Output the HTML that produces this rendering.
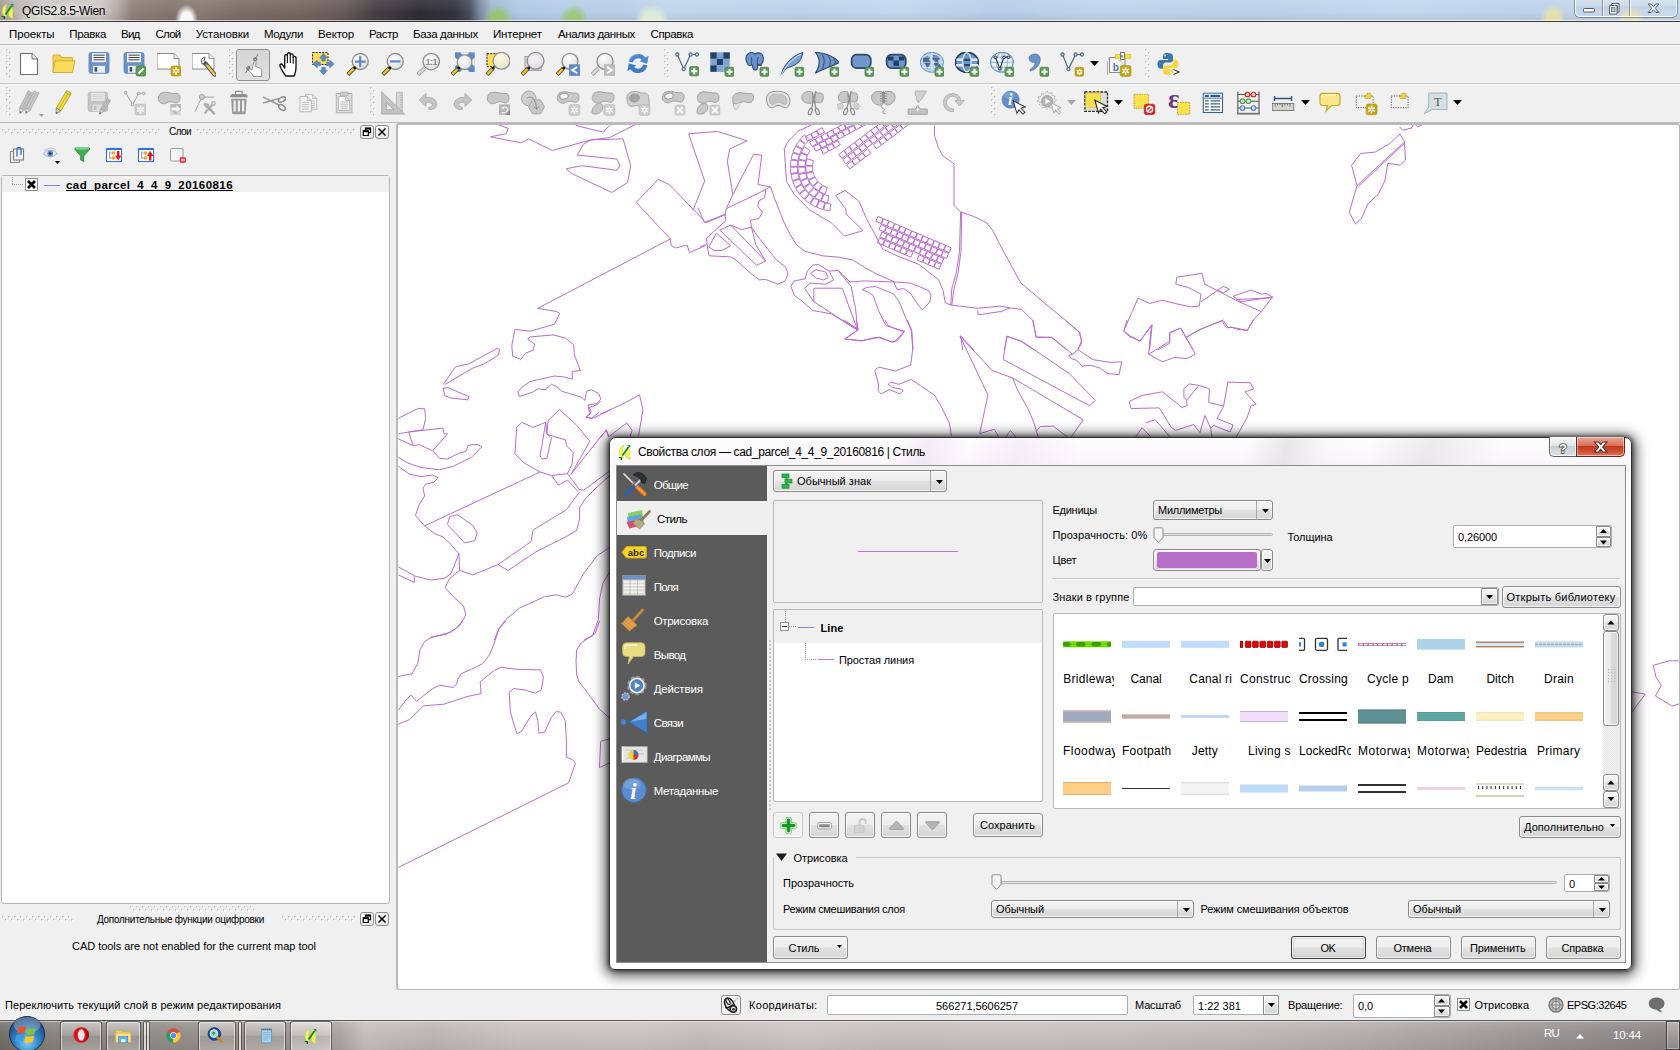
<!DOCTYPE html><html><head><meta charset="utf-8"><title>QGIS</title><style>
html,body{margin:0;padding:0;width:1680px;height:1050px;overflow:hidden;background:#f0f0f0;font-family:"Liberation Sans",sans-serif;}
body{position:relative}
div,span,svg.ic{position:absolute;box-sizing:border-box}
span{white-space:nowrap;line-height:16px;color:#000}
.t{font-size:11px}
.m{font-size:11.5px}
.l{font-size:12px}
.tt{font-size:12px}
.w{color:#fff}
.btn{border:1px solid #8a8a8a;border-radius:3px;background:linear-gradient(#f4f4f4 0%,#ededed 48%,#e1e1e1 52%,#d6d6d6 100%);box-shadow:inset 0 0 0 1px rgba(255,255,255,.75)}
.inp{border:1px solid #abadb3;border-radius:2px;background:#fff}
.frame{border:1px solid #b8b8b8;border-radius:2px}
.hdl{width:4px;background-image:radial-gradient(circle at 1px 1px,#c8c8c8 0.8px,transparent 1px),radial-gradient(circle at 3px 3px,#c8c8c8 0.8px,transparent 1px);background-size:4px 4px}
</style></head><body><svg width="0" height="0" style="position:absolute"><defs>
<radialGradient id="lg" cx=".4" cy=".35" r=".7"><stop offset="0" stop-color="#ffffff"/><stop offset="1" stop-color="#dcdcdc"/></radialGradient>
<radialGradient id="lgy" cx=".4" cy=".35" r=".7"><stop offset="0" stop-color="#fbf9e8"/><stop offset="1" stop-color="#e6e2c4"/></radialGradient>
<radialGradient id="lgp" cx=".4" cy=".35" r=".7"><stop offset="0" stop-color="#f6f3f6"/><stop offset="1" stop-color="#ddd8de"/></radialGradient>
</defs></svg><div style="left:0px;top:0px;width:1680px;height:22px;background:linear-gradient(90deg,#a29a9a 0px,#b9b2b1 14px,#cbc6c5 40px,#cdc8c6 100px,#b3a8a4 118px,#8f807a 132px,#85756f 170px,#8a7a74 200px,#7d6d68 240px,#76675f 300px,#66595a 345px,#443e42 378px,#2f2d34 420px,#33333d 455px,#4a4e5c 470px,#7d8aa3 480px,#a3b9d3 492px,#b1c9e4 520px,#b6cde8 560px,#b7cee6 584px,#b9cfe8 630px,#c2d5ea 664px,#bdd3ec 800px,#c3d7ee 900px,#b7cde8 1000px,#c0d5ec 1100px,#bbd1ea 1250px,#c3d7ee 1400px,#bdd2ea 1530px,#c2d5e8 1570px,#c5d8ec 1680px)"></div>
<div style="left:0px;top:0px;width:1680px;height:20px;background:linear-gradient(180deg,rgba(255,255,255,.10),rgba(255,255,255,0) 60%,rgba(0,0,0,.06))"></div>
<div style="left:175px;top:4px;width:23px;height:22px;background:radial-gradient(ellipse at 50% 75%,rgba(255,255,255,.95) 0%,rgba(255,255,255,.95) 35%,rgba(255,255,255,0) 70%)"></div>
<div style="left:14px;top:4px;width:52px;height:22px;background:radial-gradient(ellipse at 50% 75%,rgba(235,240,215,.5) 0%,rgba(235,240,215,.5) 35%,rgba(255,255,255,0) 70%)"></div>
<div style="left:483px;top:4px;width:30px;height:22px;background:radial-gradient(ellipse at 50% 75%,rgba(150,200,90,.75) 0%,rgba(150,200,90,.75) 35%,rgba(255,255,255,0) 70%)"></div>
<div style="left:559px;top:4px;width:30px;height:22px;background:radial-gradient(ellipse at 50% 75%,rgba(150,200,90,.7) 0%,rgba(150,200,90,.7) 35%,rgba(255,255,255,0) 70%)"></div>
<div style="left:634px;top:4px;width:36px;height:22px;background:radial-gradient(ellipse at 50% 75%,rgba(225,238,215,.9) 0%,rgba(225,238,215,.9) 35%,rgba(255,255,255,0) 70%)"></div>
<div style="left:1540px;top:4px;width:26px;height:22px;background:radial-gradient(ellipse at 50% 75%,rgba(242,228,160,.8) 0%,rgba(242,228,160,.8) 35%,rgba(255,255,255,0) 70%)"></div>
<div style="left:1618px;top:4px;width:26px;height:22px;background:radial-gradient(ellipse at 50% 75%,rgba(242,228,160,.7) 0%,rgba(242,228,160,.7) 35%,rgba(255,255,255,0) 70%)"></div>
<div style="left:0px;top:20px;width:1680px;height:1px;background:rgba(255,255,255,.6)"></div>
<div style="left:0px;top:21px;width:1680px;height:1px;background:#3a3a3c"></div>
<div style="left:14px;top:2px;width:100px;height:17px;background:radial-gradient(ellipse at center,rgba(255,255,255,.55),rgba(255,255,255,0) 70%)"></div>
<svg class="ic" style="left:0px;top:1px" width="15" height="19" viewBox="0 0 15 19"><path d="M6.800 3.200C3.500 4.500 1.800 8 2.300 11.500C2.700 14 4.500 15.800 6.500 15.500C5.300 12 5.500 7 6.800 3.200Z" fill="#eef55a" stroke="#c3cf3a" stroke-width=".5"/><path d="M11 5.500C13 7 13.600 10.500 12.600 13.500C12 15.200 13 16 13.200 17C11.500 17.600 10 16.800 9.200 15.500C8 13.500 8.600 9 11 5.500Z" fill="#eef55a" stroke="#c3cf3a" stroke-width=".5"/><path d="M5.500 13.500L11.500 5" stroke="#168a16" stroke-width="1.700"/><path d="M10.300 3.200L13.400 2.800L13.200 6Z" fill="#15a015"/><path d="M1.800 15l3.400.3-.3 2.800-1.300-.2.200-1.700-2-.2Z" fill="#0f5c0f"/></svg>
<span class="tt" style="left:22px;top:2.64px;;letter-spacing:-0.359px">QGIS2.8.5-Wien</span>
<div style="left:1575px;top:-4px;width:102px;height:21px;border:1px solid rgba(255,255,255,.85);border-radius:0 0 5px 5px;box-shadow:0 0 0 1px rgba(70,80,100,.55);background:linear-gradient(rgba(255,255,255,.35),rgba(255,255,255,.08) 45%,rgba(160,185,215,.15) 50%,rgba(255,255,255,.15))"></div>
<div style="left:1602px;top:0px;width:1px;height:16px;background:rgba(70,80,100,.55)"></div>
<div style="left:1603px;top:0px;width:1px;height:16px;background:rgba(255,255,255,.7)"></div>
<div style="left:1629px;top:0px;width:1px;height:16px;background:rgba(70,80,100,.55)"></div>
<div style="left:1630px;top:0px;width:1px;height:16px;background:rgba(255,255,255,.7)"></div>
<svg class="ic" style="left:1575px;top:0" width="102" height="17" viewBox="0 0 102 17"><rect x="8.500" y="8.500" width="11" height="3.500" rx=".8" fill="#fff" stroke="#535c6b" stroke-width="1"/><path d="M36.500 3.500h7.500v8.500h-7.500z" fill="#fff" stroke="#535c6b" stroke-width="1"/><rect x="38.300" y="5.500" width="4" height="4.500" fill="#b8cbe2" stroke="#535c6b" stroke-width=".8"/><path d="M34.500 5.500h7.500v8.500h-7.500z" fill="#fff" stroke="#535c6b" stroke-width="1"/><rect x="36.500" y="7.700" width="3.500" height="4" fill="#b8cbe2" stroke="#535c6b" stroke-width=".8"/><path d="M73 4h3.200l2.300 2.700L80.800 4H84l-3.800 4.300L84 12.500h-3.200l-2.300-2.700-2.300 2.700H73l3.800-4.200Z" fill="#fff" stroke="#535c6b" stroke-width="1"/></svg>
<div style="left:0px;top:22px;width:1680px;height:23px;background:#f0f0f0"></div>
<span class="m" style="left:9px;top:26.02px;;letter-spacing:-0.094px">Проекты</span>
<span class="m" style="left:69.3px;top:26.02px;;letter-spacing:-0.360px">Правка</span>
<span class="m" style="left:121px;top:26.02px;;letter-spacing:-0.771px">Вид</span>
<span class="m" style="left:155.5px;top:26.02px;;letter-spacing:-0.742px">Слой</span>
<span class="m" style="left:195.8px;top:26.02px;;letter-spacing:-0.105px">Установки</span>
<span class="m" style="left:264px;top:26.02px;;letter-spacing:-0.367px">Модули</span>
<span class="m" style="left:318px;top:26.02px;;letter-spacing:-0.193px">Вектор</span>
<span class="m" style="left:369px;top:26.02px;;letter-spacing:-0.422px">Растр</span>
<span class="m" style="left:413px;top:26.02px;;letter-spacing:-0.320px">База данных</span>
<span class="m" style="left:493px;top:26.02px;;letter-spacing:-0.173px">Интернет</span>
<span class="m" style="left:558px;top:26.02px;;letter-spacing:-0.373px">Анализ данных</span>
<span class="m" style="left:650.5px;top:26.02px;;letter-spacing:-0.375px">Справка</span>
<div style="left:0px;top:44px;width:1680px;height:1px;background:#b9b9b9"></div>
<div style="left:0px;top:45px;width:1680px;height:1px;background:#fbfbfb"></div>
<div style="left:0px;top:83px;width:1680px;height:1px;background:#c4c4c4"></div>
<div style="left:0px;top:84px;width:1680px;height:1px;background:#fafafa"></div>
<div style="left:0px;top:122px;width:1680px;height:1px;background:#bdbdbd"></div>
<svg class="ic" style="left:6px;top:49px" width="6" height="30" viewBox="0 0 6 30"><rect x="0" y="0" width="1.500" height="1.500" fill="#b9b9b9"/><rect x="1" y="1" width="1.500" height="1.500" fill="#fff"/><rect x="3" y="3" width="1.500" height="1.500" fill="#b9b9b9"/><rect x="4" y="4" width="1.500" height="1.500" fill="#fff"/><rect x="0" y="6" width="1.500" height="1.500" fill="#b9b9b9"/><rect x="1" y="7" width="1.500" height="1.500" fill="#fff"/><rect x="3" y="9" width="1.500" height="1.500" fill="#b9b9b9"/><rect x="4" y="10" width="1.500" height="1.500" fill="#fff"/><rect x="0" y="12" width="1.500" height="1.500" fill="#b9b9b9"/><rect x="1" y="13" width="1.500" height="1.500" fill="#fff"/><rect x="3" y="15" width="1.500" height="1.500" fill="#b9b9b9"/><rect x="4" y="16" width="1.500" height="1.500" fill="#fff"/><rect x="0" y="18" width="1.500" height="1.500" fill="#b9b9b9"/><rect x="1" y="19" width="1.500" height="1.500" fill="#fff"/><rect x="3" y="21" width="1.500" height="1.500" fill="#b9b9b9"/><rect x="4" y="22" width="1.500" height="1.500" fill="#fff"/><rect x="0" y="24" width="1.500" height="1.500" fill="#b9b9b9"/><rect x="1" y="25" width="1.500" height="1.500" fill="#fff"/><rect x="3" y="27" width="1.500" height="1.500" fill="#b9b9b9"/><rect x="4" y="28" width="1.500" height="1.500" fill="#fff"/></svg>
<svg class="ic" style="left:229px;top:49px" width="6" height="30" viewBox="0 0 6 30"><rect x="0" y="0" width="1.500" height="1.500" fill="#b9b9b9"/><rect x="1" y="1" width="1.500" height="1.500" fill="#fff"/><rect x="3" y="3" width="1.500" height="1.500" fill="#b9b9b9"/><rect x="4" y="4" width="1.500" height="1.500" fill="#fff"/><rect x="0" y="6" width="1.500" height="1.500" fill="#b9b9b9"/><rect x="1" y="7" width="1.500" height="1.500" fill="#fff"/><rect x="3" y="9" width="1.500" height="1.500" fill="#b9b9b9"/><rect x="4" y="10" width="1.500" height="1.500" fill="#fff"/><rect x="0" y="12" width="1.500" height="1.500" fill="#b9b9b9"/><rect x="1" y="13" width="1.500" height="1.500" fill="#fff"/><rect x="3" y="15" width="1.500" height="1.500" fill="#b9b9b9"/><rect x="4" y="16" width="1.500" height="1.500" fill="#fff"/><rect x="0" y="18" width="1.500" height="1.500" fill="#b9b9b9"/><rect x="1" y="19" width="1.500" height="1.500" fill="#fff"/><rect x="3" y="21" width="1.500" height="1.500" fill="#b9b9b9"/><rect x="4" y="22" width="1.500" height="1.500" fill="#fff"/><rect x="0" y="24" width="1.500" height="1.500" fill="#b9b9b9"/><rect x="1" y="25" width="1.500" height="1.500" fill="#fff"/><rect x="3" y="27" width="1.500" height="1.500" fill="#b9b9b9"/><rect x="4" y="28" width="1.500" height="1.500" fill="#fff"/></svg>
<svg class="ic" style="left:664px;top:49px" width="6" height="30" viewBox="0 0 6 30"><rect x="0" y="0" width="1.500" height="1.500" fill="#b9b9b9"/><rect x="1" y="1" width="1.500" height="1.500" fill="#fff"/><rect x="3" y="3" width="1.500" height="1.500" fill="#b9b9b9"/><rect x="4" y="4" width="1.500" height="1.500" fill="#fff"/><rect x="0" y="6" width="1.500" height="1.500" fill="#b9b9b9"/><rect x="1" y="7" width="1.500" height="1.500" fill="#fff"/><rect x="3" y="9" width="1.500" height="1.500" fill="#b9b9b9"/><rect x="4" y="10" width="1.500" height="1.500" fill="#fff"/><rect x="0" y="12" width="1.500" height="1.500" fill="#b9b9b9"/><rect x="1" y="13" width="1.500" height="1.500" fill="#fff"/><rect x="3" y="15" width="1.500" height="1.500" fill="#b9b9b9"/><rect x="4" y="16" width="1.500" height="1.500" fill="#fff"/><rect x="0" y="18" width="1.500" height="1.500" fill="#b9b9b9"/><rect x="1" y="19" width="1.500" height="1.500" fill="#fff"/><rect x="3" y="21" width="1.500" height="1.500" fill="#b9b9b9"/><rect x="4" y="22" width="1.500" height="1.500" fill="#fff"/><rect x="0" y="24" width="1.500" height="1.500" fill="#b9b9b9"/><rect x="1" y="25" width="1.500" height="1.500" fill="#fff"/><rect x="3" y="27" width="1.500" height="1.500" fill="#b9b9b9"/><rect x="4" y="28" width="1.500" height="1.500" fill="#fff"/></svg>
<svg class="ic" style="left:1145px;top:49px" width="6" height="30" viewBox="0 0 6 30"><rect x="0" y="0" width="1.500" height="1.500" fill="#b9b9b9"/><rect x="1" y="1" width="1.500" height="1.500" fill="#fff"/><rect x="3" y="3" width="1.500" height="1.500" fill="#b9b9b9"/><rect x="4" y="4" width="1.500" height="1.500" fill="#fff"/><rect x="0" y="6" width="1.500" height="1.500" fill="#b9b9b9"/><rect x="1" y="7" width="1.500" height="1.500" fill="#fff"/><rect x="3" y="9" width="1.500" height="1.500" fill="#b9b9b9"/><rect x="4" y="10" width="1.500" height="1.500" fill="#fff"/><rect x="0" y="12" width="1.500" height="1.500" fill="#b9b9b9"/><rect x="1" y="13" width="1.500" height="1.500" fill="#fff"/><rect x="3" y="15" width="1.500" height="1.500" fill="#b9b9b9"/><rect x="4" y="16" width="1.500" height="1.500" fill="#fff"/><rect x="0" y="18" width="1.500" height="1.500" fill="#b9b9b9"/><rect x="1" y="19" width="1.500" height="1.500" fill="#fff"/><rect x="3" y="21" width="1.500" height="1.500" fill="#b9b9b9"/><rect x="4" y="22" width="1.500" height="1.500" fill="#fff"/><rect x="0" y="24" width="1.500" height="1.500" fill="#b9b9b9"/><rect x="1" y="25" width="1.500" height="1.500" fill="#fff"/><rect x="3" y="27" width="1.500" height="1.500" fill="#b9b9b9"/><rect x="4" y="28" width="1.500" height="1.500" fill="#fff"/></svg>
<svg class="ic" style="left:6px;top:87px" width="6" height="30" viewBox="0 0 6 30"><rect x="0" y="0" width="1.500" height="1.500" fill="#b9b9b9"/><rect x="1" y="1" width="1.500" height="1.500" fill="#fff"/><rect x="3" y="3" width="1.500" height="1.500" fill="#b9b9b9"/><rect x="4" y="4" width="1.500" height="1.500" fill="#fff"/><rect x="0" y="6" width="1.500" height="1.500" fill="#b9b9b9"/><rect x="1" y="7" width="1.500" height="1.500" fill="#fff"/><rect x="3" y="9" width="1.500" height="1.500" fill="#b9b9b9"/><rect x="4" y="10" width="1.500" height="1.500" fill="#fff"/><rect x="0" y="12" width="1.500" height="1.500" fill="#b9b9b9"/><rect x="1" y="13" width="1.500" height="1.500" fill="#fff"/><rect x="3" y="15" width="1.500" height="1.500" fill="#b9b9b9"/><rect x="4" y="16" width="1.500" height="1.500" fill="#fff"/><rect x="0" y="18" width="1.500" height="1.500" fill="#b9b9b9"/><rect x="1" y="19" width="1.500" height="1.500" fill="#fff"/><rect x="3" y="21" width="1.500" height="1.500" fill="#b9b9b9"/><rect x="4" y="22" width="1.500" height="1.500" fill="#fff"/><rect x="0" y="24" width="1.500" height="1.500" fill="#b9b9b9"/><rect x="1" y="25" width="1.500" height="1.500" fill="#fff"/><rect x="3" y="27" width="1.500" height="1.500" fill="#b9b9b9"/><rect x="4" y="28" width="1.500" height="1.500" fill="#fff"/></svg>
<svg class="ic" style="left:370px;top:87px" width="6" height="30" viewBox="0 0 6 30"><rect x="0" y="0" width="1.500" height="1.500" fill="#b9b9b9"/><rect x="1" y="1" width="1.500" height="1.500" fill="#fff"/><rect x="3" y="3" width="1.500" height="1.500" fill="#b9b9b9"/><rect x="4" y="4" width="1.500" height="1.500" fill="#fff"/><rect x="0" y="6" width="1.500" height="1.500" fill="#b9b9b9"/><rect x="1" y="7" width="1.500" height="1.500" fill="#fff"/><rect x="3" y="9" width="1.500" height="1.500" fill="#b9b9b9"/><rect x="4" y="10" width="1.500" height="1.500" fill="#fff"/><rect x="0" y="12" width="1.500" height="1.500" fill="#b9b9b9"/><rect x="1" y="13" width="1.500" height="1.500" fill="#fff"/><rect x="3" y="15" width="1.500" height="1.500" fill="#b9b9b9"/><rect x="4" y="16" width="1.500" height="1.500" fill="#fff"/><rect x="0" y="18" width="1.500" height="1.500" fill="#b9b9b9"/><rect x="1" y="19" width="1.500" height="1.500" fill="#fff"/><rect x="3" y="21" width="1.500" height="1.500" fill="#b9b9b9"/><rect x="4" y="22" width="1.500" height="1.500" fill="#fff"/><rect x="0" y="24" width="1.500" height="1.500" fill="#b9b9b9"/><rect x="1" y="25" width="1.500" height="1.500" fill="#fff"/><rect x="3" y="27" width="1.500" height="1.500" fill="#b9b9b9"/><rect x="4" y="28" width="1.500" height="1.500" fill="#fff"/></svg>
<svg class="ic" style="left:991px;top:87px" width="6" height="30" viewBox="0 0 6 30"><rect x="0" y="0" width="1.500" height="1.500" fill="#b9b9b9"/><rect x="1" y="1" width="1.500" height="1.500" fill="#fff"/><rect x="3" y="3" width="1.500" height="1.500" fill="#b9b9b9"/><rect x="4" y="4" width="1.500" height="1.500" fill="#fff"/><rect x="0" y="6" width="1.500" height="1.500" fill="#b9b9b9"/><rect x="1" y="7" width="1.500" height="1.500" fill="#fff"/><rect x="3" y="9" width="1.500" height="1.500" fill="#b9b9b9"/><rect x="4" y="10" width="1.500" height="1.500" fill="#fff"/><rect x="0" y="12" width="1.500" height="1.500" fill="#b9b9b9"/><rect x="1" y="13" width="1.500" height="1.500" fill="#fff"/><rect x="3" y="15" width="1.500" height="1.500" fill="#b9b9b9"/><rect x="4" y="16" width="1.500" height="1.500" fill="#fff"/><rect x="0" y="18" width="1.500" height="1.500" fill="#b9b9b9"/><rect x="1" y="19" width="1.500" height="1.500" fill="#fff"/><rect x="3" y="21" width="1.500" height="1.500" fill="#b9b9b9"/><rect x="4" y="22" width="1.500" height="1.500" fill="#fff"/><rect x="0" y="24" width="1.500" height="1.500" fill="#b9b9b9"/><rect x="1" y="25" width="1.500" height="1.500" fill="#fff"/><rect x="3" y="27" width="1.500" height="1.500" fill="#b9b9b9"/><rect x="4" y="28" width="1.500" height="1.500" fill="#fff"/></svg>
<div style="left:236px;top:49px;width:34px;height:32px;border:1px solid #8e8e8e;border-radius:3px;background:linear-gradient(#d4d4d4,#e2e2e2)"></div>
<svg class="ic" style="left:17px;top:52px" width="24" height="26" viewBox="0 0 24 26"><path d="M3.5 1.5H15L20.5 7V22.5H3.5Z" fill="#fff" stroke="#6e6e6e" stroke-width="1.1"/><path d="M15 1.5V7H20.5" fill="#f2f2f2" stroke="#6e6e6e" stroke-width="1"/></svg>
<svg class="ic" style="left:52px;top:52px" width="24" height="26" viewBox="0 0 24 26"><path d="M1 20V4Q1 3 2 3H8L9.5 5.5H19.5Q20.5 5.5 20.5 6.5V9" fill="#f5d24e" stroke="#cfae3a" stroke-width="1"/><path d="M3.2 8.8H23L20.3 20.5H0.8Z" fill="#fbdc59" stroke="#cfae3a" stroke-width="1"/></svg>
<svg class="ic" style="left:87px;top:52px" width="24" height="26" viewBox="0 0 24 26"><rect x="2" y=".5" width="20" height="20.8" rx="2.2" fill="#6b93c7" stroke="#5a80b4" stroke-width=".8"/><rect x="5" y="1.2" width="14" height="9" fill="#f4f4f4"/><path d="M6.5 3.2h11M6.5 5.5h11M6.5 7.8h11" stroke="#444" stroke-width="1"/><rect x="6" y="13.8" width="12" height="7" fill="#ececec"/><rect x="7.6" y="15.2" width="2.6" height="4.4" fill="#2f4f7a"/></svg>
<svg class="ic" style="left:122px;top:52px" width="24" height="26" viewBox="0 0 24 26"><rect x="2" y=".5" width="20" height="20.8" rx="2.2" fill="#6b93c7" stroke="#5a80b4" stroke-width=".8"/><rect x="5" y="1.2" width="14" height="9" fill="#f4f4f4"/><path d="M6.5 3.2h11M6.5 5.5h11M6.5 7.8h11" stroke="#444" stroke-width="1"/><rect x="6" y="13.8" width="12" height="7" fill="#ececec"/><rect x="7.6" y="15.2" width="2.6" height="4.4" fill="#2f4f7a"/><rect x="14" y="14" width="10" height="10" rx="1.8" fill="#5b9a57" stroke="#4a8046" stroke-width=".7"/><path d="M16.5 21.5L21.5 16.5" stroke="#fff" stroke-width="2.2"/></svg>
<svg class="ic" style="left:157px;top:52px" width="24" height="26" viewBox="0 0 24 26"><path d="M0 1.5H17L22 6.5V17H0Z" fill="#fff" stroke="#8a8a8a" stroke-width="1"/><path d="M17 1.5V6.5H22" fill="#f0f0f0" stroke="#8a8a8a" stroke-width=".9"/><rect x="14" y="14" width="10" height="10" rx="1.8" fill="#c9a516" stroke="#b08f10" stroke-width=".6"/><path d="M19 15.6 v6.8 M16.042 17.3 l5.916 3.4 M16.042 20.7 l5.916 -3.4" stroke="#fff" stroke-width="1.5" fill="none"/><circle cx="19" cy="19" r="1" fill="#c9a516"/></svg>
<svg class="ic" style="left:192px;top:52px" width="24" height="26" viewBox="0 0 24 26"><path d="M0 1.5H17L22 6.5V17H0Z" fill="#fff" stroke="#8a8a8a" stroke-width="1"/><path d="M17 1.5V6.5H22" fill="#f0f0f0" stroke="#8a8a8a" stroke-width=".9"/><path d="M14 12L22.5 22.5" stroke="#3a3a3a" stroke-width="4.2" stroke-linecap="round"/><path d="M14 12L22.5 22.5" stroke="#e8c860" stroke-width="2.6" stroke-linecap="round"/><path d="M13 5.2A4 4 0 1 0 15.5 12.5L12.2 8.6Z" fill="#e6e6e6" stroke="#555" stroke-width="1"/><path d="M11.5 12.5L14.5 10" stroke="#555" stroke-width="2.4"/></svg>
<svg class="ic" style="left:241px;top:52px" width="24" height="26" viewBox="0 0 24 26"><path d="M12.5 24.5C11 21 8.5 19 6.5 17.5C5.5 16.5 6.5 15 8 16L11 18L13 9.5C13.5 8 15.5 8.5 15.2 10L14.5 14.5L19 16C20.5 16.5 21 18 20.8 20L20.5 24.5Z" fill="#fff" stroke="#888" stroke-width=".9"/><path d="M17 2L13 9M9 13.5L4.5 21" stroke="#666" stroke-width=".8"/><circle cx="14.2" cy="7.2" r="1.6" fill="none" stroke="#555" stroke-width=".8"/><circle cx="7.2" cy="16.3" r="1.5" fill="none" stroke="#555" stroke-width=".8"/></svg>
<svg class="ic" style="left:276px;top:52px" width="24" height="26" viewBox="0 0 24 26"><g transform="translate(0.3,-1.2) scale(1.12)"><path d="M8.5 22.5C6 19 4 15.5 3.3 13.5C2.8 12 4.5 11 5.6 12.5L7.5 15.5V4.8C7.5 3 9.9 3 9.9 4.8V3.2C9.9 1.3 12.5 1.3 12.5 3.2V4C12.5 2.3 15.1 2.3 15.1 4V6C15.1 4.5 17.6 4.5 17.6 6.3V15C17.6 18 16.8 20 16 22.5Z" fill="#fff" stroke="#111" stroke-width="1.2" stroke-linejoin="round"/><path d="M9.9 5v6M12.5 4.5v6.5M15.1 6v5.5" stroke="#111" stroke-width="1"/></g></svg>
<svg class="ic" style="left:311px;top:52px" width="24" height="26" viewBox="0 0 24 26"><rect x="1.5" y=".5" width="15.5" height="12" fill="#fbdc59" stroke="#222" stroke-width="1" stroke-dasharray="2 1.2"/><g fill="#5b8ac6" stroke="#476fa3" stroke-width=".5"><path d="M12.5 1.5l4 4.5h-2.2v3h-3.6v-3H8.5Z"/><path d="M12.5 22.8l4-4.5h-2.2v-3h-3.6v3H8.5Z"/><path d="M1.8 12l4.5-4v2.2h3v3.6h-3v2.2Z"/><path d="M23.2 12l-4.5-4v2.2h-3v3.6h3v2.2Z"/></g></svg>
<svg class="ic" style="left:346px;top:52px" width="24" height="26" viewBox="0 0 24 26"><path d="M8.4 16 L1.8 22.5" stroke="#4a4a30" stroke-width="4" stroke-linecap="butt"/><path d="M8.2 16.2 L2.3 22" stroke="#f4c430" stroke-width="2.4" stroke-linecap="butt"/><circle cx="14.25" cy="9.5" r="8" fill="url(#lg)" stroke="#8c8c8c" stroke-width="1.3"/><circle cx="8.8" cy="15.7" r="1.5" fill="#111"/><path d="M9 9.6h10.5M14.25 4.3v10.6" stroke="#5b8ac6" stroke-width="2.2"/></svg>
<svg class="ic" style="left:381px;top:52px" width="24" height="26" viewBox="0 0 24 26"><path d="M8.4 16 L1.8 22.5" stroke="#4a4a30" stroke-width="4" stroke-linecap="butt"/><path d="M8.2 16.2 L2.3 22" stroke="#f4c430" stroke-width="2.4" stroke-linecap="butt"/><circle cx="14.25" cy="9.5" r="8" fill="url(#lg)" stroke="#8c8c8c" stroke-width="1.3"/><circle cx="8.8" cy="15.7" r="1.5" fill="#111"/><path d="M9 9.4h10.5" stroke="#5b8ac6" stroke-width="2.2"/></svg>
<svg class="ic" style="left:416px;top:52px" width="24" height="26" viewBox="0 0 24 26"><path d="M8.6 16.2 L1.8 22.5" stroke="#9a9a9a" stroke-width="4" stroke-linecap="butt"/><path d="M8.4 16.4 L2.3 22" stroke="#d8d8d8" stroke-width="2.4" stroke-linecap="butt"/><circle cx="15.2" cy="9.6" r="8.2" fill="url(#lg)" stroke="#8c8c8c" stroke-width="1.3"/><text x="15.2" y="13" font-size="9" font-weight="bold" text-anchor="middle" fill="#8e8e8e" font-family="Liberation Sans" letter-spacing="-.6">1:1</text></svg>
<svg class="ic" style="left:451px;top:52px" width="24" height="26" viewBox="0 0 24 26"><rect x="4" y=".3" width="19.7" height="19.7" fill="#5b8ac6"/><path d="M9 .3h9.5l-4.7 5ZM23.7 5.5v9l-5-4.5ZM4 5.5v9l5-4.5ZM9 20h9.5l-4.7-5Z" fill="#f0f0f0"/><path d="M7.3 16.3 L1 22.6" stroke="#4a4a30" stroke-width="4" stroke-linecap="butt"/><path d="M7.1 16.5 L1.5 22.1" stroke="#f4c430" stroke-width="2.4" stroke-linecap="butt"/><circle cx="13.6" cy="10.2" r="7.3" fill="url(#lg)" stroke="#8c8c8c" stroke-width="1.3"/><circle cx="7.7" cy="16" r="1.5" fill="#111"/></svg>
<svg class="ic" style="left:486px;top:52px" width="24" height="26" viewBox="0 0 24 26"><rect x="1" y="1.6" width="12" height="13" fill="#fbdc59" stroke="#222" stroke-width="1" stroke-dasharray="2 1.2"/><path d="M6.8 16.3 L1 22.6" stroke="#4a4a30" stroke-width="4" stroke-linecap="butt"/><path d="M6.6 16.5 L1.5 22.1" stroke="#f4c430" stroke-width="2.4" stroke-linecap="butt"/><circle cx="15.5" cy="8.8" r="8.4" fill="url(#lgy)" stroke="#8c8c8c" stroke-width="1.3"/><circle cx="7.2" cy="16" r="1.5" fill="#111"/></svg>
<svg class="ic" style="left:521px;top:52px" width="24" height="26" viewBox="0 0 24 26"><rect x="4" y="4.6" width="16.2" height="13.8" fill="#d9d0da" stroke="#a394a6" stroke-width=".9"/><path d="M7.3 16.3 L1 22.6" stroke="#4a4a30" stroke-width="4" stroke-linecap="butt"/><path d="M7.1 16.5 L1.5 22.1" stroke="#f4c430" stroke-width="2.4" stroke-linecap="butt"/><circle cx="14.6" cy="8.8" r="8.4" fill="url(#lgp)" stroke="#8c8c8c" stroke-width="1.3"/><circle cx="7.7" cy="16" r="1.5" fill="#111"/></svg>
<svg class="ic" style="left:556px;top:52px" width="24" height="26" viewBox="0 0 24 26"><path d="M7.3 16.3 L1 22.6" stroke="#4a4a30" stroke-width="4" stroke-linecap="butt"/><path d="M7.1 16.5 L1.5 22.1" stroke="#f4c430" stroke-width="2.4" stroke-linecap="butt"/><circle cx="14" cy="9.3" r="8" fill="url(#lg)" stroke="#8c8c8c" stroke-width="1.3"/><circle cx="7.7" cy="16" r="1.5" fill="#111"/><rect x="13.4" y="12.8" width="10.4" height="10.6" fill="#5b8ac6" stroke="#4a74ab" stroke-width=".6"/><path d="M21.3 15l-5.2 3.1 5.2 3.1" stroke="#fff" stroke-width="1.9" fill="none"/></svg>
<svg class="ic" style="left:591px;top:52px" width="24" height="26" viewBox="0 0 24 26"><path d="M7.3 16.3 L1 22.6" stroke="#9a9a9a" stroke-width="4" stroke-linecap="butt"/><path d="M7.1 16.5 L1.5 22.1" stroke="#d8d8d8" stroke-width="2.4" stroke-linecap="butt"/><circle cx="14" cy="9.3" r="8" fill="url(#lg)" stroke="#8c8c8c" stroke-width="1.3"/><rect x="13.4" y="12.8" width="10.4" height="10.6" fill="#bdbdbd" stroke="#aaa" stroke-width=".6"/><path d="M15.9 15l5.2 3.1-5.2 3.1" stroke="#fff" stroke-width="1.9" fill="none"/></svg>
<svg class="ic" style="left:626px;top:52px" width="24" height="26" viewBox="0 0 24 26"><g id="rfa"><path d="M4.800 10.200A7.300 7.300 0 0 1 18 7.300" fill="none" stroke="#4a86d0" stroke-width="4.400"/><path d="M21.200 11.800L22.600 3.800L13.600 9.600Z" fill="#4a86d0"/><path d="M3.200 9.500A9 9 0 0 1 12 2.200" fill="none" stroke="#8fbcee" stroke-width="1" opacity=".8"/></g><g transform="rotate(180 12 11.500)"><path d="M4.800 10.200A7.300 7.300 0 0 1 18 7.300" fill="none" stroke="#3f7cc8" stroke-width="4.400"/><path d="M21.200 11.800L22.600 3.800L13.600 9.600Z" fill="#3f7cc8"/></g></svg>
<svg class="ic" style="left:675px;top:52px" width="24" height="26" viewBox="0 0 24 26"><path d="M2.3 2.5L8.8 17.1L15.6 2.5L21.9 2.5" fill="none" stroke="#3f5f80" stroke-width="1.1"/><circle cx="2.3" cy="2.5" r="1.6" fill="#f0f0f0" stroke="#3f5f80" stroke-width="1.1"/><circle cx="8.8" cy="17.1" r="1.6" fill="#f0f0f0" stroke="#3f5f80" stroke-width="1.1"/><circle cx="15.6" cy="2.5" r="1.6" fill="#f0f0f0" stroke="#3f5f80" stroke-width="1.1"/><circle cx="21.9" cy="2.5" r="1.6" fill="#f0f0f0" stroke="#3f5f80" stroke-width="1.1"/><rect x="14.6" y="14.6" width="9.2" height="9.2" rx="1.6" fill="#5b9a57" stroke="#4a8046" stroke-width=".8"/><path d="M16.1 19.2 h6.2 M19.2 16.1 v6.2" stroke="#fff" stroke-width="2" fill="none"/></svg>
<svg class="ic" style="left:710px;top:52px" width="24" height="26" viewBox="0 0 24 26"><rect x="0.3" y="0.3" width="6.55" height="6.55" fill="#243f66"/><rect x="6.8" y="0.3" width="6.55" height="6.55" fill="#7ba3d6"/><rect x="13.3" y="0.3" width="6.55" height="6.55" fill="#243f66"/><rect x="0.3" y="6.8" width="6.55" height="6.55" fill="#7ba3d6"/><rect x="6.8" y="6.8" width="6.55" height="6.55" fill="#243f66"/><rect x="13.3" y="6.8" width="6.55" height="6.55" fill="#7ba3d6"/><rect x="0.3" y="13.3" width="6.55" height="6.55" fill="#243f66"/><rect x="6.8" y="13.3" width="6.55" height="6.55" fill="#7ba3d6"/><rect x="13.3" y="13.3" width="6.55" height="6.55" fill="#7ba3d6"/><rect x="15" y="15.3" width="9" height="9" rx="1.6" fill="#5b9a57" stroke="#4a8046" stroke-width=".8"/><path d="M16.5 19.8 h6 M19.5 16.8 v6" stroke="#fff" stroke-width="2" fill="none"/></svg>
<svg class="ic" style="left:745px;top:52px" width="24" height="26" viewBox="0 0 24 26"><path d="M3 2C0 4 .5 9 3 12.5C4.5 14.5 6.5 14 6.5 11.5C7.5 14 8 16 8.5 17.5C9.5 18.5 12.5 18 12.5 16V12C14 13.5 16.5 13 17.5 10.5C19 7 18.5 3 16 1.5C13.5 .2 11.5 1 10 2C8 .2 5 .3 3 2Z" fill="#6b93c7" stroke="#2f4d78" stroke-width="1.1"/><path d="M6.5 5.5C6.5 8 7 10 6.5 11.5M12.5 12C12 9 12.5 6.5 13.5 5" stroke="#2f4d78" stroke-width=".9" fill="none"/><path d="M12.5 13.2h4.5" stroke="#2f4d78" stroke-width="1.2"/><rect x="15" y="15.3" width="9" height="9" rx="1.6" fill="#5b9a57" stroke="#4a8046" stroke-width=".8"/><path d="M16.5 19.8 h6 M19.5 16.8 v6" stroke="#fff" stroke-width="2" fill="none"/></svg>
<svg class="ic" style="left:780px;top:52px" width="24" height="26" viewBox="0 0 24 26"><path d="M1.2 23.2C3 15 9 5 22.8 .4C22 6 20 9.5 17 11.5C14 14 9.5 15 6 16.5Z" fill="#7ba3d6" stroke="#2f4d78" stroke-width="1"/><path d="M1.2 23.2C5 15 12 7 21 2" stroke="#dfe9f6" stroke-width="1" fill="none"/><rect x="15" y="15.3" width="9" height="9" rx="1.6" fill="#5b9a57" stroke="#4a8046" stroke-width=".8"/><path d="M16.5 19.8 h6 M19.5 16.8 v6" stroke="#fff" stroke-width="2" fill="none"/></svg>
<svg class="ic" style="left:815px;top:52px" width="24" height="26" viewBox="0 0 24 26"><path d="M.3 .3C10 1 19 4 24 10.5C17 14.5 8 16.5 .3 21.3C5 14 6 7 .3 .3Z" fill="#6e97cc" stroke="#2b4870" stroke-width="1.1"/><path d="M6.5 1.5C10 6 10 12 7 17M12.5 3C16 7 16 11.5 14 14.5M18 5.5C20.5 8 20.5 10.5 19.5 12" fill="none" stroke="#2b4870" stroke-width="1"/><rect x="15" y="15.3" width="9" height="9" rx="1.6" fill="#5b9a57" stroke="#4a8046" stroke-width=".8"/><path d="M16.5 19.8 h6 M19.5 16.8 v6" stroke="#fff" stroke-width="2" fill="none"/></svg>
<svg class="ic" style="left:850px;top:52px" width="24" height="26" viewBox="0 0 24 26"><rect x="1.6" y="2.6" width="19.2" height="13.6" rx="5" fill="#7096cc" stroke="#2b4870" stroke-width="1.7"/><rect x="15" y="15.3" width="9" height="9" rx="1.6" fill="#5b9a57" stroke="#4a8046" stroke-width=".8"/><path d="M16.5 19.8 h6 M19.5 16.8 v6" stroke="#fff" stroke-width="2" fill="none"/></svg>
<svg class="ic" style="left:885px;top:52px" width="24" height="26" viewBox="0 0 24 26"><rect x="1.6" y="2.6" width="19.2" height="13.6" rx="5" fill="#7096cc" stroke="#2b4870" stroke-width="1.7"/><path d="M3 4.5h5.5v4H3ZM14 4.5h5.5v4H14ZM8.5 8.5H14V14H8.5Z" fill="#243f66"/><rect x="15" y="15.3" width="9" height="9" rx="1.6" fill="#5b9a57" stroke="#4a8046" stroke-width=".8"/><path d="M16.5 19.8 h6 M19.5 16.8 v6" stroke="#fff" stroke-width="2" fill="none"/></svg>
<svg class="ic" style="left:920px;top:52px" width="24" height="26" viewBox="0 0 24 26"><ellipse cx="11.9" cy="10.3" rx="11.6" ry="10" fill="#b9d2ee" stroke="#5f8cc4" stroke-width="1"/><path d="M3 6l4-2 3 1-1 3 2 2-2 4-2 3-1-4-3-3ZM13 3l5 1 2 3-2 1 1 3-3 4-2-3 1-3-3-2ZM17 13l3-1 1 3-2 2Z" fill="#35557f" opacity=".85"/><path d="M.5 10.3h23M11.9 .5v20M2.5 5h19M2.5 15.5h19" stroke="#e8f0fa" stroke-width=".6" fill="none"/><rect x="15" y="15.3" width="9" height="9" rx="1.6" fill="#5b9a57" stroke="#4a8046" stroke-width=".8"/><path d="M16.5 19.8 h6 M19.5 16.8 v6" stroke="#fff" stroke-width="2" fill="none"/></svg>
<svg class="ic" style="left:955px;top:52px" width="24" height="26" viewBox="0 0 24 26"><ellipse cx="11.9" cy="10.3" rx="11.4" ry="10" fill="#6e97cc" stroke="#1f3557" stroke-width="1.6"/><path d="M1.5 6.5h21v2.6h-21ZM1 12h22v2.6H1.5Z" fill="#e4ecf7"/><path d="M8 6.5h8v2.6H8ZM8.5 12h7v2.6h-7Z" fill="#2b4870"/><ellipse cx="11.9" cy="10.3" rx="4.2" ry="9.6" fill="none" stroke="#e4ecf7" stroke-width="1.2"/><rect x="15" y="15.3" width="9" height="9" rx="1.6" fill="#5b9a57" stroke="#4a8046" stroke-width=".8"/><path d="M16.5 19.8 h6 M19.5 16.8 v6" stroke="#fff" stroke-width="2" fill="none"/></svg>
<svg class="ic" style="left:990px;top:52px" width="24" height="26" viewBox="0 0 24 26"><ellipse cx="11.9" cy="10.3" rx="11.4" ry="10" fill="#eef4fb" stroke="#5f8cc4" stroke-width="1.1"/><path d="M.8 10.3h22.4M2.5 5.3h19M2.5 15.3h19M11.9 .5v19.6" stroke="#7ba3d6" stroke-width=".8"/><ellipse cx="11.9" cy="10.3" rx="5.5" ry="9.8" fill="none" stroke="#7ba3d6" stroke-width=".8"/><path d="M5.5 5.3L9.8 16.8L14 5.3L18.5 5.3" fill="none" stroke="#222" stroke-width="1"/><circle cx="5.5" cy="5.3" r="1.3" fill="#fff" stroke="#222" stroke-width="1"/><circle cx="9.8" cy="16.8" r="1.3" fill="#fff" stroke="#222" stroke-width="1"/><circle cx="14" cy="5.3" r="1.3" fill="#fff" stroke="#222" stroke-width="1"/><circle cx="18.5" cy="5.3" r="1.3" fill="#fff" stroke="#222" stroke-width="1"/><rect x="15" y="15.3" width="9" height="9" rx="1.6" fill="#5b9a57" stroke="#4a8046" stroke-width=".8"/><path d="M16.5 19.8 h6 M19.5 16.8 v6" stroke="#fff" stroke-width="2" fill="none"/></svg>
<svg class="ic" style="left:1025px;top:52px" width="24" height="26" viewBox="0 0 24 26"><path d="M9 2.2C13.5 1.5 16 5 15 9.5C14 14 10 17.5 5.5 19L5 17.5C8.5 15.5 10 13 10.5 10.2C7 11 4 9 4 6C4 3.8 6 2.4 9 2.2Z" fill="#6b93c7" stroke="#3f679e" stroke-width=".7"/><rect x="15" y="15.3" width="9" height="9" rx="1.6" fill="#5b9a57" stroke="#4a8046" stroke-width=".8"/><path d="M16.5 19.8 h6 M19.5 16.8 v6" stroke="#fff" stroke-width="2" fill="none"/></svg>
<svg class="ic" style="left:1060px;top:52px" width="24" height="26" viewBox="0 0 24 26"><path d="M2.5 2.5L8.5 17.1L15.6 2.5L21.9 2.5" fill="none" stroke="#3f5f80" stroke-width="1.1"/><circle cx="2.5" cy="2.5" r="1.6" fill="#f0f0f0" stroke="#3f5f80" stroke-width="1.1"/><circle cx="8.5" cy="17.1" r="1.6" fill="#f0f0f0" stroke="#3f5f80" stroke-width="1.1"/><circle cx="15.6" cy="2.5" r="1.6" fill="#f0f0f0" stroke="#3f5f80" stroke-width="1.1"/><circle cx="21.9" cy="2.5" r="1.6" fill="#f0f0f0" stroke="#3f5f80" stroke-width="1.1"/><rect x="15" y="15.3" width="9" height="9" rx="1.8" fill="#c9a516" stroke="#b08f10" stroke-width=".6"/><path d="M19.5 16.9 v5.8 M16.977 18.35 l5.046 2.9 M16.977 21.25 l5.046 -2.9" stroke="#fff" stroke-width="1.5" fill="none"/><circle cx="19.5" cy="19.8" r="1" fill="#c9a516"/></svg>
<svg class="ic" style="left:1107px;top:52px" width="25" height="26" viewBox="0 0 25 26"><path d="M1 7h13v15" fill="none" stroke="#9a9a9a" stroke-width="1"/><path d="M.3 23V9" stroke="#9a9a9a" stroke-width="1" fill="none"/><path d="M2.5 5.5h15.5v15H2.5Z" fill="#f4f4f4" stroke="#8a8a8a" stroke-width="1"/><path d="M11 8c3 .5 5 2.500 5.500 5.500" stroke="#bbb" fill="none" stroke-width="1"/><text x="5.800" y="18.500" font-size="10" font-weight="bold" fill="#4a7aa8" font-family="Liberation Sans">b</text><rect x="8.600" y="2.500" width="15.400" height="4" fill="#f3e12b" stroke="#c9b81d" stroke-width=".5"/><rect x="13.500" y=".5" width="4" height="7" fill="#fff" stroke="#666" stroke-width=".9"/><path d="M15 3v2.500" stroke="#333" stroke-width="1"/><rect x="13.2" y="13.6" width="10.8" height="10.8" rx="1.8" fill="#c9a516" stroke="#b08f10" stroke-width=".6"/><path d="M18.6 15.2 v7.6 M15.294 17.1 l6.612 3.8 M15.294 20.9 l6.612 -3.8" stroke="#fff" stroke-width="1.5" fill="none"/><circle cx="18.6" cy="19" r="1" fill="#c9a516"/></svg>
<svg class="ic" style="left:1156px;top:52px" width="24" height="26" viewBox="0 0 24 26"><path d="M11.5 1C7 1 7 3 7 4.500V7h5v1H4.500C2 8 1.500 10.500 1.500 12.500S2.500 16.800 4.800 16.800H7V13.500C7 11.500 8.500 10.500 10.500 10.500H14.500C16 10.500 17 9.500 17 8V4.500C17 2 15 1 11.500 1Z" fill="#3a78b0"/><circle cx="9.200" cy="3.600" r="1" fill="#fff"/><path d="M12.500 23C17 23 17 21 17 19.500V17h-5v-1h7.500C22 16 22.500 13.500 22.500 11.500S21.500 7.200 19.200 7.200H17V10.500C17 12.500 15.500 13.500 13.500 13.500H9.500C8 13.500 7 14.500 7 16V19.500C7 22 9 23 12.500 23Z" fill="#fbd548"/><circle cx="14.800" cy="20.400" r="1" fill="#fff"/><path d="M17.500 17.500l5.500 2.500-5.500 2.500" stroke="#444" stroke-width="1.300" fill="none"/></svg>
<svg class="ic" style="left:1090px;top:61px" width="9" height="5" viewBox="0 0 9 5"><path d="M0 0H9L4.5 5Z" fill="#000"/></svg>
<svg class="ic" style="left:17px;top:90px" width="24" height="26" viewBox="0 0 24 26"><path d="M7.35541 20.1821L2.70006 17.8653L11.1723 0.841577L15.8277 3.15842Z" fill="#c4c4c4" stroke="#a8a8a8" stroke-width=".8"/><path d="M2.8 23.5L7.35541 20.1821L2.70006 17.8653Z" fill="#d9d9d9" stroke="#aaa" stroke-width=".8"/><path d="M2.8 23.5L4.4073 22.0659L2.97489 21.353Z" fill="#444"/><path d="M14.9366 4.94894L10.2812 2.63209" stroke="#a8a8a8" stroke-width=".8"/><path d="M5.02774 19.0237L12.6089 3.79052" stroke="#a8a8a8" stroke-width=".7" opacity=".8"/><path d="M13.3554 20.1821L8.70006 17.8653L17.1723 0.841577L21.8277 3.15842Z" fill="#c9c9c9" stroke="#a8a8a8" stroke-width=".8"/><path d="M8.8 23.5L13.3554 20.1821L8.70006 17.8653Z" fill="#d9d9d9" stroke="#aaa" stroke-width=".8"/><path d="M8.8 23.5L10.4073 22.0659L8.97489 21.353Z" fill="#444"/><path d="M20.9366 4.94894L16.2812 2.63209" stroke="#a8a8a8" stroke-width=".8"/><path d="M11.0277 19.0237L18.6089 3.79052" stroke="#a8a8a8" stroke-width=".7" opacity=".8"/></svg>
<svg class="ic" style="left:52px;top:90px" width="24" height="26" viewBox="0 0 24 26"><path d="M8.87986 20.8885L4.2419 18.1227L14.681 0.617124L19.319 3.38288Z" fill="#f0dc3c" stroke="#a8962a" stroke-width=".8"/><path d="M4 23.8L8.87986 20.8885L4.2419 18.1227Z" fill="#d9d9d9" stroke="#777" stroke-width=".8"/><path d="M4 23.8L5.71146 22.492L4.33725 21.6725Z" fill="#444"/><path d="M18.2946 5.10064L13.6567 2.33488" stroke="#a8962a" stroke-width=".8"/><path d="M6.56088 19.5056L15.9756 3.71776" stroke="#a8962a" stroke-width=".7" opacity=".8"/></svg>
<svg class="ic" style="left:87px;top:90px" width="24" height="26" viewBox="0 0 24 26"><rect x="1.200" y="2.200" width="19.500" height="19.300" rx="2" fill="#c4c4c4" stroke="#b4b4b4" stroke-width=".8"/><rect x="4.200" y="2.800" width="13.500" height="8" fill="#e9e9e9"/><path d="M5.500 4.800h11M5.500 6.800h11M5.500 8.800h11" stroke="#cdcdcd" stroke-width=".9"/><rect x="5.500" y="14.500" width="11" height="7" fill="#dedede"/><rect x="7" y="16" width="2.400" height="4" fill="#bcbcbc"/><path d="M16.8936 21.0862L13.5341 18.9151L20.3202 8.41445L23.6798 10.5856Z" fill="#c0c0c0" stroke="#a0a0a0" stroke-width=".8"/><path d="M12.5 24.2L16.8936 21.0862L13.5341 18.9151Z" fill="#d9d9d9" stroke="#a0a0a0" stroke-width=".8"/><path d="M12.5 24.2L14.2575 22.9545L12.9137 22.086Z" fill="#444"/><path d="M22.5942 12.2653L19.2347 10.0942" stroke="#a0a0a0" stroke-width=".8"/><path d="M15.2139 20.0006L20.9144 11.1798" stroke="#a0a0a0" stroke-width=".7" opacity=".8"/></svg>
<svg class="ic" style="left:122px;top:90px" width="24" height="26" viewBox="0 0 24 26"><path d="M3.6 2.5L10.5 14.6L16.8 3.4L21.8 3.4" fill="none" stroke="#9a9a9a" stroke-width="0.9"/><circle cx="3.6" cy="2.5" r="1.3" fill="#f0f0f0" stroke="#9a9a9a" stroke-width="0.9"/><circle cx="10.5" cy="14.6" r="1.3" fill="#f0f0f0" stroke="#9a9a9a" stroke-width="0.9"/><circle cx="16.8" cy="3.4" r="1.3" fill="#f0f0f0" stroke="#9a9a9a" stroke-width="0.9"/><circle cx="21.8" cy="3.4" r="1.3" fill="#f0f0f0" stroke="#9a9a9a" stroke-width="0.9"/><rect x="13" y="14" width="11" height="11" rx="1.8" fill="#cdcdcd" stroke="#b5b5b5" stroke-width=".6"/><path d="M18.5 15.6 v7.8 M15.107 17.55 l6.786 3.9 M15.107 21.45 l6.786 -3.9" stroke="#fff" stroke-width="1.5" fill="none"/><circle cx="18.5" cy="19.5" r="1" fill="#cdcdcd"/></svg>
<svg class="ic" style="left:157px;top:90px" width="24" height="26" viewBox="0 0 24 26"><path transform="translate(0,0)" d="M2 6C2.500 2.500 7 1.800 11 2.500C14 3 16 3.800 19 3.500C22.500 3.200 23.500 6 22.800 9.500C22.300 12.500 20 13.500 17.500 12.500C14.500 11.300 12 11.500 9.500 13C6.500 14.800 2.500 13 1.500 10C1 8.500 1.500 7.500 2 6Z" fill="#c8c8c8" stroke="#a2a2a2" stroke-width="1"/><rect x="13.300" y="14" width="10.700" height="10.600" fill="#b9b9b9"/><path d="M13.300 24.600V20l4.700 4.600Z" fill="#dcdcdc"/><path d="M24 24.600V20l-4.700 4.600Z" fill="#dcdcdc"/><path d="M14.500 17.500h5v-2.300l4 3.800-4 3.800v-2.300h-5Z" fill="#f4f4f4"/></svg>
<svg class="ic" style="left:192px;top:90px" width="24" height="26" viewBox="0 0 24 26"><path d="M3 21.500L9.900 7.100H22.400" fill="none" stroke="#9a9a9a" stroke-width=".9"/><circle cx="9.900" cy="7.100" r="2.500" fill="#d0d0d0" stroke="#9a9a9a" stroke-width=".9"/><path d="M13 23L20.500 14.500" stroke="#b0b0b0" stroke-width="2.200" stroke-linecap="round"/><path d="M14 15L22 23.500" stroke="#a4a4a4" stroke-width="2.400" stroke-linecap="round"/><path d="M12.500 12.500l4.500 1.500 1 3-3.500 1.500-3-3.500Z" fill="#b0b0b0"/><circle cx="21.500" cy="13.500" r="1.800" fill="none" stroke="#b0b0b0" stroke-width="1.200"/></svg>
<svg class="ic" style="left:227px;top:90px" width="24" height="26" viewBox="0 0 24 26"><path d="M8.500 3.800V2.200Q8.500 1.400 9.300 1.400H14.400Q15.200 1.400 15.200 2.200V3.800" fill="none" stroke="#8f8f8f" stroke-width="1.300"/><path d="M3.200 6.500Q3.200 4 5.700 4H18Q20.600 4 20.600 6.500V7.300H3.200Z" fill="#8f8f8f"/><path d="M4.200 8.800H19.600L18.700 23Q18.600 24.300 17.300 24.300H6.500Q5.200 24.300 5.100 23Z" fill="#9a9a9a"/><path d="M7.700 10.500v11M11.900 10.500v11M16.100 10.500v11" stroke="#eee" stroke-width="2.200"/></svg>
<svg class="ic" style="left:262px;top:90px" width="24" height="26" viewBox="0 0 24 26"><path d="M1 7L17 15M1 13L17 8.500" stroke="#9a9a9a" stroke-width="1.400" fill="none"/><ellipse cx="20" cy="9.500" rx="3.800" ry="2.200" transform="rotate(-28 20 9.500)" fill="none" stroke="#8a8a8a" stroke-width="1.500"/><ellipse cx="20" cy="17.500" rx="3.800" ry="2.200" transform="rotate(35 20 17.500)" fill="none" stroke="#8a8a8a" stroke-width="1.500"/><path d="M.8 6.500L9 9.500 5 10Z" fill="#b5b5b5"/></svg>
<svg class="ic" style="left:297px;top:90px" width="24" height="26" viewBox="0 0 24 26"><path d="M8.5 4.6h7.3l4 4v11h-11.3Z" fill="#f6f6f6" stroke="#b2b2b2" stroke-width=".9"/><path d="M15.8 4.6v4h4" fill="none" stroke="#b2b2b2" stroke-width=".9"/><path d="M14 11h4" stroke="#b5b5b5" stroke-width=".9"/><path d="M14 13.2h4" stroke="#b5b5b5" stroke-width=".9"/><path d="M14 15.4h4" stroke="#b5b5b5" stroke-width=".9"/><path d="M14 17.6h4" stroke="#b5b5b5" stroke-width=".9"/><path d="M3 6.5h7.3l4 4v11.3h-11.3Z" fill="#f6f6f6" stroke="#b2b2b2" stroke-width=".9"/><path d="M10.3 6.5v4h4" fill="none" stroke="#b2b2b2" stroke-width=".9"/><path d="M5 12.5h7.3" stroke="#b5b5b5" stroke-width=".9"/><path d="M5 14.7h7.3" stroke="#b5b5b5" stroke-width=".9"/><path d="M5 16.9h7.3" stroke="#b5b5b5" stroke-width=".9"/><path d="M5 19.1h7.3" stroke="#b5b5b5" stroke-width=".9"/></svg>
<svg class="ic" style="left:332px;top:90px" width="24" height="26" viewBox="0 0 24 26"><rect x="4.300" y="3.500" width="15.600" height="19.300" fill="#dedede" stroke="#b2b2b2" stroke-width="1"/><rect x="8.300" y="2.100" width="7.600" height="3.800" rx=".8" fill="#cfcfcf" stroke="#ababab" stroke-width=".9"/><path d="M6.5 6.5h7.2l4 4v10h-11.2Z" fill="#f6f6f6" stroke="#b2b2b2" stroke-width=".9"/><path d="M13.7 6.5v4h4" fill="none" stroke="#b2b2b2" stroke-width=".9"/><path d="M8.3 12h7.5" stroke="#b5b5b5" stroke-width=".9"/><path d="M8.3 14.2h7.5" stroke="#b5b5b5" stroke-width=".9"/><path d="M8.3 16.4h7.5" stroke="#b5b5b5" stroke-width=".9"/><path d="M8.3 18.6h7.5" stroke="#b5b5b5" stroke-width=".9"/></svg>
<svg class="ic" style="left:38.5px;top:113.5px" width="5" height="3" viewBox="0 0 5 3"><path d="M0 0H5L2.5 3Z" fill="#9a9a9a"/></svg>
<svg class="ic" style="left:381px;top:90px" width="25" height="26" viewBox="0 0 25 26"><path d="M15.500 2.300h5.800v21h-5.800Z" fill="#d6d6d6" stroke="#b4b4b4" stroke-width=".9"/><path d="M19 5h2.300M19.800 7.500h1.500M19 10h2.300M19.800 12.500h1.500M19 15h2.300M19.800 17.500h1.500" stroke="#aaa" stroke-width=".8"/><path d="M.8 1.800V24H23.500ZM5.300 12.500L13 19.800H5.300Z" fill="#c4c4c4" stroke="#a9a9a9" stroke-width="1" fill-rule="evenodd"/></svg>
<svg class="ic" style="left:416px;top:90px" width="25" height="26" viewBox="0 0 25 26"><path d="M3.200 10L10 3.500V7.500C16 7 20.500 9.500 20.800 14C21 17.500 17.500 19.800 13 19.500L12.500 17.500C15 17.300 16.500 16 16.200 14.200C15.800 12.500 13.500 12 10 12.300V16.300Z" fill="#c6c6c6" stroke="#aaa" stroke-width=".9"/></svg>
<svg class="ic" style="left:451px;top:90px" width="25" height="26" viewBox="0 0 25 26"><path d="M20.800 10L14 3.500V7.500C8 7 3.500 9.500 3.200 14C3 17.500 6.500 19.800 11 19.500L11.500 17.500C9 17.300 7.500 16 7.800 14.200C8.200 12.500 10.500 12 14 12.300V16.300Z" fill="#c6c6c6" stroke="#aaa" stroke-width=".9"/></svg>
<svg class="ic" style="left:486px;top:90px" width="25" height="26" viewBox="0 0 25 26"><path transform="translate(0,0)" d="M2 6C2.500 2.500 7 1.800 11 2.500C14 3 16 3.800 19 3.500C22.500 3.200 23.500 6 22.800 9.500C22.300 12.500 20 13.500 17.500 12.500C14.500 11.300 12 11.500 9.500 13C6.500 14.800 2.500 13 1.500 10C1 8.500 1.500 7.500 2 6Z" fill="#c8c8c8" stroke="#a2a2a2" stroke-width="1"/><rect x="13" y="14.300" width="11" height="10.600" fill="#b5b5b5"/><path d="M24 24.900V20l-5 4.900Z" fill="#8e8e8e"/><path d="M15.500 22.500c4 1 6.500-1 6-3.500-.5-2-3.500-2.500-5-.8" fill="none" stroke="#f2f2f2" stroke-width="1.300"/><path d="M15 17.500l2.800-.3-.6 2.600Z" fill="#f2f2f2"/></svg>
<svg class="ic" style="left:521px;top:90px" width="25" height="26" viewBox="0 0 25 26"><circle cx="7.800" cy="8.400" r="7.300" fill="#cfcfcf" stroke="#a8a8a8" stroke-width="1"/><path d="M11.500 9.800H19.500L23.500 16.800L19.500 23.800H11.500L7.500 16.800Z" fill="#c6c6c6" stroke="#a8a8a8" stroke-width="1"/><path d="M6 8C10 5.500 15 8 15.500 19M12.800 16.500l2.700 3 2.300-3.200" fill="none" stroke="#8f8f8f" stroke-width="1"/></svg>
<svg class="ic" style="left:556px;top:90px" width="25" height="26" viewBox="0 0 25 26"><path transform="translate(0,-0.5)" d="M2 6C2.500 2.500 7 1.800 11 2.500C14 3 16 3.800 19 3.500C22.500 3.200 23.500 6 22.800 9.500C22.300 12.500 20 13.500 17.500 12.500C14.500 11.300 12 11.500 9.500 13C6.500 14.800 2.500 13 1.500 10C1 8.500 1.500 7.500 2 6Z" fill="#c8c8c8" stroke="#a2a2a2" stroke-width="1"/><ellipse cx="8" cy="6.200" rx="4.300" ry="2.900" transform="rotate(-12 8 6.200)" fill="#f2f2f2" stroke="#9c9c9c" stroke-width="1"/><rect x="13" y="14.6" width="10.8" height="10.8" rx="1.8" fill="#cdcdcd" stroke="#b5b5b5" stroke-width=".6"/><path d="M18.4 16.2 v7.6 M15.094 18.1 l6.612 3.8 M15.094 21.9 l6.612 -3.8" stroke="#fff" stroke-width="1.5" fill="none"/><circle cx="18.4" cy="20" r="1" fill="#cdcdcd"/></svg>
<svg class="ic" style="left:591px;top:90px" width="25" height="26" viewBox="0 0 25 26"><path transform="translate(0,-0.5)" d="M2 6C2.500 2.500 7 1.800 11 2.500C14 3 16 3.800 19 3.500C22.500 3.200 23.500 6 22.800 9.500C22.300 12.500 20 13.500 17.500 12.500C14.500 11.300 12 11.500 9.500 13C6.500 14.800 2.500 13 1.500 10C1 8.500 1.500 7.500 2 6Z" fill="#c8c8c8" stroke="#a2a2a2" stroke-width="1"/><path transform="translate(0,0)" d="M1 22C1 18 4 14 8.500 13.500C11.500 13.500 12.500 16 11.500 19C10.500 22.500 7 24.500 3 24C1.500 23.800 1 23 1 22Z" fill="#c8c8c8" stroke="#a2a2a2" stroke-width="1"/><rect x="13" y="14.6" width="10.8" height="10.8" rx="1.8" fill="#cdcdcd" stroke="#b5b5b5" stroke-width=".6"/><path d="M18.4 16.2 v7.6 M15.094 18.1 l6.612 3.8 M15.094 21.9 l6.612 -3.8" stroke="#fff" stroke-width="1.5" fill="none"/><circle cx="18.4" cy="20" r="1" fill="#cdcdcd"/></svg>
<svg class="ic" style="left:626px;top:90px" width="25" height="26" viewBox="0 0 25 26"><path d="M1 8C.5 3.500 5 1 9.500 1.500C13 2 15 3.500 18 3C22.500 2.800 23.500 7 23 16.500H13C10 14 7 17.500 3.500 16C1 14.500 1.200 11 1 8Z" fill="#d0d0d0" stroke="#a6a6a6" stroke-width="1"/><ellipse cx="8.500" cy="8" rx="5" ry="4" transform="rotate(-10 8.500 8)" fill="#a4a4a4" stroke="#979797" stroke-width=".8"/><rect x="13" y="14.6" width="10.8" height="10.8" rx="1.8" fill="#cdcdcd" stroke="#b5b5b5" stroke-width=".6"/><path d="M18.4 16.2 v7.6 M15.094 18.1 l6.612 3.8 M15.094 21.9 l6.612 -3.8" stroke="#fff" stroke-width="1.5" fill="none"/><circle cx="18.4" cy="20" r="1" fill="#cdcdcd"/></svg>
<svg class="ic" style="left:661px;top:90px" width="25" height="26" viewBox="0 0 25 26"><path transform="translate(0,-0.8)" d="M2 6C2.500 2.500 7 1.800 11 2.500C14 3 16 3.800 19 3.500C22.500 3.200 23.500 6 22.800 9.500C22.300 12.500 20 13.500 17.500 12.500C14.500 11.300 12 11.500 9.500 13C6.500 14.800 2.500 13 1.500 10C1 8.500 1.500 7.500 2 6Z" fill="#c8c8c8" stroke="#a2a2a2" stroke-width="1"/><ellipse cx="8" cy="6" rx="4.300" ry="2.900" transform="rotate(-12 8 6)" fill="#f2f2f2" stroke="#9c9c9c" stroke-width="1"/><rect x="14" y="15.2" width="9.8" height="9.8" rx="1.2" fill="#cdcdcd" stroke="#b5b5b5" stroke-width=".6"/><path d="M16 17.2 l5.8 5.8 M21.8 17.2 l-5.8 5.8" stroke="#fff" stroke-width="1.8" fill="none"/></svg>
<svg class="ic" style="left:696px;top:90px" width="25" height="26" viewBox="0 0 25 26"><path transform="translate(0,-0.5)" d="M2 6C2.500 2.500 7 1.800 11 2.500C14 3 16 3.800 19 3.500C22.500 3.200 23.500 6 22.800 9.500C22.300 12.500 20 13.500 17.500 12.500C14.500 11.300 12 11.500 9.500 13C6.500 14.800 2.500 13 1.500 10C1 8.500 1.500 7.500 2 6Z" fill="#c8c8c8" stroke="#a2a2a2" stroke-width="1"/><path transform="translate(0,0)" d="M1 22C1 18 4 14 8.500 13.500C11.500 13.500 12.500 16 11.500 19C10.500 22.500 7 24.500 3 24C1.500 23.800 1 23 1 22Z" fill="#c8c8c8" stroke="#a2a2a2" stroke-width="1"/><rect x="14" y="15.2" width="9.8" height="9.8" rx="1.2" fill="#cdcdcd" stroke="#b5b5b5" stroke-width=".6"/><path d="M16 17.2 l5.8 5.8 M21.8 17.2 l-5.8 5.8" stroke="#fff" stroke-width="1.8" fill="none"/></svg>
<svg class="ic" style="left:731px;top:90px" width="25" height="26" viewBox="0 0 25 26"><path d="M2 6.500C4 3 8 2 12 3C15 3.800 18 3.500 20.500 3.500C23 4 23 8 21.500 11C20 13 17 13 14.500 12C11.500 11 9.500 12.500 8 15.500C7 18 5.500 20 4.200 19.500C2.500 17 1.200 10 2 6.500Z" fill="#c8c8c8" stroke="#a2a2a2" stroke-width="1"/><path d="M2.500 13.500C6 14.500 9 13 11 11.500" fill="none" stroke="#a2a2a2" stroke-width=".9"/><path d="M2.500 13.800C6 14.500 9 13.300 11 11.800L8 15.500C7 18 5.500 20 4.200 19.500C3.200 18 2.800 16 2.500 13.800Z" fill="#e2e2e2"/></svg>
<svg class="ic" style="left:766px;top:90px" width="25" height="26" viewBox="0 0 25 26"><path d="M.5 8.500C.5 3.500 5 1 11.500 1.200C17 1.500 23.500 3 23.800 9.500C24 14 22.500 18 19.500 17.800C16 17.500 14.500 15 12 15.200C9 15.500 7.500 18.500 4.500 17.500C1.500 16.500 .5 12.500 .5 8.500Z" fill="#e2e2e2" stroke="#8f8f8f" stroke-width="1"/><path d="M3.500 8.500C3.500 5.500 7 4 11.500 4.200C16 4.400 20.600 5.500 20.800 9.500C21 12.500 20 14.800 18.800 14.500C16.500 14 14.500 12 12 12.200C9 12.500 7.500 15.300 5.500 14.500C4 13.800 3.500 11 3.500 8.500Z" fill="#c4c4c4" stroke="#b0b0b0" stroke-width=".8"/></svg>
<svg class="ic" style="left:801px;top:90px" width="25" height="26" viewBox="0 0 25 26"><path d="M1 6C2 1.500 8 .8 11.500 2V12.500C8 14.500 3 13 1.500 10C.8 8.500 .8 7.500 1 6Z" fill="#c8c8c8" stroke="#a2a2a2" stroke-width="1"/><path d="M14 2.500C17 3 20 2.500 21.500 4C22.800 6 22.500 10 21 12C19 13.500 16.500 12.500 14 12Z" fill="#c8c8c8" stroke="#a2a2a2" stroke-width="1"/><path d="M15 1L10.5 18.5M11.5 3L15 18.5" stroke="#8f8f8f" stroke-width="1.300" fill="none"/><ellipse cx="9.3" cy="21.5" rx="1.700" ry="3.300" transform="rotate(20 9.3 21.5)" fill="#f0f0f0" stroke="#8a8a8a" stroke-width="1.200"/><ellipse cx="16.3" cy="21.5" rx="1.700" ry="3.300" transform="rotate(-20 16.3 21.5)" fill="#f0f0f0" stroke="#8a8a8a" stroke-width="1.200"/></svg>
<svg class="ic" style="left:836px;top:90px" width="25" height="26" viewBox="0 0 25 26"><path d="M2.500 6C3.500 1.500 9 .8 12 2V11.500C9 13.500 4.500 12.500 3 10C2.300 8.500 2.300 7.500 2.500 6Z" fill="#c8c8c8" stroke="#a2a2a2" stroke-width="1"/><path d="M14.500 2.500C17 3 19.500 2.500 21 4C22 6 22 9.500 20.500 11.500C19 12.500 16.500 12 14.500 11.500Z" fill="#c8c8c8" stroke="#a2a2a2" stroke-width="1"/><path d="M1 14.500l4-1.500 2.500 2-1 4-4 .5Z" fill="#d2d2d2" stroke="#aaa" stroke-width=".8" stroke-dasharray="1.500 1"/><path d="M17.500 14l4-1 2.500 3.500-2 3-3.500-.5Z" fill="#d2d2d2" stroke="#aaa" stroke-width=".8" stroke-dasharray="1.500 1"/><path d="M15.3 1L10.8 18.5M11.8 3L15.3 18.5" stroke="#8f8f8f" stroke-width="1.300" fill="none"/><ellipse cx="9.6" cy="21.5" rx="1.700" ry="3.300" transform="rotate(20 9.6 21.5)" fill="#f0f0f0" stroke="#8a8a8a" stroke-width="1.200"/><ellipse cx="16.6" cy="21.5" rx="1.700" ry="3.300" transform="rotate(-20 16.6 21.5)" fill="#f0f0f0" stroke="#8a8a8a" stroke-width="1.200"/></svg>
<svg class="ic" style="left:871px;top:90px" width="25" height="26" viewBox="0 0 25 26"><path d="M11.500 2C7 .5 2 1.500 .8 6C-.2 10 3 14 7 15C9 15.300 10.500 14.500 11.500 13Z" fill="#c8c8c8" stroke="#9c9c9c" stroke-width="1"/><path d="M13.500 2C18 .5 23 1.500 24 6C24.800 10 21.500 14 17.500 15C15.500 15.300 14.500 14.500 13.500 13Z" fill="#c8c8c8" stroke="#9c9c9c" stroke-width="1"/><path d="M9 3.500h7M9 6h7M9 8.500h7M9 11h7" stroke="#8f8f8f" stroke-width="1"/><path d="M12.500 1V13C11 15 9 16 11 17.500S15 19 13 20.500 11 22.500 14.500 24" fill="none" stroke="#8f8f8f" stroke-width="1"/></svg>
<svg class="ic" style="left:906px;top:90px" width="25" height="26" viewBox="0 0 25 26"><path d="M9.500 1L20.500 1L16.500 8L13.500 11.500L10 9.500L11 6.500L9 5Z" fill="#d2d2d2" stroke="#b0b0b0" stroke-width=".9"/><path d="M11.500 11l1.500 1.500" stroke="#999" stroke-width="1.200"/><path d="M2.200 19H9.500L11.800 15.500L14 19H21.200V24.300H2.200Z" fill="#c4c4c4" stroke="#a6a6a6" stroke-width="1"/><path d="M11.800 16.500l1.800 3-1.800 3-1.800-3Z" fill="#f4f4f4" stroke="#aaa" stroke-width=".6"/></svg>
<svg class="ic" style="left:941px;top:90px" width="25" height="26" viewBox="0 0 25 26"><path d="M12.500 21.500C6.500 22 2.500 18 2.500 12.500C2.500 7 7 3.200 12 3.500C16.500 3.800 19.500 7 20 10.500H23.200L18.500 16L14 10.500H17C16.500 8 14.500 6.300 12 6.300C8.500 6.300 5.500 9 5.500 12.500C5.500 16 8.500 19 12.500 19Z" fill="#c9c9c9" stroke="#a8a8a8" stroke-width=".8"/></svg>
<svg class="ic" style="left:1001px;top:90px" width="25" height="26" viewBox="0 0 25 26"><circle cx="9.600" cy="9.600" r="8.600" fill="#5e8dc9" stroke="#4a79b6" stroke-width=".6"/><ellipse cx="8.500" cy="5.500" rx="6" ry="3.500" fill="#fff" opacity=".15"/><text x="9.300" y="15.200" font-size="16" font-style="italic" font-weight="bold" text-anchor="middle" fill="#fff" font-family="Liberation Serif">i</text><path transform="translate(12.300,10.800) rotate(-16)" d="M0 0L0 13L3 10.300L5.600 15.500L8 14.400L5.500 9.400L9.700 9.200Z" fill="#fff" stroke="#333" stroke-width="1"/></svg>
<svg class="ic" style="left:1036px;top:90px" width="25" height="26" viewBox="0 0 25 26"><path d="M11.200 1l1.700 2.300 2.700-.9.600 2.800 2.800.6-.9 2.700 2.300 1.700-2.300 1.700.9 2.700-2.800.6-.6 2.800-2.700-.9-1.700 2.300-1.700-2.300-2.700.9-.6-2.800-2.800-.6.900-2.700L.9 11.200l2.300-1.700-.9-2.700 2.800-.6.600-2.800 2.700.9Z" fill="#ececec" stroke="#a4a4a4" stroke-width=".9" stroke-dasharray="1.800 1"/><circle cx="11.200" cy="11.200" r="5.600" fill="#b5b5b5" stroke="#999" stroke-width=".8"/><path d="M9.300 8.200l5 3-5 3Z" fill="#f6f6f6"/><path transform="translate(14.800,12.500) rotate(-16)" d="M0 0L0 11L2.600 8.700L4.800 13.200L6.800 12.200L4.700 8L8.200 7.800Z" fill="#fafafa" stroke="#b0b0b0" stroke-width="1"/></svg>
<svg class="ic" style="left:1084px;top:90px" width="25" height="26" viewBox="0 0 25 26"><rect x=".9" y="2" width="22.600" height="19.300" fill="#dedede" stroke="#222" stroke-width="1.300" stroke-dasharray="2.600 1.300"/><rect x="1.800" y="2.900" width="14.800" height="14.300" fill="#fbe04f" stroke="#d4b93c" stroke-width=".6"/><path transform="translate(10.800,10) rotate(-16)" d="M0 0L0 13.500L3.100 10.700L5.800 16L8.300 14.900L5.700 9.800L10 9.600Z" fill="#fff" stroke="#222" stroke-width="1.100"/></svg>
<svg class="ic" style="left:1132px;top:90px" width="25" height="26" viewBox="0 0 25 26"><rect x="2" y="4.300" width="14.600" height="14" fill="#fbe04f" stroke="#b79d2c" stroke-width=".9" stroke-dasharray="1.500 1"/><rect x="12.300" y="14.200" width="10.500" height="10.300" rx="1.800" fill="#dc1e24" stroke="#b9151b" stroke-width=".6"/><circle cx="17.550" cy="19.350" r="3.100" fill="none" stroke="#fff" stroke-width="1.300"/><path d="M15.500 21.500l4.100-4.300" stroke="#fff" stroke-width="1.300"/></svg>
<svg class="ic" style="left:1167px;top:90px" width="25" height="26" viewBox="0 0 25 26"><text x="1" y="17.500" font-size="27" font-weight="bold" fill="#6d3b7c" font-family="Liberation Serif">ε</text><rect x="10.500" y="12.300" width="12.300" height="12" fill="#fbe04f" stroke="#b79d2c" stroke-width=".9" stroke-dasharray="1.500 1"/></svg>
<svg class="ic" style="left:1202px;top:90px" width="25" height="26" viewBox="0 0 25 26"><rect x="1.300" y="3.300" width="19.200" height="19.200" fill="#fff" stroke="#3c6186" stroke-width="1.100"/><rect x="1.800" y="3.800" width="18.200" height="4.200" fill="#cfe3f5"/><path d="M3 6h3.800M8.500 6h9.500" stroke="#2f5a84" stroke-width="1.800"/><path d="M1.300 8.300h19.200" stroke="#3c6186" stroke-width=".8"/><path d="M3 10.800h3.800M8.500 10.800h9.500M3 13.800h3.800M8.500 13.800h9.500M3 16.800h3.800M8.500 16.800h9.500M3 19.800h3.800M8.500 19.800h9.500" stroke="#3c6186" stroke-width="1.200"/></svg>
<svg class="ic" style="left:1237px;top:90px" width="25" height="26" viewBox="0 0 25 26"><path d="M.8 1.500V23M22 1.500V23" stroke="#555" stroke-width="1.100"/><path d="M-.3 23.700h23.300" stroke="#777" stroke-width="1.800"/><path d="M.8 4.500H22M.8 11.200H22M.8 18H22" stroke="#555" stroke-width="1"/><g stroke-width="1.100"><circle cx="10.500" cy="4.500" r="2.300" fill="#f7d4d4" stroke="#cc2020"/><circle cx="16.500" cy="4.500" r="2.300" fill="#f7d4d4" stroke="#cc2020"/><circle cx="5.500" cy="11.200" r="2.300" fill="#d2ecd0" stroke="#4da24a"/><circle cx="11.500" cy="11.200" r="2.300" fill="#d2ecd0" stroke="#4da24a"/><circle cx="5.500" cy="18" r="2.300" fill="#cfe0f3" stroke="#4d82bd"/><circle cx="16.500" cy="18" r="2.300" fill="#cfe0f3" stroke="#4d82bd"/></g></svg>
<svg class="ic" style="left:1272px;top:90px" width="25" height="26" viewBox="0 0 25 26"><path d="M2.500 8.500H19.500M2.500 6v5M19.500 6v5" stroke="#2f5577" stroke-width="1.400" fill="none"/><rect x=".3" y="13.500" width="21.400" height="7" fill="#d4d8cc" stroke="#808080" stroke-width="1"/><path d="M3 13.500v3M5.500 13.500v2M8 13.500v2M10.500 13.500v3.800M13 13.500v2M15.500 13.500v2M18 13.500v3" stroke="#666" stroke-width=".9"/></svg>
<svg class="ic" style="left:1319px;top:90px" width="25" height="26" viewBox="0 0 25 26"><path d="M4 3.300H18Q21 3.300 21 6.300V12.500Q21 15.500 18 15.500H12.500L7 21L8.500 15.500H4Q1 15.500 1 12.500V6.300Q1 3.300 4 3.300Z" fill="#fbe68a" stroke="#c9a722" stroke-width="1.200"/><path d="M3 8V6.500Q3 5 4.500 5H17" stroke="#fff7cf" stroke-width="1.200" fill="none"/></svg>
<svg class="ic" style="left:1354px;top:90px" width="25" height="26" viewBox="0 0 25 26"><rect x="2.300" y="6" width="16.800" height="11.700" fill="none" stroke="#555" stroke-width="1" stroke-dasharray="1.200 1.300"/><path d="M11.200 8.500V5.300H13V3.200H16.800V8.500Z" fill="#f3d43a" stroke="#c4a51c" stroke-width=".7"/><rect x="12.2" y="14" width="10.8" height="10.8" rx="1.8" fill="#c9a516" stroke="#b08f10" stroke-width=".6"/><path d="M17.6 15.6 v7.6 M14.294 17.5 l6.612 3.8 M14.294 21.3 l6.612 -3.8" stroke="#fff" stroke-width="1.5" fill="none"/><circle cx="17.6" cy="19.4" r="1" fill="#c9a516"/></svg>
<svg class="ic" style="left:1389px;top:90px" width="25" height="26" viewBox="0 0 25 26"><rect x="2.300" y="6" width="16.800" height="11.700" fill="none" stroke="#555" stroke-width="1" stroke-dasharray="1.200 1.300"/><path d="M11.200 8.500V5.300H13V3.200H16.800V8.500Z" fill="#f3d43a" stroke="#c4a51c" stroke-width=".7"/></svg>
<svg class="ic" style="left:1424px;top:90px" width="25" height="26" viewBox="0 0 25 26"><path d="M4.800 3H23V19.500H8L0 23.800L4.800 17Z" fill="#d5dfe6" stroke="#a9b3ba" stroke-width="1"/><text x="13.800" y="15.800" font-size="12.500" text-anchor="middle" fill="#555" font-family="Liberation Serif">T</text></svg>
<svg class="ic" style="left:1066.5px;top:100px" width="9" height="5" viewBox="0 0 9 5"><path d="M0 0H9L4.5 5Z" fill="#a8a8a8"/></svg>
<svg class="ic" style="left:1114px;top:100px" width="9" height="5" viewBox="0 0 9 5"><path d="M0 0H9L4.5 5Z" fill="#000"/></svg>
<svg class="ic" style="left:1301px;top:100px" width="9" height="5" viewBox="0 0 9 5"><path d="M0 0H9L4.5 5Z" fill="#000"/></svg>
<svg class="ic" style="left:1452.5px;top:100px" width="9" height="5" viewBox="0 0 9 5"><path d="M0 0H9L4.5 5Z" fill="#000"/></svg>
<div style="left:396px;top:123px;width:1284px;height:867px;background:#fff;border-left:2px solid #bababa;border-top:2px solid #bababa;border-right:1px solid #b8b8b8;border-bottom:1px solid #b8b8b8;border-radius:3px"></div>
<svg class="ic" style="left:2px;top:129px" width="160" height="6" viewBox="0 0 160 6"><path d="M0 0h1.500v1.500h-1.500zM6 0h1.500v1.500h-1.500zM12 0h1.500v1.500h-1.500zM18 0h1.500v1.500h-1.500zM24 0h1.500v1.500h-1.500zM30 0h1.500v1.500h-1.500zM36 0h1.500v1.500h-1.500zM42 0h1.500v1.500h-1.500zM48 0h1.500v1.500h-1.500zM54 0h1.500v1.500h-1.500zM60 0h1.500v1.500h-1.500zM66 0h1.500v1.500h-1.500zM72 0h1.500v1.500h-1.500zM78 0h1.500v1.500h-1.500zM84 0h1.500v1.500h-1.500zM90 0h1.500v1.500h-1.500zM96 0h1.500v1.500h-1.500zM102 0h1.500v1.500h-1.500zM108 0h1.500v1.500h-1.500zM114 0h1.500v1.500h-1.500zM120 0h1.500v1.500h-1.500zM126 0h1.500v1.500h-1.500zM132 0h1.500v1.500h-1.500zM138 0h1.500v1.500h-1.500zM144 0h1.500v1.500h-1.500zM150 0h1.500v1.500h-1.500zM156 0h1.500v1.500h-1.500zM3 3h1.500v1.500h-1.500zM9 3h1.500v1.500h-1.500zM15 3h1.500v1.500h-1.500zM21 3h1.500v1.500h-1.500zM27 3h1.500v1.500h-1.500zM33 3h1.500v1.500h-1.500zM39 3h1.500v1.500h-1.500zM45 3h1.500v1.500h-1.500zM51 3h1.500v1.500h-1.500zM57 3h1.500v1.500h-1.500zM63 3h1.500v1.500h-1.500zM69 3h1.500v1.500h-1.500zM75 3h1.500v1.500h-1.500zM81 3h1.500v1.500h-1.500zM87 3h1.500v1.500h-1.500zM93 3h1.500v1.500h-1.500zM99 3h1.500v1.500h-1.500zM105 3h1.500v1.500h-1.500zM111 3h1.500v1.500h-1.500zM117 3h1.500v1.500h-1.500zM123 3h1.500v1.500h-1.500zM129 3h1.500v1.500h-1.500zM135 3h1.500v1.500h-1.500zM141 3h1.500v1.500h-1.500zM147 3h1.500v1.500h-1.500zM153 3h1.500v1.500h-1.500z" fill="#b9b9b9"/><path d="M1 1h1.500v1.500h-1.500zM7 1h1.500v1.500h-1.500zM13 1h1.500v1.500h-1.500zM19 1h1.500v1.500h-1.500zM25 1h1.500v1.500h-1.500zM31 1h1.500v1.500h-1.500zM37 1h1.500v1.500h-1.500zM43 1h1.500v1.500h-1.500zM49 1h1.500v1.500h-1.500zM55 1h1.500v1.500h-1.500zM61 1h1.500v1.500h-1.500zM67 1h1.500v1.500h-1.500zM73 1h1.500v1.500h-1.500zM79 1h1.500v1.500h-1.500zM85 1h1.500v1.500h-1.500zM91 1h1.500v1.500h-1.500zM97 1h1.500v1.500h-1.500zM103 1h1.500v1.500h-1.500zM109 1h1.500v1.500h-1.500zM115 1h1.500v1.500h-1.500zM121 1h1.500v1.500h-1.500zM127 1h1.500v1.500h-1.500zM133 1h1.500v1.500h-1.500zM139 1h1.500v1.500h-1.500zM145 1h1.500v1.500h-1.500zM151 1h1.500v1.500h-1.500zM157 1h1.500v1.500h-1.500zM4 4h1.500v1.500h-1.500zM10 4h1.500v1.500h-1.500zM16 4h1.500v1.500h-1.500zM22 4h1.500v1.500h-1.500zM28 4h1.500v1.500h-1.500zM34 4h1.500v1.500h-1.500zM40 4h1.500v1.500h-1.500zM46 4h1.500v1.500h-1.500zM52 4h1.500v1.500h-1.500zM58 4h1.500v1.500h-1.500zM64 4h1.500v1.500h-1.500zM70 4h1.500v1.500h-1.500zM76 4h1.500v1.500h-1.500zM82 4h1.500v1.500h-1.500zM88 4h1.500v1.500h-1.500zM94 4h1.500v1.500h-1.500zM100 4h1.500v1.500h-1.500zM106 4h1.500v1.500h-1.500zM112 4h1.500v1.500h-1.500zM118 4h1.500v1.500h-1.500zM124 4h1.500v1.500h-1.500zM130 4h1.500v1.500h-1.500zM136 4h1.500v1.500h-1.500zM142 4h1.500v1.500h-1.500zM148 4h1.500v1.500h-1.500zM154 4h1.500v1.500h-1.500z" fill="#fff"/></svg>
<svg class="ic" style="left:197px;top:129px" width="160" height="6" viewBox="0 0 160 6"><path d="M0 0h1.500v1.500h-1.500zM6 0h1.500v1.500h-1.500zM12 0h1.500v1.500h-1.500zM18 0h1.500v1.500h-1.500zM24 0h1.500v1.500h-1.500zM30 0h1.500v1.500h-1.500zM36 0h1.500v1.500h-1.500zM42 0h1.500v1.500h-1.500zM48 0h1.500v1.500h-1.500zM54 0h1.500v1.500h-1.500zM60 0h1.500v1.500h-1.500zM66 0h1.500v1.500h-1.500zM72 0h1.500v1.500h-1.500zM78 0h1.500v1.500h-1.500zM84 0h1.500v1.500h-1.500zM90 0h1.500v1.500h-1.500zM96 0h1.500v1.500h-1.500zM102 0h1.500v1.500h-1.500zM108 0h1.500v1.500h-1.500zM114 0h1.500v1.500h-1.500zM120 0h1.500v1.500h-1.500zM126 0h1.500v1.500h-1.500zM132 0h1.500v1.500h-1.500zM138 0h1.500v1.500h-1.500zM144 0h1.500v1.500h-1.500zM150 0h1.500v1.500h-1.500zM156 0h1.500v1.500h-1.500zM3 3h1.500v1.500h-1.500zM9 3h1.500v1.500h-1.500zM15 3h1.500v1.500h-1.500zM21 3h1.500v1.500h-1.500zM27 3h1.500v1.500h-1.500zM33 3h1.500v1.500h-1.500zM39 3h1.500v1.500h-1.500zM45 3h1.500v1.500h-1.500zM51 3h1.500v1.500h-1.500zM57 3h1.500v1.500h-1.500zM63 3h1.500v1.500h-1.500zM69 3h1.500v1.500h-1.500zM75 3h1.500v1.500h-1.500zM81 3h1.500v1.500h-1.500zM87 3h1.500v1.500h-1.500zM93 3h1.500v1.500h-1.500zM99 3h1.500v1.500h-1.500zM105 3h1.500v1.500h-1.500zM111 3h1.500v1.500h-1.500zM117 3h1.500v1.500h-1.500zM123 3h1.500v1.500h-1.500zM129 3h1.500v1.500h-1.500zM135 3h1.500v1.500h-1.500zM141 3h1.500v1.500h-1.500zM147 3h1.500v1.500h-1.500zM153 3h1.500v1.500h-1.500z" fill="#b9b9b9"/><path d="M1 1h1.500v1.500h-1.500zM7 1h1.500v1.500h-1.500zM13 1h1.500v1.500h-1.500zM19 1h1.500v1.500h-1.500zM25 1h1.500v1.500h-1.500zM31 1h1.500v1.500h-1.500zM37 1h1.500v1.500h-1.500zM43 1h1.500v1.500h-1.500zM49 1h1.500v1.500h-1.500zM55 1h1.500v1.500h-1.500zM61 1h1.500v1.500h-1.500zM67 1h1.500v1.500h-1.500zM73 1h1.500v1.500h-1.500zM79 1h1.500v1.500h-1.500zM85 1h1.500v1.500h-1.500zM91 1h1.500v1.500h-1.500zM97 1h1.500v1.500h-1.500zM103 1h1.500v1.500h-1.500zM109 1h1.500v1.500h-1.500zM115 1h1.500v1.500h-1.500zM121 1h1.500v1.500h-1.500zM127 1h1.500v1.500h-1.500zM133 1h1.500v1.500h-1.500zM139 1h1.500v1.500h-1.500zM145 1h1.500v1.500h-1.500zM151 1h1.500v1.500h-1.500zM157 1h1.500v1.500h-1.500zM4 4h1.500v1.500h-1.500zM10 4h1.500v1.500h-1.500zM16 4h1.500v1.500h-1.500zM22 4h1.500v1.500h-1.500zM28 4h1.500v1.500h-1.500zM34 4h1.500v1.500h-1.500zM40 4h1.500v1.500h-1.500zM46 4h1.500v1.500h-1.500zM52 4h1.500v1.500h-1.500zM58 4h1.500v1.500h-1.500zM64 4h1.500v1.500h-1.500zM70 4h1.500v1.500h-1.500zM76 4h1.500v1.500h-1.500zM82 4h1.500v1.500h-1.500zM88 4h1.500v1.500h-1.500zM94 4h1.500v1.500h-1.500zM100 4h1.500v1.500h-1.500zM106 4h1.500v1.500h-1.500zM112 4h1.500v1.500h-1.500zM118 4h1.500v1.500h-1.500zM124 4h1.500v1.500h-1.500zM130 4h1.500v1.500h-1.500zM136 4h1.500v1.500h-1.500zM142 4h1.500v1.500h-1.500zM148 4h1.500v1.500h-1.500zM154 4h1.500v1.500h-1.500z" fill="#fff"/></svg>
<span class="t" style="left:169px;top:124.34px;;font-size:10px;letter-spacing:-0.582px">Слои</span>
<div style="left:360px;top:125px;width:14px;height:14px;border:1px solid #8d8d8d;border-radius:3px;background:linear-gradient(#fafafa,#e6e6e6)"><svg class="ic" style="left:0;top:0" width="12" height="12" viewBox="0 0 12 12"><path d="M4.500 2.200h5v4.500h-5z" fill="#fff" stroke="#000" stroke-width="1.200"/><path d="M4.500 2.700h5" stroke="#000" stroke-width="1.800"/><path d="M2.300 4.800h5v4.700h-5z" fill="#fff" stroke="#000" stroke-width="1.200"/><path d="M2.300 5.300h5" stroke="#000" stroke-width="1.800"/></svg></div><div style="left:375px;top:125px;width:14px;height:14px;border:1px solid #8d8d8d;border-radius:3px;background:linear-gradient(#fafafa,#e6e6e6)"><svg class="ic" style="left:0;top:0" width="12" height="12" viewBox="0 0 12 12"><path d="M2.500 2.500l7 7M9.500 2.500l-7 7" stroke="#000" stroke-width="1.500"/></svg></div>
<svg class="ic" style="left:0;top:140px" width="200" height="30" viewBox="0 140 200 30"><path d="M13.500 151.500H10.500V162.500H19.500V160" fill="none" stroke="#8a8a8a" stroke-width="1.100"/><rect x="13.500" y="149" width="10" height="11" fill="#f2f2f2" stroke="#7e7e7e" stroke-width="1.100"/><path d="M17 156.500V150Q17 147.300 19 147.300Q21 147.300 21 150V155" fill="none" stroke="#2f6fc0" stroke-width="1.300"/><path d="M43 153.500Q50 146.500 57.500 153.500Q50 160 43 153.500Z" fill="#e8eef6" stroke="#a9b1bd" stroke-width="1"/><path d="M44 150.500Q50 146 56 150" fill="none" stroke="#b9bfc8" stroke-width=".8"/><circle cx="50.200" cy="153.500" r="2.900" fill="#5f8ccc"/><circle cx="50.200" cy="153.500" r="1.300" fill="#1d3557"/><path d="M55 161h5l-2.500 3Z" fill="#000"/><path d="M75 148h14.500v1.500l-5.800 6.500v5.500l-3 -1.500v-4L75 149.500Z" fill="#3fae55" stroke="#2b8a3c" stroke-width=".9"/><ellipse cx="82.200" cy="148.600" rx="6.800" ry="1.200" fill="#7fd08d"/><rect x="106.500" y="148.500" width="15" height="13" fill="#fff" stroke="#2f74d8" stroke-width="1.100"/><path d="M106 149h16" stroke="#2f74d8" stroke-width="2"/><path d="M109.500 151.500v7M109.500 153h2.500M109.500 158h2.500" stroke="#9a9a9a" stroke-width=".9" fill="none"/><rect x="112" y="151.500" width="3" height="3" fill="#f5a028"/><rect x="112" y="156.500" width="3" height="3" fill="#f5a028"/><path d="M117 151h2.400v4.500h2L118.200 160.500L115 155.500h2Z" fill="#f01414"/><rect x="138.500" y="148.500" width="15" height="13" fill="#fff" stroke="#2f74d8" stroke-width="1.100"/><path d="M138 149h16" stroke="#2f74d8" stroke-width="2"/><path d="M141.500 151.500v7M141.500 153h2.500M141.500 158h2.500" stroke="#9a9a9a" stroke-width=".9" fill="none"/><rect x="144" y="151.500" width="3" height="3" fill="#f5a028"/><rect x="144" y="156.500" width="3" height="3" fill="#f5a028"/><path d="M149 160.500h2.400v-4.500h2L150.200 150.800L147 156h2Z" fill="#f01414"/><rect x="170.500" y="148.500" width="12.500" height="12.500" rx="1" fill="#f6f6f6" stroke="#9a9a9a"/><rect x="180" y="157.500" width="5.500" height="5" rx="1" fill="#e8474f" stroke="#c82a32" stroke-width=".6"/><path d="M181.200 160h3.200" stroke="#fff" stroke-width="1.200"/></svg>
<div style="left:1px;top:175px;width:389px;height:729px;background:#fff;border:1px solid #b5b5b5;border-radius:3px"></div>
<div style="left:2px;top:176px;width:387px;height:16px;background:#f0f0f0"></div>
<div style="left:12px;top:177px;width:1px;height:8px;background-image:linear-gradient(#9a9a9a 50%,transparent 50%);background-size:1px 2px"></div>
<div style="left:12px;top:184px;width:11px;height:1px;background-image:linear-gradient(90deg,#9a9a9a 50%,transparent 50%);background-size:2px 1px"></div>
<div style="left:25px;top:178px;width:13px;height:13px;background:#fff;border:1px solid #8f8f8f"><svg class="ic" style="left:0;top:0" width="11" height="11" viewBox="0 0 11 11"><path d="M2 2l7 7M9 2l-7 7" stroke="#000" stroke-width="2.700"/></svg></div>
<div style="left:44px;top:184.5px;width:16px;height:1px;background:#8c7fd6"></div>
<span class="t" style="left:66px;top:176.82px;font-weight:bold;text-decoration:underline;font-size:11.5px;letter-spacing:0.439px">cad_parcel_4_4_9_20160816</span>
<svg class="ic" style="left:130px;top:906px" width="126" height="6" viewBox="0 0 126 6"><path d="M0 0h1.500v1.500h-1.500zM6 0h1.500v1.500h-1.500zM12 0h1.500v1.500h-1.500zM18 0h1.500v1.500h-1.500zM24 0h1.500v1.500h-1.500zM30 0h1.500v1.500h-1.500zM36 0h1.500v1.500h-1.500zM42 0h1.500v1.500h-1.500zM48 0h1.500v1.500h-1.500zM54 0h1.500v1.500h-1.500zM60 0h1.500v1.500h-1.500zM66 0h1.500v1.500h-1.500zM72 0h1.500v1.500h-1.500zM78 0h1.500v1.500h-1.500zM84 0h1.500v1.500h-1.500zM90 0h1.500v1.500h-1.500zM96 0h1.500v1.500h-1.500zM102 0h1.500v1.500h-1.500zM108 0h1.500v1.500h-1.500zM114 0h1.500v1.500h-1.500zM120 0h1.500v1.500h-1.500zM3 3h1.500v1.500h-1.500zM9 3h1.500v1.500h-1.500zM15 3h1.500v1.500h-1.500zM21 3h1.500v1.500h-1.500zM27 3h1.500v1.500h-1.500zM33 3h1.500v1.500h-1.500zM39 3h1.500v1.500h-1.500zM45 3h1.500v1.500h-1.500zM51 3h1.500v1.500h-1.500zM57 3h1.500v1.500h-1.500zM63 3h1.500v1.500h-1.500zM69 3h1.500v1.500h-1.500zM75 3h1.500v1.500h-1.500zM81 3h1.500v1.500h-1.500zM87 3h1.500v1.500h-1.500zM93 3h1.500v1.500h-1.500zM99 3h1.500v1.500h-1.500zM105 3h1.500v1.500h-1.500zM111 3h1.500v1.500h-1.500zM117 3h1.500v1.500h-1.500zM123 3h1.500v1.500h-1.500z" fill="#b9b9b9"/><path d="M1 1h1.500v1.500h-1.500zM7 1h1.500v1.500h-1.500zM13 1h1.500v1.500h-1.500zM19 1h1.500v1.500h-1.500zM25 1h1.500v1.500h-1.500zM31 1h1.500v1.500h-1.500zM37 1h1.500v1.500h-1.500zM43 1h1.500v1.500h-1.500zM49 1h1.500v1.500h-1.500zM55 1h1.500v1.500h-1.500zM61 1h1.500v1.500h-1.500zM67 1h1.500v1.500h-1.500zM73 1h1.500v1.500h-1.500zM79 1h1.500v1.500h-1.500zM85 1h1.500v1.500h-1.500zM91 1h1.500v1.500h-1.500zM97 1h1.500v1.500h-1.500zM103 1h1.500v1.500h-1.500zM109 1h1.500v1.500h-1.500zM115 1h1.500v1.500h-1.500zM121 1h1.500v1.500h-1.500zM4 4h1.500v1.500h-1.500zM10 4h1.500v1.500h-1.500zM16 4h1.500v1.500h-1.500zM22 4h1.500v1.500h-1.500zM28 4h1.500v1.500h-1.500zM34 4h1.500v1.500h-1.500zM40 4h1.500v1.500h-1.500zM46 4h1.500v1.500h-1.500zM52 4h1.500v1.500h-1.500zM58 4h1.500v1.500h-1.500zM64 4h1.500v1.500h-1.500zM70 4h1.500v1.500h-1.500zM76 4h1.500v1.500h-1.500zM82 4h1.500v1.500h-1.500zM88 4h1.500v1.500h-1.500zM94 4h1.500v1.500h-1.500zM100 4h1.500v1.500h-1.500zM106 4h1.500v1.500h-1.500zM112 4h1.500v1.500h-1.500zM118 4h1.500v1.500h-1.500zM124 4h1.500v1.500h-1.500z" fill="#fff"/></svg>
<svg class="ic" style="left:2px;top:916px" width="72" height="6" viewBox="0 0 72 6"><path d="M0 0h1.500v1.500h-1.500zM6 0h1.500v1.500h-1.500zM12 0h1.500v1.500h-1.500zM18 0h1.500v1.500h-1.500zM24 0h1.500v1.500h-1.500zM30 0h1.500v1.500h-1.500zM36 0h1.500v1.500h-1.500zM42 0h1.500v1.500h-1.500zM48 0h1.500v1.500h-1.500zM54 0h1.500v1.500h-1.500zM60 0h1.500v1.500h-1.500zM66 0h1.500v1.500h-1.500zM3 3h1.500v1.500h-1.500zM9 3h1.500v1.500h-1.500zM15 3h1.500v1.500h-1.500zM21 3h1.500v1.500h-1.500zM27 3h1.500v1.500h-1.500zM33 3h1.500v1.500h-1.500zM39 3h1.500v1.500h-1.500zM45 3h1.500v1.500h-1.500zM51 3h1.500v1.500h-1.500zM57 3h1.500v1.500h-1.500zM63 3h1.500v1.500h-1.500zM69 3h1.500v1.500h-1.500z" fill="#b9b9b9"/><path d="M1 1h1.500v1.500h-1.500zM7 1h1.500v1.500h-1.500zM13 1h1.500v1.500h-1.500zM19 1h1.500v1.500h-1.500zM25 1h1.500v1.500h-1.500zM31 1h1.500v1.500h-1.500zM37 1h1.500v1.500h-1.500zM43 1h1.500v1.500h-1.500zM49 1h1.500v1.500h-1.500zM55 1h1.500v1.500h-1.500zM61 1h1.500v1.500h-1.500zM67 1h1.500v1.500h-1.500zM4 4h1.500v1.500h-1.500zM10 4h1.500v1.500h-1.500zM16 4h1.500v1.500h-1.500zM22 4h1.500v1.500h-1.500zM28 4h1.500v1.500h-1.500zM34 4h1.500v1.500h-1.500zM40 4h1.500v1.500h-1.500zM46 4h1.500v1.500h-1.500zM52 4h1.500v1.500h-1.500zM58 4h1.500v1.500h-1.500zM64 4h1.500v1.500h-1.500zM70 4h1.500v1.500h-1.500z" fill="#fff"/></svg>
<svg class="ic" style="left:282px;top:916px" width="75" height="6" viewBox="0 0 75 6"><path d="M0 0h1.500v1.500h-1.500zM6 0h1.500v1.500h-1.500zM12 0h1.500v1.500h-1.500zM18 0h1.500v1.500h-1.500zM24 0h1.500v1.500h-1.500zM30 0h1.500v1.500h-1.500zM36 0h1.500v1.500h-1.500zM42 0h1.500v1.500h-1.500zM48 0h1.500v1.500h-1.500zM54 0h1.500v1.500h-1.500zM60 0h1.500v1.500h-1.500zM66 0h1.500v1.500h-1.500zM72 0h1.500v1.500h-1.500zM3 3h1.500v1.500h-1.500zM9 3h1.500v1.500h-1.500zM15 3h1.500v1.500h-1.500zM21 3h1.500v1.500h-1.500zM27 3h1.500v1.500h-1.500zM33 3h1.500v1.500h-1.500zM39 3h1.500v1.500h-1.500zM45 3h1.500v1.500h-1.500zM51 3h1.500v1.500h-1.500zM57 3h1.500v1.500h-1.500zM63 3h1.500v1.500h-1.500zM69 3h1.500v1.500h-1.500z" fill="#b9b9b9"/><path d="M1 1h1.500v1.500h-1.500zM7 1h1.500v1.500h-1.500zM13 1h1.500v1.500h-1.500zM19 1h1.500v1.500h-1.500zM25 1h1.500v1.500h-1.500zM31 1h1.500v1.500h-1.500zM37 1h1.500v1.500h-1.500zM43 1h1.500v1.500h-1.500zM49 1h1.500v1.500h-1.500zM55 1h1.500v1.500h-1.500zM61 1h1.500v1.500h-1.500zM67 1h1.500v1.500h-1.500zM73 1h1.500v1.500h-1.500zM4 4h1.500v1.500h-1.500zM10 4h1.500v1.500h-1.500zM16 4h1.500v1.500h-1.500zM22 4h1.500v1.500h-1.500zM28 4h1.500v1.500h-1.500zM34 4h1.500v1.500h-1.500zM40 4h1.500v1.500h-1.500zM46 4h1.500v1.500h-1.500zM52 4h1.500v1.500h-1.500zM58 4h1.500v1.500h-1.500zM64 4h1.500v1.500h-1.500zM70 4h1.500v1.500h-1.500z" fill="#fff"/></svg>
<span class="t" style="left:97px;top:911.53px;;font-size:10px;letter-spacing:-0.286px">Дополнительные функции оцифровки</span>
<div style="left:360px;top:912px;width:14px;height:14px;border:1px solid #8d8d8d;border-radius:3px;background:linear-gradient(#fafafa,#e6e6e6)"><svg class="ic" style="left:0;top:0" width="12" height="12" viewBox="0 0 12 12"><path d="M4.500 2.200h5v4.500h-5z" fill="#fff" stroke="#000" stroke-width="1.200"/><path d="M4.500 2.700h5" stroke="#000" stroke-width="1.800"/><path d="M2.300 4.800h5v4.700h-5z" fill="#fff" stroke="#000" stroke-width="1.200"/><path d="M2.300 5.300h5" stroke="#000" stroke-width="1.800"/></svg></div><div style="left:375px;top:912px;width:14px;height:14px;border:1px solid #8d8d8d;border-radius:3px;background:linear-gradient(#fafafa,#e6e6e6)"><svg class="ic" style="left:0;top:0" width="12" height="12" viewBox="0 0 12 12"><path d="M2.500 2.500l7 7M9.500 2.500l-7 7" stroke="#000" stroke-width="1.500"/></svg></div>
<span class="t" style="left:72px;top:938.19px;;letter-spacing:-0.036px">CAD tools are not enabled for the current map tool</span>
<svg class="mapsvg" width="1680" height="1050" viewBox="0 0 1680 1050" style="position:absolute;left:0;top:0"><defs><clipPath id="mc"><rect x="398" y="125" width="1281" height="864"/></clipPath></defs><g clip-path="url(#mc)" fill="none" stroke="#b96ccd" stroke-width="1"><path d="M498.1 124.6 L508.2 128.5 L506.3 133.7 L490.5 136.8 L521.0 142.9 L528.6 138.9 L552.4 150.5 L591.1 139.8 L609.4 137.7 L635.3 124.6 M575.8 125.5 L603.3 132.2 L609.4 125.5 M591.1 139.8 L623.1 138.9 L630.7 165.7 L627.6 182.5 L611.8 192.5 L571.3 173.3 L566.1 168.8 L581.9 165.7 L617.0 170.3 L620.0 165.7 L617.0 159.0 L577.3 155.1 L583.4 144.4 L591.1 139.8 M636.2 202.3 L658.1 179.4 L669.4 184.6 L706.0 222.7 L725.8 214.5 M636.2 202.3 L670.3 238.9 L671.2 245.6 L675.8 248.0 L687.1 245.0 L689.5 252.6 L705.4 245.6 M537.7 308.4 L670.3 238.9 M537.7 308.4 L556.0 311.4 L559.7 313.5 L554.5 324.2 L530.1 331.2 L514.9 329.4 L511.8 345.5 L512.7 356.2 L521.0 359.3 L525.5 353.2 L533.2 350.1 L534.7 344.0 L527.7 339.4 L530.1 337.0 L553.0 334.9 L565.2 337.9 L573.7 344.9 L574.3 354.7 L580.4 370.5 L572.2 371.5 L572.2 379.1 L563.6 376.9 L554.5 376.0 L530.1 381.5 L522.5 386.7 L517.9 391.9 L519.4 396.7 L533.2 391.9 L537.7 388.8 L545.3 389.7 L551.4 384.3 L556.0 386.1 L562.1 391.3 L581.9 397.4 L585.0 400.4 L586.5 391.3 L591.1 389.7 L598.7 393.4 L600.8 398.9 L597.2 403.5 L588.0 405.0 L591.1 412.0 L586.5 417.2 L591.1 418.7 L598.7 412.6 M443.2 384.6 L455.4 366.9 L469.1 363.8 L496.6 348.6 L499.6 349.2 L498.1 355.3 L484.4 363.8 L472.2 368.4 L444.8 384.6 M443.2 388.2 L447.8 387.6 L469.1 396.7 L467.6 399.8 L450.9 398.0 L444.8 395.8 L443.2 388.2 M398.3 418.3 L409.7 412.6 L417.7 408.7 L424.6 408.7 L425.7 418.3 L423.0 429.7 L408.6 432.0 L398.3 433.8 M408.6 432.0 L442.9 428.1 L444.0 433.8 L447.5 433.8 L432.6 450.8 L418.9 444.6 L413.2 445.7 L408.6 432.0 M398.3 438.9 L413.2 445.7 M432.6 450.8 L439.5 458.3 L447.5 459.0 L458.9 453.1 L465.8 451.5 L468.0 445.7 L471.5 444.6 L478.3 444.6 L481.8 446.9 L471.5 457.2 L453.2 466.3 L439.5 469.8 L421.2 467.5 L407.4 462.9 L398.3 457.2 M398.3 466.3 L409.7 474.3 L421.2 476.6 L432.6 475.0 L438.3 477.8 L433.7 482.3 L425.7 484.2 L423.0 488.0 L424.6 496.0 L418.9 505.2 L415.4 515.5 L424.6 525.8 L434.9 533.8 L442.9 536.8 L450.9 544.5 L458.9 553.7 L459.6 570.4 L472.6 574.9 L497.8 564.7 L508.1 570.4 L535.5 552.1 L565.2 537.2 L576.7 530.4 L579.6 518.9 L579.6 507.5 L585.8 498.3 L597.2 486.9 L609.8 475.5 M424.6 525.8 L540.1 472.0 L551.5 475.5 L558.4 485.1 L567.5 480.0 L579.0 492.6 L566.4 509.8 L533.2 529.9 L530.9 541.8 L497.8 564.7 M447.5 524.6 L449.7 516.6 L457.7 514.8 L472.6 525.3 L477.2 532.6 L474.9 540.6 L464.6 542.9 L447.5 524.6 M540.1 472.0 L524.1 462.9 L514.9 453.7 L516.7 427.4 L521.8 422.4 L533.2 427.4 L545.8 422.2 L546.9 434.3 L565.7 440.0 L566.4 445.7 L573.2 452.6 L572.1 464.0 L567.5 473.6 L551.5 475.5 M545.8 422.2 L540.1 456.0 L542.4 459.0 L546.9 458.3 L551.5 437.7 L546.9 434.3 M546.9 434.3 L548.1 420.6 L559.5 409.6 L576.7 425.2 L589.9 441.2 L570.9 474.3 M567.5 473.6 L579.0 489.2 L583.5 490.3 L609.8 470.9 M570.9 474.3 L606.4 429.7 L608.7 436.6 M600.7 401.1 L597.2 404.6 L588.1 408.0 L590.4 413.7 L585.8 417.2 L592.7 418.3 L611.0 409.6 M458.9 553.7 L450.9 573.8 L444.0 578.4 L430.3 580.0 L415.4 576.1 L398.3 566.9 M398.3 574.9 L414.3 582.3 L414.3 576.1 M459.6 570.4 L449.7 578.4 L445.2 587.5 L453.2 596.7 L463.5 605.8 L465.8 615.0 L460.0 625.3 L450.9 632.1 L430.3 637.8 M494.3 640.1 L498.9 628.7 L505.8 619.5 L519.5 608.1 L544.6 596.7 L556.1 594.8 L565.2 597.1 L572.1 594.4 L583.5 573.8 L597.2 555.5 L609.8 547.5 M609.8 571.5 L603.0 583.0 L599.5 599.0 L598.4 619.5 L592.7 635.6 L583.5 640.1 M462.3 621.1 L456.6 628.0 L446.3 634.2 L431.4 637.2 L424.6 641.7 L420.0 649.7 L417.7 663.5 L412.0 673.7 L398.3 676.5 M505.8 621.1 L498.9 629.1 L494.3 642.9 L489.8 654.3 L482.9 663.5 L471.5 669.2 L461.2 673.7 L457.7 679.5 L456.6 684.0 L453.2 687.5 L439.5 685.2 L432.6 688.6 L416.6 701.2 L410.9 695.0 L405.1 701.2 L398.3 710.3 M398.3 724.1 L409.7 719.5 L423.4 705.8 L444.0 704.2 L466.9 696.6 L481.1 693.6 L480.2 681.7 L494.3 670.3 L501.2 667.3 L514.9 669.2 L540.5 669.9 L543.5 677.2 L541.2 689.8 L535.5 693.2 L524.1 689.8 L513.8 688.6 L509.2 692.0 L510.3 711.5 L513.8 724.1 L517.2 733.9 L521.8 730.9 L530.9 716.0 L535.5 711.9 L537.8 720.6 L538.9 733.2 L544.6 732.1 L551.5 717.2 L556.1 711.5 L560.7 712.2 L565.2 720.6 L566.4 738.9 L566.4 757.2 L572.1 759.5 L575.5 762.9 L568.7 782.8 L413.2 860.1 L398.3 867.4 M599.5 621.1 L595.0 633.7 L581.2 642.9 L576.7 649.7 L576.0 661.2 L576.7 674.9 L579.0 681.7 L590.4 696.6 L599.5 709.2 L609.8 718.3 M609.8 738.9 L600.7 741.2 L599.5 767.5 L609.8 762.9 M688.6 133.8 L717.5 131.4 L747.1 140.8 L729.6 149.1 L727.4 161.6 L732.8 194.5 L753.6 154.4 L761.8 155.0 L758.0 184.6 L770.5 186.8 L775.5 201.0 L784.3 222.9 L789.8 233.9 L796.4 244.8 L805.1 251.4 L822.6 255.8 L840.1 257.3 L853.3 260.1 L864.2 267.2 L875.2 273.3 L894.9 282.0 L910.2 283.1 L919.0 286.4 L928.8 290.8 L931.0 295.2 L929.9 301.8 L922.3 310.1 L919.0 306.1 L910.2 293.0 L903.6 288.6 L897.1 289.7 L893.8 282.0 M688.6 133.8 L704.7 180.9 L693.2 209.8 M697.8 207.6 L704.4 222.5 L725.2 214.2 L726.3 208.7 L765.7 189.6 L770.5 186.8 M726.3 208.7 L732.8 194.5 M725.2 214.2 L725.8 220.7 L706.6 238.2 L707.7 249.2 L709.2 255.8 L730.7 256.9 L736.1 260.1 L748.2 271.1 L759.1 279.9 L765.7 279.4 L777.7 284.2 L785.4 280.9 L788.0 273.3 L785.4 266.7 L776.6 260.1 L767.9 249.2 L759.1 238.2 L751.5 227.3 L750.4 220.3 L759.1 218.5 L762.4 212.0 L758.0 206.5 L758.7 201.0 L764.6 197.7 L765.7 189.6 M708.8 247.0 L716.4 233.2 L730.7 245.9 L721.9 250.3 L714.2 250.7 L708.8 247.0 M719.7 230.1 L730.7 225.1 L765.7 261.2 L756.5 265.2 L719.7 230.1 M730.7 225.1 L741.6 229.5 L751.5 227.3 L755.8 244.8 L765.7 261.2 M700.0 247.0 L706.6 244.4 M810.6 125.5 L798.5 130.9 L787.6 141.9 L784.3 148.5 L786.5 181.3 L794.2 194.5 L809.5 209.8 L831.4 222.9 L844.5 236.1 L863.1 230.6 L846.3 214.2 L845.6 208.7 L835.8 195.5 L845.0 190.5 L858.8 201.0 L866.4 218.5 L882.8 249.2 L897.1 255.8 L919.0 264.5 L938.7 279.9 L943.1 290.8 L945.3 302.8 L950.7 305.0 M934.3 125.5 L934.7 136.4 L938.7 148.5 L943.1 156.1 L954.0 163.8 L954.0 205.4 L960.6 212.0 L959.5 251.4 L956.2 273.3 L951.8 288.6 L950.7 305.0 L978.1 308.3 L1000.0 306.1 M960.6 212.0 L973.7 216.4 L986.9 222.9 L993.4 231.7 L1000.0 244.8 M961.7 212.0 L961.0 251.4 L958.0 273.3 L954.0 288.6 L951.8 305.0 M1000.0 311.6 L978.1 314.9 L977.7 310.5 M960.6 335.7 L973.7 349.9 M960.6 335.7 L962.8 349.9 M790.9 286.4 L794.2 280.9 L805.1 278.8 L807.3 271.1 L812.8 265.0 L818.2 264.5 L829.2 271.1 L838.0 270.4 L850.0 282.0 L864.2 280.9 L893.8 282.0 M790.9 286.4 L794.2 295.2 L802.9 301.8 L812.8 310.5 L831.4 313.8 L857.7 330.2 M810.6 273.3 L816.1 269.6 L825.9 272.2 L828.1 277.7 L823.7 279.9 L816.1 278.1 L810.6 273.3 M804.7 288.6 L809.5 283.1 L825.9 284.2 L833.6 279.9 L829.2 271.1 M804.7 288.6 L813.9 301.8 L857.7 330.2 M813.9 301.8 L813.9 288.2 L842.3 288.2 L857.7 330.2 M838.0 270.4 L851.1 286.4 L855.5 308.3 L857.7 330.2 M857.7 330.2 L844.5 339.0 L862.0 340.7 L873.0 337.9 L879.6 337.9 L893.8 342.3 L904.7 331.3 L893.8 328.0 L886.1 325.8 L878.5 310.5 L873.0 295.2 L867.5 291.9 L862.0 289.7 L866.4 287.5 L875.2 286.4 L893.8 294.1 L899.3 301.8 L905.8 318.2 L911.3 330.2 L912.8 349.9 M1000.0 244.8 L1020.8 283.1 L1079.9 332.4 L1081.7 343.4 L1077.7 349.9 M1000.0 306.1 L1009.9 307.9 L1021.5 309.4 L1032.8 320.4 L1036.1 337.2 L1051.5 337.2 L1066.8 349.9 M1000.0 312.0 L1009.9 307.9 M1004.4 349.9 L1007.2 336.4 L1020.8 341.2 L1033.9 349.9 M1149.6 349.9 L1152.2 324.7 L1139.7 341.2 L1132.5 336.8 L1130.3 337.2 L1123.7 331.3 L1138.0 298.0 L1149.6 303.5 L1162.0 300.2 L1175.2 303.5 L1190.5 306.8 L1199.3 306.1 L1201.0 294.1 L1188.3 287.5 L1175.8 284.2 L1176.9 277.2 L1201.9 273.3 L1204.7 284.2 L1221.2 292.6 L1235.4 300.0 L1261.2 311.6 L1252.9 320.4 L1247.4 330.7 L1236.5 329.1 L1231.0 326.9 L1227.7 328.0 L1224.5 325.4 L1222.3 320.4 L1198.2 330.2 L1186.1 337.9 L1193.1 349.9 M1201.0 301.8 L1223.4 286.4 L1229.5 289.1 L1223.4 293.0 L1216.8 289.7 M1186.1 337.9 L1180.7 328.0 L1169.7 332.8 L1169.7 343.4 L1157.7 349.9 M1233.2 296.3 L1250.7 290.1 L1261.7 294.1 L1266.1 293.6 L1272.6 296.9 L1261.2 311.6 M1233.2 296.3 L1240.9 301.8 L1272.6 296.9 M1236.5 299.6 L1272.6 297.8 M1400.0 134.0 L1389.3 143.8 L1375.1 152.1 L1360.6 153.5 L1351.6 165.2 L1357.0 185.6 L1349.3 212.3 L1355.4 224.0 L1361.5 218.4 L1367.9 203.7 L1378.0 194.6 L1384.8 181.1 L1387.8 163.4 L1400.2 165.2 L1405.4 160.3 L1404.5 141.9 L1400.0 134.0 M1357.0 185.6 L1404.5 141.9 M1358.4 186.3 L1404.5 143.3 M1399.5 126.8 L1402.9 130.2 L1412.0 127.9 L1413.1 125.0 M1415.4 125.0 L1417.6 126.8 L1422.1 125.0 M600.0 414.3 L621.4 404.6 L639.6 395.0 L642.9 410.0 L638.6 435.7 M600.0 437.9 L606.4 430.4 L608.6 436.8 L626.8 422.9 L632.1 430.4 L630.0 436.8 M842.1 320.0 L858.2 329.6 L856.1 320.0 M844.3 320.0 L858.2 329.6 M858.2 329.6 L845.4 338.9 L861.4 341.0 L879.6 337.1 L891.4 341.9 L896.8 341.0 L904.3 331.8 L894.6 328.6 L888.2 325.4 L885.0 320.0 M907.5 320.0 L911.8 330.7 L912.9 347.9 L910.7 365.0 L895.7 371.0 L878.6 367.1 L874.7 370.4 L878.6 384.3 L878.1 390.7 L881.1 393.9 L889.3 389.6 L900.0 393.9 L903.2 390.7 L901.1 389.0 L892.5 387.5 L888.2 384.3 L890.4 382.1 L898.9 384.3 L911.1 379.4 L921.4 386.4 L934.3 395.0 L940.7 405.7 L949.3 422.9 L951.4 435.7 M960.0 336.1 L987.9 395.0 L979.7 433.6 L994.3 429.3 L998.6 436.8 M1006.1 436.8 L1010.4 430.4 L1015.7 436.8 M960.0 336.1 L992.1 370.4 L1012.5 377.9 L1083.2 419.6 L1071.4 436.8 M1012.5 377.9 L1017.9 390.7 L1028.6 410.0 L1033.9 422.9 L1038.2 436.8 M1036.1 431.4 L1040.4 426.5 L1053.2 426.1 L1067.1 436.8 M1006.7 336.1 L1003.3 359.6 L1089.6 405.7 L1095.4 400.4 L1069.3 373.6 L1022.1 341.4 L1006.7 336.1 M1032.9 320.0 L1036.1 337.1 L1052.1 337.6 L1072.5 354.3 L1077.9 349.6 L1081.7 340.4 L1078.9 331.8 L1065.0 320.0 M1077.9 349.6 L1092.9 359.6 L1110.0 362.4 L1121.8 361.8 L1119.0 374.6 L1107.9 373.6 L1100.4 368.2 L1090.7 365.4 L1082.1 366.1 L1076.8 360.3 L1071.4 358.6 L1068.9 355.4 L1072.5 354.3 M1127.1 320.0 L1123.9 330.7 L1131.4 337.1 L1140.0 341.4 L1151.4 325.4 L1148.6 354.3 L1162.5 361.8 L1174.3 357.5 L1187.1 358.6 L1195.3 353.9 L1180.7 328.1 L1170.0 332.4 L1169.6 341.4 L1148.6 354.3 M1186.1 337.1 L1202.1 328.6 L1223.6 320.0 M1223.6 321.1 L1227.9 327.5 L1233.2 327.5 L1247.1 330.3 L1253.6 320.0 M1129.3 401.4 L1142.1 395.4 L1162.5 391.8 L1181.8 407.4 L1187.1 405.7 L1186.7 400.4 L1198.9 385.4 M1186.7 400.4 L1183.9 397.1 L1183.9 388.6 L1189.3 383.9 L1198.9 385.4 L1209.6 389.0 L1208.6 402.5 L1223.6 406.1 L1227.9 382.1 L1250.4 382.8 L1253.6 389.0 L1245.0 391.8 L1256.1 404.2 L1251.0 405.7 L1247.1 417.5 L1236.4 436.8 M1129.3 401.4 L1131.0 408.5 L1159.3 407.9 L1171.1 427.1 L1175.4 430.4 L1193.6 424.6 L1200.0 432.5 L1204.9 415.4 L1210.7 428.2 L1211.8 436.8 M1223.6 406.1 L1217.1 418.6 L1233.2 425.0 L1230.0 431.9 L1213.9 425.6 L1210.7 428.2 M1135.7 436.8 L1142.1 427.8 L1150.7 436.8 M1146.0 422.9 L1155.0 419.6 L1170.0 436.8 M1678.7 660.8 L1669.3 660.8 L1653.3 665.3 L1656.0 677.3 L1661.3 685.3 L1655.5 696.0 L1672.0 706.1 L1678.7 704.0 M1632.0 692.0 L1645.3 694.1 L1632.0 712.0"/><path d="M877.9 216.4 L883.1 218.6 L881.0 223.5 L875.8 221.3 L877.9 216.4 M883.6 218.8 L888.8 221.0 L886.7 225.9 L881.5 223.7 L883.6 218.8 M889.2 221.2 L894.5 223.5 L892.4 228.4 L887.1 226.1 L889.2 221.2 M894.9 223.7 L900.1 225.9 L898.0 230.8 L892.8 228.6 L894.9 223.7 M900.6 226.1 L905.8 228.3 L903.7 233.2 L898.5 231.0 L900.6 226.1 M906.2 228.5 L911.5 230.8 L909.4 235.7 L904.2 233.4 L906.2 228.5 M911.9 231.0 L917.1 233.2 L915.0 238.1 L909.8 235.9 L911.9 231.0 M917.6 233.4 L922.8 235.6 L920.7 240.5 L915.5 238.3 L917.6 233.4 M923.3 235.8 L928.5 238.1 L926.4 242.9 L921.2 240.7 L923.3 235.8 M928.9 238.2 L934.1 240.5 L932.0 245.4 L926.8 243.1 L928.9 238.2 M934.6 240.7 L939.8 242.9 L937.7 247.8 L932.5 245.6 L934.6 240.7 M940.3 243.1 L945.5 245.3 L943.4 250.2 L938.2 248.0 L940.3 243.1 M945.9 245.5 L951.2 247.8 L949.1 252.7 L943.8 250.4 L945.9 245.5 M881.0 224.7 L886.3 226.9 L884.2 231.8 L879.0 229.6 L881.0 224.7 M886.7 227.1 L891.9 229.4 L889.8 234.2 L884.6 232.0 L886.7 227.1 M892.4 229.5 L897.6 231.8 L895.5 236.7 L890.3 234.4 L892.4 229.5 M898.1 232.0 L903.3 234.2 L901.2 239.1 L896.0 236.9 L898.1 232.0 M903.7 234.4 L908.9 236.6 L906.8 241.5 L901.6 239.3 L903.7 234.4 M909.4 236.8 L914.6 239.1 L912.5 244.0 L907.3 241.7 L909.4 236.8 M915.1 239.3 L920.3 241.5 L918.2 246.4 L913.0 244.2 L915.1 239.3 M920.7 241.7 L926.0 243.9 L923.9 248.8 L918.6 246.6 L920.7 241.7 M926.4 244.1 L931.6 246.4 L929.5 251.3 L924.3 249.0 L926.4 244.1 M932.1 246.6 L937.3 248.8 L935.2 253.7 L930.0 251.5 L932.1 246.6 M937.8 249.0 L943.0 251.2 L940.9 256.1 L935.7 253.9 L937.8 249.0 M943.4 251.4 L948.6 253.7 L946.5 258.5 L941.3 256.3 L943.4 251.4 M881.9 232.0 L887.1 234.3 L885.0 239.2 L879.8 236.9 L881.9 232.0 M887.6 234.5 L892.8 236.7 L890.7 241.6 L885.5 239.3 L887.6 234.5 M893.3 236.9 L898.5 239.1 L896.4 244.0 L891.2 241.8 L893.3 236.9 M898.9 239.3 L904.2 241.6 L902.1 246.4 L896.8 244.2 L898.9 239.3 M904.6 241.7 L909.8 244.0 L907.7 248.9 L902.5 246.6 L904.6 241.7 M910.3 244.2 L915.5 246.4 L913.4 251.3 L908.2 249.1 L910.3 244.2 M916.0 246.6 L921.2 248.8 L919.1 253.7 L913.9 251.5 L916.0 246.6 M921.6 249.0 L926.8 251.3 L924.7 256.2 L919.5 253.9 L921.6 249.0 M927.3 251.5 L932.5 253.7 L930.4 258.6 L925.2 256.4 L927.3 251.5 M933.0 253.9 L938.2 256.1 L936.1 261.0 L930.9 258.8 L933.0 253.9 M938.6 256.3 L943.8 258.6 L941.8 263.5 L936.5 261.2 L938.6 256.3 M879.4 237.9 L884.6 240.1 L882.5 245.0 L877.3 242.8 L879.4 237.9 M885.1 240.3 L890.3 242.6 L888.2 247.5 L883.0 245.2 L885.1 240.3 M890.7 242.8 L896.0 245.0 L893.9 249.9 L888.7 247.7 L890.7 242.8 M896.4 245.2 L901.6 247.4 L899.5 252.3 L894.3 250.1 L896.4 245.2 M902.1 247.6 L907.3 249.9 L905.2 254.8 L900.0 252.5 L902.1 247.6 M907.8 250.1 L913.0 252.3 L910.9 257.2 L905.7 254.9 L907.8 250.1 M919.1 254.9 L924.3 257.2 L922.2 262.0 L917.0 259.8 L919.1 254.9 M924.8 257.3 L930.0 259.6 L927.9 264.5 L922.7 262.2 L924.8 257.3 M930.4 259.8 L935.7 262.0 L933.6 266.9 L928.3 264.7 L930.4 259.8 M936.1 262.2 L941.3 264.4 L939.2 269.3 L934.0 267.1 L936.1 262.2 M805.3 136.7 L810.6 133.9 L813.0 138.3 L807.7 141.2 L805.3 136.7 M811.1 133.7 L816.4 130.9 L818.7 135.3 L813.4 138.1 L811.1 133.7 M816.8 130.6 L822.1 127.8 L824.5 132.2 L819.2 135.0 L816.8 130.6 M809.6 142.0 L814.9 139.2 L817.3 143.6 L812.0 146.5 L809.6 142.0 M815.4 139.0 L820.7 136.2 L823.0 140.6 L817.7 143.4 L815.4 139.0 M821.1 135.9 L826.4 133.1 L828.8 137.5 L823.5 140.3 L821.1 135.9 M826.9 132.9 L832.2 130.1 L834.5 134.5 L829.2 137.3 L826.9 132.9 M832.6 129.8 L837.9 127.0 L840.3 131.4 L835.0 134.2 L832.6 129.8 M838.4 126.7 L843.7 123.9 L846.0 128.3 L840.7 131.2 L838.4 126.7 M844.2 123.7 L849.4 120.9 L851.8 125.3 L846.5 128.1 L844.2 123.7 M849.9 120.6 L855.2 117.8 L857.5 122.2 L852.3 125.0 L849.9 120.6 M855.7 117.6 L861.0 114.8 L863.3 119.2 L858.0 122.0 L855.7 117.6 M813.6 146.7 L818.9 143.9 L821.2 148.3 L815.9 151.1 L813.6 146.7 M819.3 143.6 L824.6 140.8 L827.0 145.2 L821.7 148.1 L819.3 143.6 M825.1 140.6 L830.4 137.8 L832.7 142.2 L827.4 145.0 L825.1 140.6 M830.8 137.5 L836.1 134.7 L838.5 139.1 L833.2 141.9 L830.8 137.5 M836.6 134.5 L841.9 131.7 L844.2 136.1 L838.9 138.9 L836.6 134.5 M842.4 131.4 L847.6 128.6 L850.0 133.0 L844.7 135.8 L842.4 131.4 M848.1 128.4 L853.4 125.5 L855.7 129.9 L850.5 132.8 L848.1 128.4 M853.9 125.3 L859.2 122.5 L861.5 126.9 L856.2 129.7 L853.9 125.3 M859.6 122.2 L864.9 119.4 L867.3 123.8 L862.0 126.6 L859.6 122.2 M821.0 149.5 L826.3 146.7 L828.6 151.1 L823.3 153.9 L821.0 149.5 M826.7 146.5 L832.0 143.7 L834.4 148.1 L829.1 150.9 L826.7 146.5 M832.5 143.4 L837.8 140.6 L840.1 145.0 L834.8 147.8 L832.5 143.4 M838.8 154.4 L843.7 150.7 L846.9 154.8 L841.9 158.5 L838.8 154.4 M844.2 150.4 L849.1 146.7 L852.2 150.8 L847.3 154.5 L844.2 150.4 M849.5 146.3 L854.4 142.6 L857.5 146.7 L852.6 150.5 L849.5 146.3 M854.9 142.3 L859.8 138.6 L862.9 142.7 L858.0 146.4 L854.9 142.3 M860.2 138.3 L865.1 134.6 L868.2 138.7 L863.3 142.4 L860.2 138.3 M865.6 134.2 L870.5 130.5 L873.6 134.7 L868.7 138.4 L865.6 134.2 M870.9 130.2 L875.8 126.5 L878.9 130.6 L874.0 134.3 L870.9 130.2 M876.3 126.2 L881.2 122.5 L884.3 126.6 L879.4 130.3 L876.3 126.2 M881.6 122.1 L886.5 118.4 L889.6 122.6 L884.7 126.3 L881.6 122.1 M887.0 118.1 L891.9 114.4 L895.0 118.5 L890.1 122.2 L887.0 118.1 M892.3 114.1 L897.2 110.4 L900.3 114.5 L895.4 118.2 L892.3 114.1 M842.7 159.6 L847.7 155.9 L850.8 160.0 L845.9 163.7 L842.7 159.6 M848.1 155.6 L853.0 151.9 L856.1 156.0 L851.2 159.7 L848.1 155.6 M853.4 151.5 L858.4 147.8 L861.5 151.9 L856.5 155.7 L853.4 151.5 M858.8 147.5 L863.7 143.8 L866.8 147.9 L861.9 151.6 L858.8 147.5 M864.1 143.5 L869.1 139.8 L872.2 143.9 L867.2 147.6 L864.1 143.5 M869.5 139.4 L874.4 135.7 L877.5 139.9 L872.6 143.6 L869.5 139.4 M874.8 135.4 L879.8 131.7 L882.9 135.8 L877.9 139.5 L874.8 135.4 M880.2 131.4 L885.1 127.7 L888.2 131.8 L883.3 135.5 L880.2 131.4 M885.5 127.4 L890.5 123.6 L893.6 127.8 L888.6 131.5 L885.5 127.4 M890.9 123.3 L895.8 119.6 L898.9 123.7 L894.0 127.4 L890.9 123.3 M896.2 119.3 L901.1 115.6 L904.3 119.7 L899.3 123.4 L896.2 119.3 M846.7 164.8 L851.6 161.1 L854.7 165.2 L849.8 168.9 L846.7 164.8 M852.0 160.8 L856.9 157.1 L860.0 161.2 L855.1 164.9 L852.0 160.8 M857.4 156.7 L862.3 153.0 L865.4 157.2 L860.5 160.9 L857.4 156.7 M862.7 152.7 L867.6 149.0 L870.7 153.1 L865.8 156.8 L862.7 152.7 M873.4 144.6 L878.3 140.9 L881.4 145.1 L876.5 148.8 L873.4 144.6 M878.8 140.6 L883.7 136.9 L886.8 141.0 L881.9 144.7 L878.8 140.6 M884.1 136.6 L889.0 132.9 L892.1 137.0 L887.2 140.7 L884.1 136.6 M889.5 132.6 L894.4 128.8 L897.5 133.0 L892.6 136.7 L889.5 132.6 M894.8 128.5 L899.7 124.8 L902.8 128.9 L897.9 132.6 L894.8 128.5 M900.1 124.5 L905.1 120.8 L908.2 124.9 L903.3 128.6 L900.1 124.5 M830.0 210.7 L828.4 210.6 L826.9 210.3 L825.3 210.0 L823.7 209.7 L825.4 202.9 L826.7 203.2 L828.0 203.4 L829.4 203.7 L830.7 203.8 L830.0 210.7 M822.9 209.4 L821.3 209.0 L819.8 208.5 L818.3 207.9 L816.8 207.3 L819.6 200.9 L820.9 201.5 L822.1 201.9 L823.4 202.3 L824.7 202.7 L822.9 209.4 M816.0 207.0 L814.6 206.3 L813.2 205.5 L811.8 204.7 L810.4 203.9 L814.2 198.0 L815.4 198.8 L816.5 199.4 L817.7 200.1 L818.9 200.6 L816.0 207.0 M809.7 203.4 L808.4 202.5 L807.1 201.5 L805.9 200.5 L804.7 199.5 L809.4 194.3 L810.4 195.2 L811.4 196.1 L812.5 196.9 L813.6 197.6 L809.7 203.4 M804.0 198.9 L802.9 197.7 L801.8 196.6 L800.8 195.4 L799.7 194.1 L805.2 189.8 L806.1 190.9 L807.0 191.9 L807.9 192.9 L808.8 193.8 L804.0 198.9 M799.2 193.4 L798.3 192.1 L797.4 190.8 L796.5 189.4 L795.8 188.0 L801.9 184.7 L802.5 185.9 L803.2 187.0 L804.0 188.2 L804.8 189.2 L799.2 193.4 M795.3 187.3 L794.6 185.8 L794.0 184.4 L793.4 182.9 L792.8 181.4 L799.4 179.1 L799.9 180.4 L800.4 181.6 L800.9 182.9 L801.5 184.1 L795.3 187.3 M792.5 180.6 L792.1 179.0 L791.7 177.5 L791.3 175.9 L791.0 174.4 L797.9 173.2 L798.1 174.5 L798.4 175.8 L798.8 177.1 L799.2 178.4 L792.5 180.6 M790.9 173.5 L790.7 171.9 L790.5 170.3 L790.4 168.7 L790.4 167.1 L797.4 167.1 L797.4 168.5 L797.5 169.8 L797.6 171.1 L797.8 172.5 L790.9 173.5 M790.4 166.2 L790.5 164.6 L790.6 163.0 L790.8 161.5 L791.0 159.9 L797.9 161.0 L797.7 162.3 L797.5 163.7 L797.4 165.0 L797.4 166.4 L790.4 166.2 M791.2 159.0 L791.5 157.4 L791.9 155.9 L792.3 154.3 L792.8 152.8 L799.4 155.1 L799.0 156.4 L798.6 157.7 L798.3 159.0 L798.0 160.3 L791.2 159.0 M793.1 152.0 L793.6 150.5 L794.3 149.0 L795.0 147.6 L795.7 146.2 L801.8 149.5 L801.2 150.7 L800.6 151.9 L800.1 153.1 L799.6 154.4 L793.1 152.0 M796.1 145.4 L796.9 144.0 L797.8 142.7 L798.7 141.4 L799.7 140.1 L805.2 144.4 L804.4 145.4 L803.6 146.5 L802.9 147.7 L802.2 148.8 L796.1 145.4 M800.2 139.4 L801.3 138.2 L802.3 137.0 L803.4 135.8 L804.6 134.7 L809.3 139.9 L808.3 140.8 L807.4 141.8 L806.5 142.8 L805.6 143.8 L800.2 139.4 M827.6 202.6 L826.0 202.3 L824.5 201.9 L822.9 201.4 L821.4 200.9 L823.9 194.4 L825.1 194.8 L826.4 195.2 L827.6 195.5 L828.9 195.8 L827.6 202.6 M820.6 200.6 L819.2 199.9 L817.7 199.2 L816.3 198.5 L815.0 197.7 L818.7 191.8 L819.8 192.4 L820.9 193.0 L822.1 193.6 L823.3 194.1 L820.6 200.6 M814.2 197.2 L812.9 196.3 L811.6 195.3 L810.4 194.3 L809.2 193.2 L814.1 188.2 L815.0 189.0 L816.0 189.9 L817.0 190.6 L818.1 191.4 L814.2 197.2 M808.6 192.6 L807.5 191.4 L806.5 190.2 L805.5 189.0 L804.5 187.7 L810.3 183.7 L811.0 184.7 L811.8 185.8 L812.7 186.7 L813.6 187.7 L808.6 192.6 M804.0 186.9 L803.2 185.6 L802.4 184.2 L801.7 182.8 L801.0 181.3 L807.4 178.6 L808.0 179.7 L808.5 180.9 L809.2 182.0 L809.9 183.1 L804.0 186.9 M800.7 180.5 L800.1 179.0 L799.6 177.5 L799.2 176.0 L798.9 174.4 L805.7 173.0 L806.0 174.2 L806.3 175.5 L806.7 176.7 L807.2 177.9 L800.7 180.5 M798.7 173.5 L798.4 172.0 L798.3 170.4 L798.1 168.8 L798.1 167.2 L805.1 167.2 L805.1 168.4 L805.2 169.7 L805.3 171.0 L805.5 172.3 L798.7 173.5 M798.1 166.3 L798.2 164.7 L798.3 163.1 L798.5 161.5 L798.8 160.0 L805.6 161.3 L805.4 162.6 L805.2 163.9 L805.1 165.2 L805.1 166.5 L798.1 166.3 M799.0 159.1 L799.4 157.6 L799.8 156.0 L800.3 154.5 L800.9 153.0 L807.4 155.7 L806.9 156.9 L806.5 158.1 L806.1 159.4 L805.8 160.6 L799.0 159.1 M801.3 152.2 L802.0 150.8 L802.7 149.4 L803.5 148.0 L804.4 146.7 L810.2 150.6 L809.5 151.7 L808.8 152.8 L808.2 153.9 L807.6 155.1 L801.3 152.2 M825.0 194.1 L823.5 193.5 L822.0 192.9 L820.5 192.1 L819.1 191.3 L822.8 185.5 L823.8 186.1 L824.9 186.7 L826.1 187.2 L827.3 187.6 L825.0 194.1 M818.3 190.8 L817.0 189.8 L815.7 188.8 L814.5 187.7 L813.3 186.5 L818.4 181.8 L819.3 182.7 L820.2 183.6 L821.2 184.4 L822.2 185.1 L818.3 190.8 M812.7 185.9 L811.7 184.6 L810.7 183.3 L809.8 181.9 L809.0 180.4 L815.1 177.2 L815.7 178.3 L816.4 179.4 L817.1 180.4 L817.9 181.3 L812.7 185.9 M808.6 179.6 L807.9 178.1 L807.3 176.6 L806.8 175.0 L806.4 173.4 L813.1 171.9 L813.4 173.1 L813.8 174.3 L814.3 175.5 L814.8 176.6 L808.6 179.6 M806.2 172.6 L806.0 170.9 L805.8 169.3 L805.7 167.7 L805.7 166.0 L812.6 166.3 L812.6 167.5 L812.6 168.8 L812.8 170.0 L813.0 171.2 L806.2 172.6 M805.8 165.1 L805.9 163.5 L806.2 161.8 L806.5 160.2 L807.0 158.7 L813.5 160.7 L813.2 161.9 L812.9 163.1 L812.8 164.3 L812.6 165.6 L805.8 165.1"/></g></svg>
<div style="left:609px;top:437px;width:1023px;height:533px;border:1px solid #2f2f2f;border-radius:7px 7px 6px 6px;background:linear-gradient(180deg,#fefdfe,#f9f6fa 28px,#fefefe 60px);box-shadow:0 0 0 1px rgba(255,255,255,.6) inset,0 2px 13px 4px rgba(0,0,0,.66),0 0 4px 1px rgba(0,0,0,.55)"></div>
<div style="left:611px;top:438px;width:1020px;height:27px;border-radius:6px 6px 0 0;background:linear-gradient(105deg,rgba(200,150,215,0) 28%,rgba(200,150,215,.16) 31%,rgba(200,150,215,0) 35%,rgba(200,150,215,.12) 40%,rgba(200,150,215,0) 46%,rgba(190,190,190,0) 62%,rgba(190,190,190,.32) 66%,rgba(190,190,190,.05) 70%,rgba(190,190,190,0) 74%,rgba(190,190,190,.28) 80%,rgba(190,190,190,0) 87%)"></div>
<svg class="ic" style="left:617px;top:442px" width="15" height="19" viewBox="0 0 15 19"><path d="M6.800 3.200C3.500 4.500 1.800 8 2.300 11.500C2.700 14 4.500 15.800 6.500 15.500C5.300 12 5.500 7 6.800 3.200Z" fill="#eef55a" stroke="#c3cf3a" stroke-width=".5"/><path d="M11 5.500C13 7 13.600 10.500 12.600 13.500C12 15.200 13 16 13.200 17C11.500 17.600 10 16.800 9.200 15.500C8 13.500 8.600 9 11 5.500Z" fill="#eef55a" stroke="#c3cf3a" stroke-width=".5"/><path d="M5.500 13.500L11.500 5" stroke="#168a16" stroke-width="1.700"/><path d="M10.300 3.200L13.400 2.800L13.200 6Z" fill="#15a015"/><path d="M1.800 15l3.400.3-.3 2.800-1.300-.2.200-1.700-2-.2Z" fill="#0f5c0f"/></svg>
<span class="tt" style="left:638px;top:444.14px;;letter-spacing:-0.342px">Свойства слоя — cad_parcel_4_4_9_20160816 | Стиль</span>
<div style="left:1549px;top:437px;width:28px;height:20px;border:1px solid #5a5f68;border-top:none;border-radius:0 0 0 5px;background:linear-gradient(#f4f5f7,#e4e6ea 45%,#c9ccd3 50%,#dfe2e7);box-shadow:inset 0 0 0 1px rgba(255,255,255,.7)"></div>
<div style="left:1576px;top:437px;width:49px;height:20px;border:1px solid #5c2a22;border-top:none;border-radius:0 0 5px 0;background:linear-gradient(#e9a898,#d7705b 45%,#c2391e 50%,#d4573c 85%,#e08e6c);box-shadow:inset 0 0 0 1px rgba(255,255,255,.45)"></div>
<svg class="ic" style="left:1549px;top:438px" width="76" height="19" viewBox="0 0 76 19"><text x="14" y="14.500" font-size="13" font-weight="bold" text-anchor="middle" fill="#fff" stroke="#3a3f4a" stroke-width="1.600" paint-order="stroke" font-family="Liberation Sans">?</text><path d="M45.500 4h4l2.200 2.700 2.200-2.700h4l-4.200 5 4.200 5h-4l-2.200-2.700-2.200 2.700h-4l4.200-5Z" fill="#fff" stroke="#4a3030" stroke-width="1.100"/></svg>
<div style="left:616px;top:465px;width:1010px;height:498px;background:#f0f0f0;border:1px solid #8c8c8c"></div>
<div style="left:617px;top:466px;width:150px;height:496px;background:#5b5b5b"></div>
<div style="left:617px;top:501px;width:155px;height:34px;background:#efefef"></div>
<span class="m" style="left:653.7px;top:476.82px;color:#fff;letter-spacing:-0.706px">Общие</span>
<span class="m" style="left:657px;top:510.82px;color:#000;letter-spacing:-0.541px">Стиль</span>
<span class="m" style="left:653.7px;top:544.82px;color:#fff;letter-spacing:-0.522px">Подписи</span>
<span class="m" style="left:653.7px;top:578.82px;color:#fff;letter-spacing:-0.765px">Поля</span>
<span class="m" style="left:653.7px;top:612.82px;color:#fff;letter-spacing:-0.312px">Отрисовка</span>
<span class="m" style="left:653.7px;top:646.82px;color:#fff;letter-spacing:-0.616px">Вывод</span>
<span class="m" style="left:653.7px;top:680.82px;color:#fff;letter-spacing:-0.174px">Действия</span>
<span class="m" style="left:653.7px;top:714.82px;color:#fff;letter-spacing:-0.584px">Связи</span>
<span class="m" style="left:653.7px;top:748.82px;color:#fff;letter-spacing:-0.599px">Диаграммы</span>
<span class="m" style="left:653.7px;top:782.82px;color:#fff;letter-spacing:-0.343px">Метаданные</span>
<svg class="ic" style="left:617px;top:466px" width="50" height="345" viewBox="617 466 50 345"><path d="M623.500 473.500L640 490" stroke="#e8e8e8" stroke-width="1.600"/><path d="M634 484L644.500 494" stroke="#f07a1a" stroke-width="4.200" stroke-linecap="round"/><path d="M634 484L644.500 494" stroke="#ffa04a" stroke-width="1.200" stroke-linecap="round"/><path d="M640.500 480L626 494" stroke="#2f5fa8" stroke-width="3.800" stroke-linecap="round"/><path d="M640.500 480L635 485.500" stroke="#d0d0d0" stroke-width="2.200"/><path d="M633 475C637 470.500 643.500 472 646.500 478.500L645 483.500L641.500 482.500C640.500 478 637.500 476 633 475Z" fill="#2b3034" stroke="#15181b" stroke-width=".6"/><path d="M628 513l14-3 2 14-14 4Z" fill="#8fd05a"/><path d="M627 517l14-3 2 8-15 3Z" fill="#5aa8e8"/><path d="M626.500 522l15-3 1 6-13 3.500Z" fill="#d8506a"/><path d="M649.500 511.500L641.500 520" stroke="#8c7a52" stroke-width="2.600" stroke-linecap="round"/><path d="M636 518.500l6.500 2.500 2 3-5 5-6.500-5.500Z" fill="#b5a884" stroke="#8c8060" stroke-width=".7"/><path d="M626.500 546.500H645Q646.300 546.500 646.300 547.800V556.700Q646.300 558 645 558H626.500L621.800 552.200Z" fill="#f5d327" stroke="#c9a818" stroke-width="1"/><text x="636" y="556" font-size="9.500" font-weight="bold" text-anchor="middle" fill="#2a2a1a" font-family="Liberation Sans">abc</text><rect x="622.600" y="575.500" width="22.800" height="20" fill="#d9d9d2" stroke="#8f8f88" stroke-width=".8"/><rect x="623" y="576" width="22" height="3.600" fill="#6b8fc2"/><path d="M624 582h20M624 585.300h20M624 588.600h20M624 591.900h20" stroke="#f4f4ee" stroke-width="1.500"/><path d="M630 580v15.500M637.500 580v15.500" stroke="#b9b9b2" stroke-width=".8"/><path d="M642.500 610L633.500 620" stroke="#c98a3a" stroke-width="2.800" stroke-linecap="round"/><path d="M628 616.500l9 8.500-7.500 6-8-7.500Z" fill="#e0a050" stroke="#b87a30" stroke-width=".8"/><path d="M625 620l7 7M623 622l7 7" stroke="#c98a3a" stroke-width=".7"/><path d="M626.500 642.800H641Q645 642.800 645 646.800V652.500Q645 656.500 641 656.500H633.500L628 664L629.500 656.500H626.500Q622.600 656.500 622.600 652.500V646.800Q622.600 642.800 626.500 642.800Z" fill="#e9dc86" stroke="#c9b95a" stroke-width=".9"/><path d="M625 649V647Q625 645 627 645H637" stroke="#fbf6d0" stroke-width="1.300" fill="none"/><circle cx="636.900" cy="685.500" r="8.200" fill="#e4e4e4" stroke="#9a9a9a" stroke-width="3" stroke-dasharray="3.200 2.200"/><circle cx="636.900" cy="685.500" r="7.800" fill="#ececec"/><circle cx="636.900" cy="685.500" r="5.800" fill="#4f86c6" stroke="#3b6aa3" stroke-width=".8"/><path d="M634.800 682.200l5.500 3.300-5.500 3.300Z" fill="#fff"/><circle cx="625.500" cy="696.500" r="3.600" fill="#6f9ad0" stroke="#c9c9c9" stroke-width="1.400" stroke-dasharray="1.800 1.200"/><path d="M628.300 722L647.200 710.600V733.200Z" fill="#3f7fc8" stroke="#2f62a0" stroke-width=".8"/><path d="M630.500 721.500L646.500 712V719Z" fill="#8fbdf0" opacity=".75"/><circle cx="623.500" cy="722" r="3" fill="#4f86c6" stroke="#2f62a0" stroke-width=".7"/><rect x="622" y="746.600" width="25.200" height="16" fill="#e6e6e6" stroke="#a8a8a8" stroke-width=".8"/><path d="M625 750h18M627 754h17M626 758h12" stroke="#cfcfcf" stroke-width="1.500"/><path d="M622.500 746.600v16" stroke="#fff" stroke-width="1.400"/><circle cx="633.500" cy="755" r="5" fill="#f0d43a"/><path d="M633.500 755V750A5 5 0 0 1 638.500 755Z" fill="#3b6fc0"/><path d="M633.500 755H638.500A5 5 0 0 1 633.500 760Z" fill="#d8322a"/><circle cx="634" cy="790.100" r="12.300" fill="#5a8cce" stroke="#3f6fae" stroke-width=".8"/><ellipse cx="632" cy="784" rx="9" ry="5.500" fill="#fff" opacity=".16"/><text x="633.500" y="798.500" font-size="23" font-style="italic" font-weight="bold" text-anchor="middle" fill="#fff" font-family="Liberation Serif">i</text></svg>
<div style="left:768.5px;top:640px;width:3px;height:170px;background-image:radial-gradient(circle at 1px 1px,#c9c9c9 .7px,transparent 1px);background-size:3px 4px"></div>
<div class="btn" style="left:773px;top:470px;width:174px;height:22px;"></div><div style="left:930px;top:471px;width:1px;height:20px;background:#a9a9a9"></div><svg class="ic" style="left:935.5px;top:479.5px" width="7" height="4" viewBox="0 0 7 4"><path d="M0 0H7L3.5 4Z" fill="#000"/></svg><span class="t" style="left:797px;top:473.39px;;letter-spacing:0.022px">Обычный знак</span><svg class="ic" style="left:780px;top:473px" width="14" height="16" viewBox="0 0 14 16"><path d="M6.500 3v11" stroke="#1f9a3a" stroke-width="1.600"/><rect x="2" y="1" width="7" height="3.800" fill="#2fb24c" stroke="#178a34" stroke-width=".7"/><rect x="5" y="6.200" width="7" height="3.800" fill="#2fb24c" stroke="#178a34" stroke-width=".7"/><rect x="2" y="11.400" width="7" height="3.800" fill="#2fb24c" stroke="#178a34" stroke-width=".7"/></svg>
<div class="frame" style="left:773px;top:500px;width:270px;height:103px;"></div>
<div style="left:858px;top:550.5px;width:100px;height:1px;background:#b87acb"></div>
<div class="frame" style="left:773px;top:609px;width:270px;height:193px;background:#fff"></div>
<div style="left:774px;top:610px;width:268px;height:33px;background:#f0f0f0"></div>
<div style="left:784.5px;top:611px;width:1px;height:12px;background-image:linear-gradient(#9a9a9a 50%,transparent 50%);background-size:1px 2px"></div>
<div style="left:780px;top:622px;width:9px;height:9px;border:1px solid #8f8f8f;background:#fff"><div style="left:1px;top:3px;width:5px;height:1px;background:#333"></div></div>
<div style="left:789px;top:626px;width:7px;height:1px;background-image:linear-gradient(90deg,#9a9a9a 50%,transparent 50%);background-size:2px 1px"></div>
<div style="left:798px;top:626.5px;width:16px;height:1px;background:#8c7fd6"></div>
<span class="t" style="left:820.5px;top:620.19px;font-weight:bold;font-size:11px;letter-spacing:0.094px">Line</span>
<div style="left:805px;top:643px;width:1px;height:17px;background-image:linear-gradient(#9a9a9a 50%,transparent 50%);background-size:1px 2px"></div>
<div style="left:805px;top:659px;width:12px;height:1px;background-image:linear-gradient(90deg,#9a9a9a 50%,transparent 50%);background-size:2px 1px"></div>
<div style="left:818px;top:659px;width:16px;height:1px;background:#b87acb"></div>
<span class="t" style="left:839px;top:652.19px;;letter-spacing:-0.111px">Простая линия</span>
<div class="btn" style="background:#f1f1f1;border-color:#c4c4c4;left:773px;top:812px;width:30px;height:26px;"><svg class="ic" style="left:5.500px;top:4px" width="17" height="17" viewBox="0 0 17 17"><path d="M8.500 3v11M3 8.500h11" stroke="#5fc468" stroke-width="6.600" stroke-linecap="round"/><path d="M8.500 3v11M3 8.500h11" stroke="#f4fff4" stroke-width="5.200" stroke-linecap="round"/><path d="M8.500 3.200v10.600M3.200 8.500h10.600" stroke="#13991b" stroke-width="3.600" stroke-linecap="round"/></svg></div>
<div class="btn" style="left:809px;top:812px;width:30px;height:26px;"><svg class="ic" style="left:5.500px;top:4px" width="17" height="17" viewBox="0 0 17 17"><rect x="1.500" y="5.500" width="14" height="6.500" rx="1.800" fill="#f2f2f2" stroke="#a2a2a2" stroke-width="1"/><rect x="3.300" y="7.300" width="10.400" height="3" fill="#858585"/></svg></div>
<div class="btn" style="left:845px;top:812px;width:30px;height:26px;"><svg class="ic" style="left:5.500px;top:4px" width="17" height="17" viewBox="0 0 17 17"><path d="M7.500 8.500V5.500Q7.500 2 10.700 2Q13.800 2 13.800 5.500V6.800" fill="none" stroke="#c9c9c9" stroke-width="1.900"/><rect x="2.500" y="8.300" width="9.500" height="7.200" rx="1" fill="#d2d2d2" stroke="#c2c2c2" stroke-width=".8"/></svg></div>
<div class="btn" style="left:881px;top:812px;width:30px;height:26px;"><svg class="ic" style="left:5.500px;top:4px" width="17" height="17" viewBox="0 0 17 17"><path d="M2 12.300Q.8 12.300 1.800 11.200L7.600 4.800Q8.500 3.900 9.400 4.800L15.200 11.200Q16.200 12.300 15 12.300Z" fill="#b5b5b5" stroke="#9c9c9c" stroke-width=".9"/></svg></div>
<div class="btn" style="left:917px;top:812px;width:30px;height:26px;"><svg class="ic" style="left:5.500px;top:4px" width="17" height="17" viewBox="0 0 17 17"><path d="M2 4.700Q.8 4.700 1.800 5.800L7.600 12.200Q8.500 13.100 9.400 12.200L15.200 5.800Q16.200 4.700 15 4.700Z" fill="#b5b5b5" stroke="#9c9c9c" stroke-width=".9"/></svg></div>
<div class="btn" style="left:973px;top:813px;width:70px;height:24px;"></div>
<span class="t" style="left:980px;top:817.49px;;letter-spacing:0.036px">Сохранить</span>
<span class="t" style="left:1052.5px;top:501.99px;;letter-spacing:-0.261px">Единицы</span>
<div class="btn" style="left:1153px;top:500px;width:120px;height:20px;"></div><div style="left:1256px;top:501px;width:1px;height:18px;background:#a9a9a9"></div><svg class="ic" style="left:1261.5px;top:508.5px" width="7" height="4" viewBox="0 0 7 4"><path d="M0 0H7L3.5 4Z" fill="#000"/></svg><span class="t" style="left:1158px;top:502.39px;;letter-spacing:-0.267px">Миллиметры</span>
<span class="t" style="left:1052.5px;top:527.19px;;letter-spacing:0.108px">Прозрачность: 0%</span>
<div style="left:1158px;top:533px;width:115px;height:3px;border:1px solid #b0b0b0;border-radius:2px;background:#e7e7e7"></div>
<svg class="ic" style="left:1153px;top:526.5px" width="11" height="17" viewBox="0 0 11 17"><path d="M1 2Q1 .8 2.200 .8H8.800Q10 .8 10 2V10.500L5.500 15.500L1 10.500Z" fill="#f4f4f4" stroke="#8c8c8c" stroke-width="1"/></svg>
<span class="t" style="left:1287.5px;top:529.39px;;letter-spacing:-0.078px">Толщина</span>
<div class="inp" style="left:1453px;top:525px;width:159px;height:23px;"></div>
<span class="t" style="left:1458px;top:528.69px;;letter-spacing:-0.109px">0,26000</span>
<div class="btn" style="left:1596px;top:526px;width:15px;height:11px;border-radius:0 2px 0 0"></div>
<div class="btn" style="left:1596px;top:537px;width:15px;height:10px;border-radius:0 0 2px 0"></div>
<svg class="ic" style="left:1600px;top:528px" width="8" height="18" viewBox="0 0 8 18"><path d="M0 5h7L3.500 1ZM0 12.500h7l-3.500 4Z" fill="#000"/></svg>
<span class="t" style="left:1052.5px;top:552.19px;;letter-spacing:-0.164px">Цвет</span>
<div class="btn" style="left:1153px;top:549px;width:108px;height:22px;"></div>
<div style="left:1157px;top:552px;width:100px;height:16px;background:#b870c6;border-radius:2px"></div>
<div class="btn" style="left:1261px;top:549px;width:12px;height:22px;"></div>
<svg class="ic" style="left:1263.5px;top:558.5px" width="7" height="4" viewBox="0 0 7 4"><path d="M0 0H7L3.5 4Z" fill="#000"/></svg>
<div style="left:1052px;top:578px;width:568px;height:1px;background:#c4c4c4"></div>
<div style="left:1052px;top:579px;width:568px;height:1px;background:#fff"></div>
<span class="t" style="left:1052.5px;top:589.19px;;letter-spacing:0.122px">Знаки в группе</span>
<div class="inp" style="left:1133px;top:587px;width:366px;height:19px;"></div>
<div class="btn" style="left:1481px;top:588px;width:17px;height:17px;border-radius:0 2px 2px 0"></div>
<svg class="ic" style="left:1486px;top:595px" width="7" height="4" viewBox="0 0 7 4"><path d="M0 0H7L3.5 4Z" fill="#000"/></svg>
<div class="btn" style="left:1502px;top:586px;width:119px;height:22px;"></div>
<span class="t" style="left:1506.5px;top:589.49px;;letter-spacing:0.254px">Открыть библиотеку</span>
<div class="frame" style="left:1053px;top:613px;width:568px;height:196px;background:#fff"></div>
<div style="left:1603px;top:614px;width:17px;height:194px;background:#f2f2f2;background-image:linear-gradient(45deg,#e6e6e6 25%,transparent 25%,transparent 75%,#e6e6e6 75%),linear-gradient(45deg,#e6e6e6 25%,transparent 25%,transparent 75%,#e6e6e6 75%);background-size:2px 2px;background-position:0 0,1px 1px"></div>
<div class="btn" style="left:1603px;top:614px;width:16px;height:17px;"></div>
<div class="btn" style="left:1603px;top:631px;width:16px;height:95px;background:linear-gradient(90deg,#f4f4f4,#e9e9e9 45%,#dcdcdc 55%,#d2d2d2)"></div>
<div class="btn" style="left:1603px;top:774px;width:16px;height:17px;"></div>
<div class="btn" style="left:1603px;top:791px;width:16px;height:17px;"></div>
<svg class="ic" style="left:1603px;top:614px" width="16" height="194" viewBox="0 0 16 194"><path d="M4.500 10.500h7L8 6.500ZM4.500 170.500h7L8 166.500ZM4.500 183h7L8 187Z" fill="#000"/><g fill="#b8b8b8"><rect x="5" y="55" width="1.200" height="1.200"/><rect x="8" y="55" width="1.200" height="1.200"/><rect x="11" y="55" width="1.200" height="1.200"/><rect x="5" y="58" width="1.200" height="1.200"/><rect x="8" y="58" width="1.200" height="1.200"/><rect x="11" y="58" width="1.200" height="1.200"/><rect x="5" y="61" width="1.200" height="1.200"/><rect x="8" y="61" width="1.200" height="1.200"/><rect x="11" y="61" width="1.200" height="1.200"/><rect x="5" y="64" width="1.200" height="1.200"/><rect x="8" y="64" width="1.200" height="1.200"/><rect x="11" y="64" width="1.200" height="1.200"/><rect x="5" y="67" width="1.200" height="1.200"/><rect x="8" y="67" width="1.200" height="1.200"/><rect x="11" y="67" width="1.200" height="1.200"/></g></svg>
<svg class="ic" style="left:1063px;top:634px" width="48" height="20" viewBox="0 0 48 20"><rect x="0" y="7.3" width="48" height="6" fill="#6be000"/><rect x="13" y="8.100" width="9.500" height="4.400" rx="2.200" fill="#3f9d00"/><rect x="28.5" y="8.100" width="9.500" height="4.400" rx="2.200" fill="#3f9d00"/><rect x="0" y="8.100" width="7.500" height="4.400" rx="2.200" fill="#3f9d00"/><rect x="44" y="8.100" width="4" height="4.400" rx="1.500" fill="#3f9d00"/></svg>
<svg class="ic" style="left:1122px;top:634px" width="48" height="20" viewBox="0 0 48 20"><rect x="0" y="6.8" width="48" height="7" fill="#bfdcfa"/></svg>
<svg class="ic" style="left:1181px;top:634px" width="48" height="20" viewBox="0 0 48 20"><rect x="0" y="6.8" width="48" height="7" fill="#bfdcfa"/></svg>
<svg class="ic" style="left:1240px;top:634px" width="48" height="20" viewBox="0 0 48 20"><rect x="5.3" y="7.200" width="5.700" height="6.200" rx=".6" fill="#f00000" stroke="#5a1010" stroke-width=".7"/><rect x="12.6" y="7.200" width="5.700" height="6.200" rx=".6" fill="#f00000" stroke="#5a1010" stroke-width=".7"/><rect x="19.9" y="7.200" width="5.700" height="6.200" rx=".6" fill="#f00000" stroke="#5a1010" stroke-width=".7"/><rect x="27.2" y="7.200" width="5.700" height="6.200" rx=".6" fill="#f00000" stroke="#5a1010" stroke-width=".7"/><rect x="34.5" y="7.200" width="5.700" height="6.200" rx=".6" fill="#f00000" stroke="#5a1010" stroke-width=".7"/><rect x="41.8" y="7.200" width="5.700" height="6.200" rx=".6" fill="#f00000" stroke="#5a1010" stroke-width=".7"/><rect x="0" y="7.200" width="2.800" height="6.200" fill="#f00000" stroke="#5a1010" stroke-width=".7"/></svg>
<svg class="ic" style="left:1299px;top:634px" width="48" height="20" viewBox="0 0 48 20"><path d="M0 4.300h4.500q1 0 1 1v10q0 1-1 1H0" fill="none" stroke="#333" stroke-width="1.300"/><rect x="0" y="8.300" width="2.200" height="4.200" fill="#2a8be0"/><rect x="16.500" y="4.300" width="12" height="12" rx="1.500" fill="#fff" stroke="#333" stroke-width="1.300"/><rect x="20.500" y="8.300" width="4.200" height="4.200" rx=".8" fill="#1f8ae8" stroke="#123" stroke-width=".5"/><path d="M48 4.300h-8q-1 0-1 1v10q0 1 1 1h8" fill="none" stroke="#333" stroke-width="1.300"/><rect x="43.500" y="8.300" width="4.200" height="4.200" rx=".8" fill="#1f8ae8"/></svg>
<svg class="ic" style="left:1358px;top:634px" width="48" height="20" viewBox="0 0 48 20"><rect x="0" y="9.1" width="48" height="2.8" fill="#b0648e"/><rect x="1.2" y="9.800" width="3.400" height="1.400" fill="#fff"/><rect x="6" y="9.800" width="3.400" height="1.400" fill="#fff"/><rect x="10.8" y="9.800" width="3.400" height="1.400" fill="#fff"/><rect x="15.6" y="9.800" width="3.400" height="1.400" fill="#fff"/><rect x="20.4" y="9.800" width="3.400" height="1.400" fill="#fff"/><rect x="25.2" y="9.800" width="3.400" height="1.400" fill="#fff"/><rect x="30" y="9.800" width="3.400" height="1.400" fill="#fff"/><rect x="34.8" y="9.800" width="3.400" height="1.400" fill="#fff"/><rect x="39.6" y="9.800" width="3.400" height="1.400" fill="#fff"/><rect x="44.4" y="9.800" width="3.400" height="1.400" fill="#fff"/></svg>
<svg class="ic" style="left:1417px;top:634px" width="48" height="20" viewBox="0 0 48 20"><rect x="0" y="5" width="48" height="10.6" fill="#aed3e8"/></svg>
<svg class="ic" style="left:1476px;top:634px" width="48" height="20" viewBox="0 0 48 20"><rect x="0" y="8.7" width="48" height="3.6" fill="#d2e8fc"/><rect x="0" y="7.65" width="48" height="1.1" fill="#a85a20"/><rect x="0" y="12.25" width="48" height="1.1" fill="#a85a20"/></svg>
<svg class="ic" style="left:1535px;top:634px" width="48" height="20" viewBox="0 0 48 20"><rect x="0" y="7.5" width="48" height="6" fill="#c3daf0"/><rect x="0" y="10.100" width="3" height=".9" fill="#8fae98"/><rect x="4" y="10.100" width="3" height=".9" fill="#8fae98"/><rect x="8" y="10.100" width="3" height=".9" fill="#8fae98"/><rect x="12" y="10.100" width="3" height=".9" fill="#8fae98"/><rect x="16" y="10.100" width="3" height=".9" fill="#8fae98"/><rect x="20" y="10.100" width="3" height=".9" fill="#8fae98"/><rect x="24" y="10.100" width="3" height=".9" fill="#8fae98"/><rect x="28" y="10.100" width="3" height=".9" fill="#8fae98"/><rect x="32" y="10.100" width="3" height=".9" fill="#8fae98"/><rect x="36" y="10.100" width="3" height=".9" fill="#8fae98"/><rect x="40" y="10.100" width="3" height=".9" fill="#8fae98"/><rect x="44" y="10.100" width="3" height=".9" fill="#8fae98"/></svg>
<svg class="ic" style="left:1063px;top:706px" width="48" height="20" viewBox="0 0 48 20"><rect x="0" y="4.25" width="48" height="12.5" fill="#9daabf"/><rect x="0" y="3.9" width="48" height="1.4" fill="#dcc3b3"/><rect x="0" y="15.7" width="48" height="1.4" fill="#dcc3b3"/></svg>
<svg class="ic" style="left:1122px;top:706px" width="48" height="20" viewBox="0 0 48 20"><rect x="0" y="8.7" width="48" height="3.6" fill="#c4b0a6"/><rect x="0" y="8.65" width="48" height="0.7" fill="#b39a90"/><rect x="0" y="11.65" width="48" height="0.7" fill="#b39a90"/></svg>
<svg class="ic" style="left:1181px;top:706px" width="48" height="20" viewBox="0 0 48 20"><rect x="0" y="9.05" width="48" height="2.9" fill="#bcd5f0"/></svg>
<svg class="ic" style="left:1240px;top:706px" width="48" height="20" viewBox="0 0 48 20"><rect x="0" y="5.25" width="48" height="10.5" fill="#f3dcfd"/><rect x="0" y="5.05" width="48" height="0.7" fill="#a8a0ac"/><rect x="0" y="15.25" width="48" height="0.7" fill="#a8a0ac"/></svg>
<svg class="ic" style="left:1299px;top:706px" width="48" height="20" viewBox="0 0 48 20"><rect x="0" y="6" width="48" height="2" fill="#000"/><rect x="0" y="13" width="48" height="2" fill="#000"/></svg>
<svg class="ic" style="left:1358px;top:706px" width="48" height="20" viewBox="0 0 48 20"><rect x="0" y="3.75" width="48" height="13.5" fill="#5f9093"/><rect x="0" y="3.55" width="48" height="0.7" fill="#3f6c70"/><rect x="0" y="16.75" width="48" height="0.7" fill="#3f6c70"/></svg>
<svg class="ic" style="left:1417px;top:706px" width="48" height="20" viewBox="0 0 48 20"><rect x="0" y="6.25" width="48" height="8.5" fill="#5fa8a2"/><rect x="0" y="6.1" width="48" height="0.6" fill="#3f8a84"/><rect x="0" y="14.3" width="48" height="0.6" fill="#3f8a84"/></svg>
<svg class="ic" style="left:1476px;top:706px" width="48" height="20" viewBox="0 0 48 20"><rect x="0" y="6.75" width="48" height="7.5" fill="#fdf2c0"/><rect x="0" y="6.4" width="48" height="0.8" fill="#e8dca0"/><rect x="0" y="13.8" width="48" height="0.8" fill="#e8dca0"/></svg>
<svg class="ic" style="left:1535px;top:706px" width="48" height="20" viewBox="0 0 48 20"><rect x="0" y="6.75" width="48" height="7.5" fill="#fdd089"/><rect x="0" y="6.4" width="48" height="0.8" fill="#e2a85a"/><rect x="0" y="13.8" width="48" height="0.8" fill="#e2a85a"/></svg>
<svg class="ic" style="left:1063px;top:778px" width="48" height="20" viewBox="0 0 48 20"><rect x="0" y="4.5" width="48" height="12" fill="#fdd089"/><rect x="0" y="4.05" width="48" height="0.9" fill="#e2a85a"/><rect x="0" y="16.05" width="48" height="0.9" fill="#e2a85a"/></svg>
<svg class="ic" style="left:1122px;top:778px" width="48" height="20" viewBox="0 0 48 20"><rect x="0" y="10" width="48" height="1" fill="#333"/></svg>
<svg class="ic" style="left:1181px;top:778px" width="48" height="20" viewBox="0 0 48 20"><rect x="0" y="5" width="48" height="11" fill="#f4f4f4"/><rect x="0" y="4.4" width="48" height="0.8" fill="#c8c8c8"/><rect x="0" y="15.8" width="48" height="0.8" fill="#c8c8c8"/></svg>
<svg class="ic" style="left:1240px;top:778px" width="48" height="20" viewBox="0 0 48 20"><rect x="0" y="6.5" width="48" height="8" fill="#bfdcf7"/></svg>
<svg class="ic" style="left:1299px;top:778px" width="48" height="20" viewBox="0 0 48 20"><rect x="0" y="7.5" width="48" height="6" fill="#b5cfea"/></svg>
<svg class="ic" style="left:1358px;top:778px" width="48" height="20" viewBox="0 0 48 20"><rect x="0" y="6.2" width="48" height="1.6" fill="#000"/><rect x="0" y="13.2" width="48" height="1.6" fill="#000"/></svg>
<svg class="ic" style="left:1417px;top:778px" width="48" height="20" viewBox="0 0 48 20"><rect x="0" y="9.2" width="48" height="2.6" fill="#f1cdd6"/></svg>
<svg class="ic" style="left:1476px;top:778px" width="48" height="20" viewBox="0 0 48 20"><rect x="0" y="5.55" width="48" height="0.9" fill="#b5b58a"/><rect x="0" y="17.4" width="48" height="1.2" fill="#b5b58a"/><rect x="2" y="8" width="1" height="3" fill="#222"/><rect x="6.2" y="8" width="1" height="3" fill="#222"/><rect x="10.4" y="8" width="1" height="3" fill="#222"/><rect x="14.6" y="8" width="1" height="3" fill="#222"/><rect x="18.8" y="8" width="1" height="3" fill="#222"/><rect x="23" y="8" width="1" height="3" fill="#222"/><rect x="27.2" y="8" width="1" height="3" fill="#222"/><rect x="31.4" y="8" width="1" height="3" fill="#222"/><rect x="35.6" y="8" width="1" height="3" fill="#222"/><rect x="39.8" y="8" width="1" height="3" fill="#222"/><rect x="44" y="8" width="1" height="3" fill="#222"/></svg>
<svg class="ic" style="left:1535px;top:778px" width="48" height="20" viewBox="0 0 48 20"><rect x="0" y="8.75" width="48" height="3.5" fill="#cfe0f5"/></svg>
<div style="left:1063.2px;top:672px;width:51.3px;height:16px;overflow:hidden"><span class="l" style="left:0px;top:-1.16px;letter-spacing:0.31px">Bridleway</span></div>
<div style="left:1130.4px;top:672px;width:43.1px;height:16px;overflow:hidden"><span class="l" style="left:0px;top:-1.16px;;letter-spacing:0.008px">Canal</span></div>
<div style="left:1189.3px;top:672px;width:43.2px;height:16px;overflow:hidden"><span class="l" style="left:0px;top:-1.16px;letter-spacing:0.17px">Canal ri</span></div>
<div style="left:1240px;top:672px;width:51.5px;height:16px;overflow:hidden"><span class="l" style="left:0px;top:-1.16px;letter-spacing:0.37px">Construc</span></div>
<div style="left:1299px;top:672px;width:51.5px;height:16px;overflow:hidden"><span class="l" style="left:0px;top:-1.16px;letter-spacing:0.19px">Crossing</span></div>
<div style="left:1367px;top:672px;width:42.5px;height:16px;overflow:hidden"><span class="l" style="left:0px;top:-1.16px;letter-spacing:0.28px">Cycle p</span></div>
<div style="left:1428px;top:672px;width:40.5px;height:16px;overflow:hidden"><span class="l" style="left:0px;top:-1.16px;;letter-spacing:0.085px">Dam</span></div>
<div style="left:1486.4px;top:672px;width:41.1px;height:16px;overflow:hidden"><span class="l" style="left:0px;top:-1.16px;;letter-spacing:0.051px">Ditch</span></div>
<div style="left:1544px;top:672px;width:42.5px;height:16px;overflow:hidden"><span class="l" style="left:0px;top:-1.16px;;letter-spacing:0.263px">Drain</span></div>
<div style="left:1063px;top:744px;width:51.5px;height:16px;overflow:hidden"><span class="l" style="left:0px;top:-1.16px;letter-spacing:0.45px">Floodway</span></div>
<div style="left:1122px;top:744px;width:51.5px;height:16px;overflow:hidden"><span class="l" style="left:0px;top:-1.16px;;letter-spacing:0.253px">Footpath</span></div>
<div style="left:1191.8px;top:744px;width:40.7px;height:16px;overflow:hidden"><span class="l" style="left:0px;top:-1.16px;;letter-spacing:0.131px">Jetty</span></div>
<div style="left:1248px;top:744px;width:43.5px;height:16px;overflow:hidden"><span class="l" style="left:0px;top:-1.16px;letter-spacing:0.25px">Living s</span></div>
<div style="left:1299px;top:744px;width:51.5px;height:16px;overflow:hidden"><span class="l" style="left:0px;top:-1.16px;letter-spacing:0.02px">LockedRo</span></div>
<div style="left:1358px;top:744px;width:51.5px;height:16px;overflow:hidden"><span class="l" style="left:0px;top:-1.16px;letter-spacing:0.5px">Motorway</span></div>
<div style="left:1417px;top:744px;width:51.5px;height:16px;overflow:hidden"><span class="l" style="left:0px;top:-1.16px;letter-spacing:0.5px">Motorway</span></div>
<div style="left:1476px;top:744px;width:51.5px;height:16px;overflow:hidden"><span class="l" style="left:0px;top:-1.16px;letter-spacing:0.01px">Pedestria</span></div>
<div style="left:1537px;top:744px;width:49.5px;height:16px;overflow:hidden"><span class="l" style="left:0px;top:-1.16px;;letter-spacing:0.294px">Primary</span></div>
<div class="btn" style="left:1519px;top:816px;width:102px;height:22px;"></div>
<span class="t" style="left:1524px;top:819.19px;;letter-spacing:0.064px">Дополнительно</span>
<svg class="ic" style="left:1609.5px;top:824px" width="5" height="3" viewBox="0 0 5 3"><path d="M0 0H5L2.5 3Z" fill="#000"/></svg>
<svg class="ic" style="left:776px;top:853px" width="12" height="9" viewBox="0 0 12 9"><path d="M0 .5H11L5.500 8Z" fill="#1a1a1a"/></svg>
<span class="t" style="left:793.5px;top:850.19px;;letter-spacing:-0.069px">Отрисовка</span>
<div style="left:773px;top:857px;width:848px;height:73px;border:1px solid #c6c6c6;border-top:none;border-radius:0 0 3px 3px"></div>
<div style="left:856px;top:857px;width:765px;height:1px;background:#c6c6c6"></div>
<span class="t" style="left:783px;top:875.49px;;letter-spacing:-0.021px">Прозрачность</span>
<div style="left:994px;top:880.5px;width:563px;height:3px;border:1px solid #b0b0b0;border-radius:2px;background:#e7e7e7"></div>
<svg class="ic" style="left:991px;top:874px" width="11" height="17" viewBox="0 0 11 17"><path d="M1 2Q1 .8 2.200 .8H8.800Q10 .8 10 2V10.500L5.500 15.500L1 10.500Z" fill="#f4f4f4" stroke="#8c8c8c" stroke-width="1"/></svg>
<div class="inp" style="left:1564px;top:874px;width:46px;height:18px;"></div>
<span class="t" style="left:1569px;top:875.69px;;letter-spacing:-0.125px">0</span>
<div class="btn" style="left:1594px;top:875px;width:15px;height:8px;border-radius:0 2px 0 0"></div>
<div class="btn" style="left:1594px;top:883px;width:15px;height:8px;border-radius:0 0 2px 0"></div>
<svg class="ic" style="left:1598px;top:876px" width="8" height="14" viewBox="0 0 8 14"><path d="M0 4.500h7L3.500 1ZM0 9.500h7l-3.500 3.500Z" fill="#000"/></svg>
<span class="t" style="left:783px;top:901.49px;;letter-spacing:-0.301px">Режим смешивания слоя</span>
<div class="btn" style="left:991px;top:900px;width:203px;height:18px;"></div><div style="left:1177px;top:901px;width:1px;height:16px;background:#a9a9a9"></div><svg class="ic" style="left:1182.5px;top:907.5px" width="7" height="4" viewBox="0 0 7 4"><path d="M0 0H7L3.5 4Z" fill="#000"/></svg><span class="t" style="left:996px;top:901.39px;;letter-spacing:-0.089px">Обычный</span>
<span class="t" style="left:1200.5px;top:901.49px;;letter-spacing:-0.122px">Режим смешивания объектов</span>
<div class="btn" style="left:1408px;top:900px;width:202px;height:18px;"></div><div style="left:1593px;top:901px;width:1px;height:16px;background:#a9a9a9"></div><svg class="ic" style="left:1598.5px;top:907.5px" width="7" height="4" viewBox="0 0 7 4"><path d="M0 0H7L3.5 4Z" fill="#000"/></svg><span class="t" style="left:1413px;top:901.39px;;letter-spacing:-0.089px">Обычный</span>
<div class="btn" style="left:773px;top:936px;width:75px;height:23px;"></div>
<span class="t" style="left:788.5px;top:940.19px;;letter-spacing:-0.056px">Стиль</span>
<svg class="ic" style="left:836.5px;top:945px" width="5" height="3" viewBox="0 0 5 3"><path d="M0 0H5L2.5 3Z" fill="#000"/></svg>
<div class="btn" style="left:1291px;top:936px;width:75px;height:23px;border-color:#3c3c3c;box-shadow:inset 0 0 0 1px rgba(255,255,255,.75),inset 0 0 0 2px rgba(100,100,100,.15)"></div>
<span class="t" style="left:1320.5px;top:940.19px;;letter-spacing:-0.453px">OK</span>
<div class="btn" style="left:1376px;top:936px;width:75px;height:23px;"></div>
<span class="t" style="left:1393.5px;top:940.19px;;letter-spacing:-0.245px">Отмена</span>
<div class="btn" style="left:1461px;top:936px;width:75px;height:23px;"></div>
<span class="t" style="left:1470px;top:940.19px;;letter-spacing:-0.149px">Применить</span>
<div class="btn" style="left:1546px;top:936px;width:75px;height:23px;"></div>
<span class="t" style="left:1561.5px;top:940.19px;;letter-spacing:-0.165px">Справка</span>
<div style="left:0px;top:990px;width:1680px;height:30px;background:#f0f0f0"></div>
<span class="t" style="left:5px;top:997.19px;;letter-spacing:0.073px">Переключить текущий слой в режим редактирования</span>
<div class="btn" style="left:721px;top:995px;width:20px;height:20px;background:#f2f2f2"><svg class="ic" style="left:0px;top:0px" width="18" height="18" viewBox="0 0 18 18"><ellipse cx="7.500" cy="8.500" rx="4.300" ry="7" transform="rotate(-28 7.500 8.500)" fill="#d8d8d8" stroke="#1a1a1a" stroke-width="1.500"/><ellipse cx="6" cy="5.500" rx="1.500" ry="3.300" transform="rotate(-28 6 5.500)" fill="#f4f4f4" stroke="#1a1a1a" stroke-width="1.100"/><path d="M3 11.500Q7 12.500 11 8.500" stroke="#1a1a1a" stroke-width="1.100" fill="none"/><circle cx="11.300" cy="13" r="3.200" fill="#e8e8e8" stroke="#1a1a1a" stroke-width="1.500"/><circle cx="11.500" cy="13.200" r="1.200" fill="#1a1a1a"/><path d="M12 5.500L15.500 2.500" stroke="#333" stroke-width="1" stroke-dasharray="1 1"/></svg></div>
<span class="t" style="left:749px;top:996.99px;;letter-spacing:0.315px">Координаты:</span>
<div class="inp" style="left:827px;top:995px;width:301px;height:20px;"></div>
<span class="t" style="left:936px;top:997.69px;;letter-spacing:-0.042px">566271,5606257</span>
<span class="t" style="left:1135px;top:996.99px;;letter-spacing:-0.152px">Масштаб</span>
<div class="inp" style="left:1193px;top:995px;width:86px;height:20px;"></div>
<div class="btn" style="left:1263px;top:995px;width:16px;height:20px;border-radius:0 2px 2px 0"></div>
<svg class="ic" style="left:1267.5px;top:1003px" width="7" height="4" viewBox="0 0 7 4"><path d="M0 0H7L3.5 4Z" fill="#000"/></svg>
<span class="t" style="left:1198px;top:997.69px;;letter-spacing:0.021px">1:22 381</span>
<span class="t" style="left:1288px;top:996.99px;;letter-spacing:-0.168px">Вращение:</span>
<div class="inp" style="left:1353px;top:994px;width:98px;height:24px;"></div>
<span class="t" style="left:1358px;top:998.19px;;letter-spacing:-0.099px">0,0</span>
<div class="btn" style="left:1434px;top:995px;width:16px;height:11px;border-radius:0 2px 0 0"></div>
<div class="btn" style="left:1434px;top:1006px;width:16px;height:11px;border-radius:0 0 2px 0"></div>
<svg class="ic" style="left:1438px;top:998px" width="8" height="16" viewBox="0 0 8 16"><path d="M0 4.500h7L3.500 .5ZM0 11.500h7l-3.500 4Z" fill="#000"/></svg>
<div style="left:1457px;top:998px;width:13px;height:13px;background:#fff;border:1px solid #8f8f8f"><svg class="ic" style="left:0;top:0" width="11" height="11" viewBox="0 0 11 11"><path d="M2 2l7 7M9 2l-7 7" stroke="#000" stroke-width="2.700"/></svg></div>
<span class="t" style="left:1474.5px;top:996.99px;;letter-spacing:-0.014px">Отрисовка</span>
<svg class="ic" style="left:1548px;top:997px" width="16" height="16" viewBox="0 0 16 16"><circle cx="8" cy="8" r="7" fill="#bdbdbd" stroke="#787878" stroke-width="1.300"/><circle cx="8" cy="8" r="3.800" fill="#e6e6e6" stroke="#7c7c7c" stroke-width="1"/><path d="M8 1v14M1 8h14" stroke="#7c7c7c" stroke-width="1"/><ellipse cx="8" cy="8" rx="3.800" ry="7" fill="none" stroke="#8a8a8a" stroke-width=".7"/></svg>
<span class="t" style="left:1567px;top:996.99px;;letter-spacing:-0.472px">EPSG:32645</span>
<svg class="ic" style="left:1648px;top:996px" width="18" height="18" viewBox="0 0 18 18"><path d="M8.500 1.500C13 1.500 16.500 4 16.500 7.500C16.500 10.500 14.500 12.500 11.500 13.200L14.500 16.500C11.500 16.200 9.500 15 8.500 13.500C4 13.500 .8 11 .8 7.500C.8 4 4 1.500 8.500 1.500Z" fill="#6e6e6e"/></svg>
<div style="left:0px;top:1020px;width:1680px;height:30px;background:linear-gradient(90deg,#6f6b67 0px,#85807b 50px,#8f8a85 150px,#9b958f 300px,#aaa49f 340px,#c4bebb 365px,#bbb5b2 430px,#c8c1be 520px,#c9c2c0 640px,#c2bbb9 700px,#cbc4c2 800px,#c4bdbc 900px,#c7c1c0 1000px,#c3bebd 1120px,#bcb7b6 1250px,#b3aeae 1350px,#a6a1a0 1450px,#989392 1540px,#8d8888 1620px,#888383 1680px)"></div>
<div style="left:0px;top:1020px;width:1680px;height:30px;background:linear-gradient(180deg,rgba(255,255,255,.18),rgba(255,255,255,.04) 40%,rgba(0,0,0,.05))"></div>
<div style="left:0px;top:1020px;width:1680px;height:1px;background:#5a5958"></div>
<div style="left:0px;top:1021px;width:1680px;height:1px;background:rgba(255,255,255,.45)"></div>
<div style="left:146px;top:1021px;width:4px;height:31px;border:1px solid rgba(60,60,60,.75);border-radius:3px;box-shadow:inset 0 0 0 1px rgba(255,255,255,.6);background:linear-gradient(rgba(255,255,255,.45),rgba(255,255,255,.24) 45%,rgba(225,225,225,.14) 50%,rgba(255,255,255,.28))"></div>
<div style="left:143px;top:1021px;width:4px;height:31px;border:1px solid rgba(60,60,60,.75);border-radius:3px;box-shadow:inset 0 0 0 1px rgba(255,255,255,.6);background:linear-gradient(rgba(255,255,255,.45),rgba(255,255,255,.24) 45%,rgba(225,225,225,.14) 50%,rgba(255,255,255,.28))"></div>
<div style="left:60px;top:1021px;width:42px;height:31px;border:1px solid rgba(60,60,60,.75);border-radius:3px;box-shadow:inset 0 0 0 1px rgba(255,255,255,.6);background:linear-gradient(rgba(255,255,255,.45),rgba(255,255,255,.24) 45%,rgba(225,225,225,.14) 50%,rgba(255,255,255,.28))"></div>
<div style="left:106px;top:1021px;width:35px;height:31px;border:1px solid rgba(60,60,60,.75);border-radius:3px;box-shadow:inset 0 0 0 1px rgba(255,255,255,.6);background:linear-gradient(rgba(255,255,255,.45),rgba(255,255,255,.24) 45%,rgba(225,225,225,.14) 50%,rgba(255,255,255,.28))"></div>
<div style="left:238px;top:1021px;width:4px;height:31px;border:1px solid rgba(60,60,60,.75);border-radius:3px;box-shadow:inset 0 0 0 1px rgba(255,255,255,.6);background:linear-gradient(rgba(255,255,255,.45),rgba(255,255,255,.24) 45%,rgba(225,225,225,.14) 50%,rgba(255,255,255,.28))"></div>
<div style="left:198px;top:1021px;width:38px;height:31px;border:1px solid rgba(60,60,60,.75);border-radius:3px;box-shadow:inset 0 0 0 1px rgba(255,255,255,.6);background:linear-gradient(rgba(255,255,255,.45),rgba(255,255,255,.24) 45%,rgba(225,225,225,.14) 50%,rgba(255,255,255,.28))"></div>
<div style="left:244px;top:1021px;width:42px;height:31px;border:1px solid rgba(60,60,60,.75);border-radius:3px;box-shadow:inset 0 0 0 1px rgba(255,255,255,.6);background:linear-gradient(rgba(255,255,255,.45),rgba(255,255,255,.24) 45%,rgba(225,225,225,.14) 50%,rgba(255,255,255,.28))"></div>
<div style="left:290px;top:1021px;width:42px;height:31px;border:1px solid rgba(60,60,60,.75);border-radius:3px;box-shadow:inset 0 0 0 1px rgba(255,255,255,.6);background:linear-gradient(rgba(255,255,255,.62),rgba(255,255,255,.38) 45%,rgba(235,235,235,.30) 50%,rgba(255,255,255,.45))"></div>
<svg class="ic" style="left:6px;top:1014px" width="42" height="36" viewBox="0 0 42 36"><defs><radialGradient id="orb" cx=".5" cy=".75" r=".8"><stop offset="0" stop-color="#7fd0f5"/><stop offset=".45" stop-color="#2f7fc6"/><stop offset="1" stop-color="#15325f"/></radialGradient></defs><circle cx="21" cy="20" r="17.500" fill="url(#orb)" stroke="#1b2c45" stroke-width="1"/><ellipse cx="21" cy="11" rx="13.500" ry="8" fill="#fff" opacity=".28"/><path d="M12 13.500C15 12 17.500 12 20 13.200L18.500 19.500C16 18.500 13.500 18.500 10.500 20Z" fill="#e8542c"/><path d="M21.500 13.800C24 15 27 15 30 13.500L28.500 20C25.500 21.500 22.500 21.300 20 20.200Z" fill="#7cc243"/><path d="M10.200 21.500C13 20 15.500 20 18.200 21L16.700 27.500C14 26.500 11.500 26.500 8.700 28Z" fill="#3f9be0"/><path d="M19.700 21.700C22 23 25 23 28.200 21.500L26.700 28C23.700 29.500 20.700 29.300 18.200 28.200Z" fill="#f7c52d"/></svg>
<svg class="ic" style="left:72.500px;top:1027px" width="16.500" height="16" viewBox="0 0 20 22" preserveAspectRatio="none"><ellipse cx="10" cy="11" rx="9.500" ry="10.500" fill="#e0121f"/><ellipse cx="10" cy="11" rx="4.200" ry="7.800" fill="#e9e4e4"/><path d="M12 1.200C17 3 19.500 7 19.500 11S17 19 12 20.800C15 18.500 16 15 16 11S15 3.500 12 1.200Z" fill="#a30d15"/></svg>
<svg class="ic" style="left:115px;top:1028px" width="16.500" height="15" viewBox="0 0 22 20"><path d="M1 3h7l2 2h11v14H1Z" fill="#f2cf5c" stroke="#c9a63c" stroke-width=".8"/><path d="M1 7h20v12H1Z" fill="#fbe38c" stroke="#d4b04a" stroke-width=".8"/><rect x="5" y="11.500" width="12" height="7.500" fill="#5fb2ea" stroke="#2f7fc0" stroke-width=".8"/><rect x="8" y="15" width="6" height="4" fill="#e8f3fb"/></svg>
<svg class="ic" style="left:166px;top:1028px" width="15" height="15" viewBox="0 0 17 17"><circle cx="8.500" cy="8.500" r="8" fill="#dd4b3e"/><path d="M8.500 8.500L1.600 4.500A8 8 0 0 0 8 16.500Z" fill="#1da462"/><path d="M8.500 8.500L8 16.500A8 8 0 0 0 15.400 4.500Z" fill="#fcc934"/><path d="M1.600 4.500A8 8 0 0 1 15.400 4.500L8.500 4.500Z" fill="#dd4b3e"/><circle cx="8.500" cy="8.500" r="3.700" fill="#fff"/><circle cx="8.500" cy="8.500" r="2.900" fill="#4c8bf5"/></svg>
<svg class="ic" style="left:207px;top:1027px" width="17" height="17" viewBox="0 0 22 22"><circle cx="9.500" cy="9" r="8.200" fill="#1e4f9a" stroke="#12305f" stroke-width="1"/><circle cx="9" cy="8.500" r="5" fill="#9fd8ef" stroke="#e8f4fa" stroke-width="1.200"/><path d="M6 7l3-1.500 2 2.500-2.500 3Z" fill="#3da04a"/><path d="M13 13l6 6" stroke="#c98a2b" stroke-width="3.200" stroke-linecap="round"/></svg>
<svg class="ic" style="left:260px;top:1027px" width="13" height="16.500" viewBox="0 0 18 22"><path d="M2 3h14v17l-2 1.500H2Z" fill="#a9d3ee" stroke="#4f86b5" stroke-width=".9"/><path d="M3 1.500v3M5.500 1.500v3M8 1.500v3M10.500 1.500v3M13 1.500v3M15.200 1.500v3" stroke="#39536b" stroke-width="1"/><path d="M4 7.500h10M4 10h10M4 12.500h10M4 15h10M4 17.500h7" stroke="#6fa3c9" stroke-width=".8"/></svg>
<svg class="ic" style="left:303px;top:1025.500px" width="15" height="19" viewBox="0 0 15 19"><path d="M6.800 3.200C3.500 4.500 1.800 8 2.300 11.500C2.700 14 4.500 15.800 6.500 15.500C5.300 12 5.500 7 6.800 3.200Z" fill="#eef55a" stroke="#c3cf3a" stroke-width=".5"/><path d="M11 5.500C13 7 13.600 10.500 12.600 13.500C12 15.200 13 16 13.200 17C11.500 17.600 10 16.800 9.200 15.500C8 13.500 8.600 9 11 5.500Z" fill="#eef55a" stroke="#c3cf3a" stroke-width=".5"/><path d="M5.500 13.500L11.500 5" stroke="#168a16" stroke-width="1.700"/><path d="M10.300 3.200L13.400 2.800L13.200 6Z" fill="#15a015"/><path d="M1.800 15l3.400.3-.3 2.800-1.300-.2.200-1.700-2-.2Z" fill="#0f5c0f"/></svg>
<span class="t" style="left:1544px;top:1024.52px;color:#fff;font-size:11.5px;letter-spacing:-0.812px">RU</span>
<svg class="ic" style="left:1575.500px;top:1034px" width="8" height="4.500" viewBox="0 0 9 5"><path d="M0 5H9L4.500 0Z" fill="#fff"/></svg>
<span class="t" style="left:1613px;top:1027.02px;color:#fff;font-size:11.5px;letter-spacing:-0.156px">10:44</span>
<div style="left:1666px;top:1021px;width:14px;height:29px;border:1px solid rgba(40,40,40,.8);box-shadow:inset 0 0 0 1px rgba(255,255,255,.35);background:linear-gradient(rgba(255,255,255,.28),rgba(255,255,255,.08))"></div></body></html>
